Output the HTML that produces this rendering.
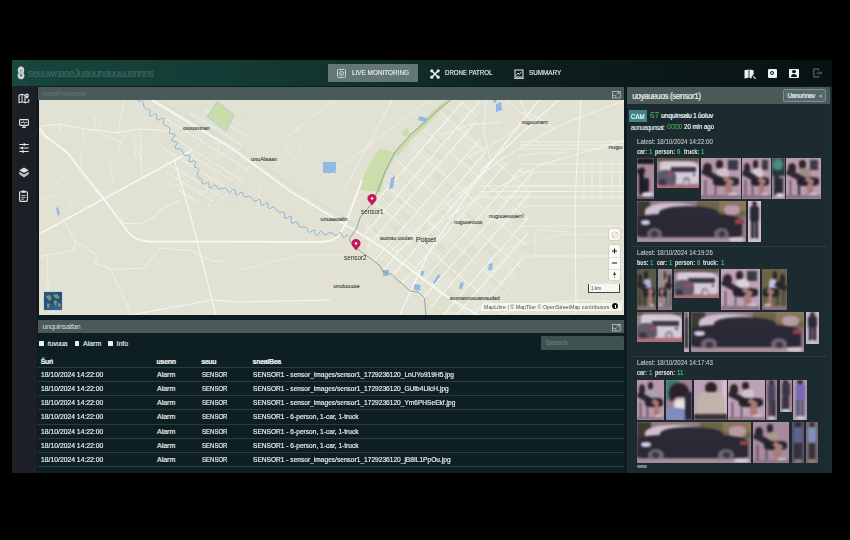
<!DOCTYPE html>
<html><head><meta charset="utf-8">
<style>
*{margin:0;padding:0;box-sizing:border-box}
html,body{width:850px;height:540px;overflow:hidden;background:#000;font-family:"Liberation Sans",sans-serif;color:#e6e9e8}
.a{position:absolute}
#hdr{left:12px;top:60px;width:820px;height:26px;background:linear-gradient(90deg,#17453d 0%,#153c36 25%,#112f2b 45%,#0c1b1b 70%,#091212 100%)}
#side{left:12px;top:86px;width:25px;height:387px;background:#1c1f26}
#main{left:37px;top:86px;width:795px;height:387px;background:#0c1b1e}
#mapbar{left:38px;top:87px;width:586px;height:13px;background:#4a5a59}
#map{left:39px;top:100px;width:585px;height:214.5px;background:#e2e2d4;overflow:hidden}
#tblbar{left:38px;top:320px;width:586px;height:13px;background:#4a5a59}
#tbl{left:38px;top:333px;width:586px;height:140px;background:#0d1f23}
#rp{left:627px;top:87px;width:205px;height:386px;background:linear-gradient(90deg,#1c2b30 0,#1c2b30 203px,#1a2f34 203px)}
#rphdr{left:627px;top:87px;width:203px;height:17px;background:#4a5a59}
.nav{font-size:7px;color:#e8eceb;white-space:nowrap;transform-origin:0 0;-webkit-text-stroke:.15px currentColor}
.t7{font-size:7px;white-space:nowrap;-webkit-text-stroke:.18px currentColor}
</style></head>
<body>
<div id="hdr" class="a"></div>

<!-- header content -->
<div class="a" style="left:12px;top:60px;width:16px;height:26px;background:#1a4a43;opacity:.55"></div>
<svg class="a" style="left:17px;top:65.5px" width="8" height="14" viewBox="0 0 8 14">
 <ellipse cx="4" cy="4.3" rx="3.2" ry="3.9" fill="#d3ddd9"/>
 <ellipse cx="4" cy="9.6" rx="3.4" ry="3.6" fill="#c9d5d1"/>
 <ellipse cx="4" cy="4.6" rx="1.6" ry="1.6" fill="#9fb3ad"/>
 <circle cx="4" cy="9.3" r="1.1" fill="#3d5a54"/>
 <path d="M1 7 H7" stroke="#8fa6a0" stroke-width=".6"/>
</svg>
<div class="a" style="left:28px;top:68px;font-size:10px;color:#3b6a61;white-space:nowrap;letter-spacing:-0.5px;-webkit-text-stroke:.2px currentColor">seuuwnaseJuauunauuuusnnns</div>
<div class="a" style="left:328px;top:64px;width:90px;height:18px;background:#637775;border-radius:1px"></div>
<svg class="a" style="left:337px;top:69px" width="9" height="9" viewBox="0 0 9 9">
 <rect x=".5" y=".5" width="8" height="8" fill="none" stroke="#c8d2d0" stroke-width="1" rx="1"/>
 <circle cx="4.5" cy="4.5" r="2.2" fill="none" stroke="#c8d2d0" stroke-width=".9"/>
 <circle cx="4.5" cy="4.5" r=".9" fill="#c8d2d0"/>
</svg>
<div class="a nav" style="left:352px;top:69.4px;transform:scaleX(.912)">LIVE MONITORING</div>
<svg class="a" style="left:430px;top:68.5px" width="10" height="10" viewBox="0 0 10 10">
 <path d="M2 2 L8 8 M8 2 L2 8" stroke="#e8eceb" stroke-width="1.6"/>
 <circle cx="1.8" cy="1.8" r="1.6" fill="#e8eceb"/><circle cx="8.2" cy="1.8" r="1.6" fill="#e8eceb"/>
 <circle cx="1.8" cy="8.2" r="1.6" fill="#e8eceb"/><circle cx="8.2" cy="8.2" r="1.6" fill="#e8eceb"/>
</svg>
<div class="a nav" style="left:445.4px;top:69.4px;transform:scaleX(.875)">DRONE PATROL</div>
<svg class="a" style="left:513.5px;top:68.5px" width="10" height="10" viewBox="0 0 10 10">
 <rect x="1" y="1" width="8" height="7" fill="none" stroke="#e8eceb" stroke-width="1"/>
 <path d="M2.5 6.5 L4 4 L5.5 5.5 L7.5 2.8" fill="none" stroke="#e8eceb" stroke-width=".9"/>
 <path d="M0 9.3 H10" stroke="#e8eceb" stroke-width="1"/>
</svg>
<div class="a nav" style="left:528.6px;top:69.4px;transform:scaleX(.9)">SUMMARY</div>
<!-- right icons -->
<svg class="a" style="left:744px;top:68.5px" width="13" height="10" viewBox="0 0 13 10">
 <path d="M0.5 1.2 L4.6 0.4 L4.6 8.8 L0.5 9.5Z M5.4 0.4 L9.6 1.2 L9.6 5.6 L7.6 7.6 L7.6 9.4 L5.4 8.8Z" fill="#eef1f0"/>
 <path d="M9.2 7.4 L11.8 9.8" stroke="#eef1f0" stroke-width="1.1"/>
</svg>
<div class="a" style="left:767.5px;top:69px;width:9px;height:8.6px;background:#eef1f0;border-radius:1.2px"></div>
<div class="a" style="left:770px;top:71.3px;width:4px;height:4px;border:1.2px solid #1a1f1f;border-radius:50%"></div>
<div class="a" style="left:789px;top:68.5px;width:10px;height:9.3px;background:#eef1f0;border-radius:1px"></div>
<div class="a" style="left:792.3px;top:69.8px;width:3.4px;height:3.4px;background:#121818;border-radius:50%"></div>
<div class="a" style="left:790.8px;top:74px;width:6.4px;height:2.5px;background:#121818;border-radius:3px 3px 0 0"></div>
<svg class="a" style="left:812.5px;top:68.3px" width="9" height="10" viewBox="0 0 9 10">
 <path d="M5.5 2.5 V1 H0.8 V9 H5.5 V7.5" fill="none" stroke="#6e7676" stroke-width="1"/>
 <path d="M3.5 5 H8.5 M7 3.5 L8.5 5 L7 6.5" fill="none" stroke="#6e7676" stroke-width=".9"/>
</svg>
<div id="side" class="a"></div>
<div id="main" class="a"></div>
<svg class="a" style="left:17.5px;top:93px" width="12" height="11" viewBox="0 0 12 11">
 <path d="M1 2.2 L4 1.2 L7 2.2 V9.8 L4 8.8 L1 9.8Z" fill="none" stroke="#e4e7e8" stroke-width="1.1" stroke-linejoin="round"/>
 <path d="M4 1.5 V8.5" stroke="#e4e7e8" stroke-width="1"/>
 <path d="M7 9.8 L10.8 8.8 V6" fill="none" stroke="#e4e7e8" stroke-width="1.1"/>
 <path d="M9 0.6 a1.9 1.9 0 0 1 1.9 1.9 c0 1.3 -1.9 3.3 -1.9 3.3 c0 0 -1.9 -2 -1.9 -3.3 a1.9 1.9 0 0 1 1.9 -1.9Z" fill="#e4e7e8"/>
 <circle cx="9" cy="2.5" r=".7" fill="#1c1f26"/>
</svg>
<svg class="a" style="left:18.5px;top:118.5px" width="10" height="9" viewBox="0 0 10 9">
 <rect x="0.6" y="0.6" width="8.8" height="5.8" rx=".8" fill="none" stroke="#e4e7e8" stroke-width="1.1"/>
 <path d="M1.8 3.5 H3.8 L4.5 2.3 L5.5 4.5 L6.2 3.5 H8.2" fill="none" stroke="#e4e7e8" stroke-width=".8"/>
 <path d="M3 8.3 H7" stroke="#e4e7e8" stroke-width="1.2"/><path d="M5 6.5 V8" stroke="#e4e7e8" stroke-width="1"/>
</svg>
<svg class="a" style="left:18.5px;top:142.5px" width="10" height="10" viewBox="0 0 10 10">
 <path d="M0.3 1.5 H9.7 M0.3 5 H9.7 M0.3 8.5 H9.7" stroke="#e4e7e8" stroke-width="1"/>
 <rect x="4.5" y="0.3" width="1.6" height="2.4" fill="#e4e7e8"/>
 <rect x="2.3" y="3.8" width="1.6" height="2.4" fill="#e4e7e8"/>
 <rect x="3.3" y="7.3" width="1.6" height="2.4" fill="#e4e7e8"/>
</svg>
<svg class="a" style="left:18.5px;top:166.5px" width="10" height="11" viewBox="0 0 10 11">
 <path d="M5 0.5 L9.7 3.3 L5 6.1 L0.3 3.3Z" fill="#dde1e0"/>
 <path d="M0.3 4.6 L5 7.4 L9.7 4.6 V7.2 L5 10.4 L0.3 7.2Z" fill="#c4c9c8"/>
</svg>
<svg class="a" style="left:18.8px;top:189.8px" width="9" height="12" viewBox="0 0 9 12">
 <rect x="0.6" y="1.8" width="7.8" height="9.6" rx=".9" fill="none" stroke="#e4e7e8" stroke-width="1.1"/>
 <rect x="2.6" y="0.6" width="3.8" height="2.2" rx=".5" fill="#e4e7e8"/>
 <path d="M2.3 5.4 H6.7 M2.3 7.3 H6.7 M2.3 9.2 H5" stroke="#e4e7e8" stroke-width=".8"/>
</svg>

<div id="mapbar" class="a"></div>
<div id="map" class="a"></div>
<!--MAP-->
<svg class="a" style="left:39px;top:100px" width="585" height="215" viewBox="39 100 585 215"><path d="M165.0 110.0 L200.0 100.0 L245.0 118.0 L250.0 150.0 L235.0 200.0 L200.0 205.0 L170.0 175.0 L160.0 140.0Z" fill="#dedfd1" opacity="0.5" stroke="none" stroke-width="0"/><path d="M363.0 229.0 L380.0 195.0 L398.0 160.0 L425.0 128.0 L445.0 110.0 L468.0 100.0 L480.0 100.0 L474.0 130.0 L488.0 158.0 L515.0 165.0 L532.0 172.0 L530.0 200.0 L526.0 250.0 L512.0 290.0 L485.0 316.0 L440.0 316.0 L400.0 282.0 L370.0 258.0Z" fill="#d9d9ca" opacity="0.3" stroke="none" stroke-width="0"/><clipPath id="cp1"><path d="M363 229 L380 195 L398 160 L425 128 L445 110 L468 100 L480 100 L474 130 L488 158 L515 165 L532 172 L530 200 L526 250 L512 290 L485 316 L440 316 L400 282 L370 258Z"/></clipPath><g clip-path="url(#cp1)"><path d="M167.3 229.2 L176.7 237.4 M169.1 227.1 L178.5 235.3 M170.9 225.0 L180.4 233.2 M172.8 222.9 L182.2 231.1 M174.6 220.8 L184.0 229.0 M176.4 218.6 L185.9 226.8 M178.3 216.5 L187.7 224.7 M180.1 214.4 L189.5 222.6 M181.9 212.3 L191.4 220.5 M183.8 210.2 L193.2 218.4 M187.7 205.7 L197.1 213.9 M189.3 203.9 L198.7 212.1 M190.9 202.1 L200.3 210.3 M192.4 200.3 L201.9 208.5 M194.0 198.4 L203.4 206.6 M195.6 196.6 L205.0 204.8 M197.2 194.8 L206.6 203.0 M198.7 193.0 L208.2 201.2 M200.3 191.2 L209.7 199.4 M201.9 189.4 L211.3 197.6 M203.4 187.6 L212.9 195.8 M205.0 185.8 L214.5 194.0 M222.4 165.8 L231.8 174.0 M224.2 163.7 L233.6 171.9 M226.0 161.6 L235.5 169.8 M227.9 159.5 L237.3 167.7 M229.7 157.4 L239.1 165.6 M231.5 155.2 L241.0 163.5 M233.4 153.1 L242.8 161.3 M235.2 151.0 L244.7 159.2 M237.1 148.9 L246.5 157.1 M238.9 146.8 L248.3 155.0 M240.7 144.7 L250.2 152.9 M242.6 142.6 L252.0 150.8 M244.4 140.5 L253.8 148.7 M250.1 133.9 L259.5 142.1 M251.9 131.8 L261.4 140.0 M253.8 129.7 L263.2 137.9 M255.6 127.6 L265.0 135.8 M257.4 125.5 L266.9 133.7 M259.3 123.4 L268.7 131.6 M261.1 121.2 L270.5 129.4 M264.1 117.8 L273.5 126.0 M265.4 116.3 L274.8 124.5 M266.7 114.8 L276.1 123.0 M268.0 113.3 L277.4 121.5 M269.3 111.8 L278.7 120.0 M270.6 110.3 L280.1 118.5 M275.2 105.0 L284.7 113.2 M276.5 103.5 L286.0 111.7 M277.8 102.0 L287.3 110.2 M279.2 100.5 L288.6 108.7 M280.5 99.0 L289.9 107.2 M281.8 97.5 L291.2 105.7 M283.1 96.0 L292.5 104.2 M284.4 94.4 L293.8 102.7 M285.7 92.9 L295.1 101.1 M287.0 91.4 L296.5 99.6 M288.3 89.9 L297.8 98.1 M289.7 88.4 L299.1 96.6 M291.0 86.9 L300.4 95.1 M292.3 85.4 L301.7 93.6 M298.0 78.8 L307.4 87.0 M299.5 77.0 L309.0 85.2 M301.1 75.2 L310.5 83.4 M302.7 73.4 L312.1 81.6 M304.3 71.6 L313.7 79.8 M305.8 69.8 L315.3 78.0 M307.4 68.0 L316.8 76.2 M309.0 66.2 L318.4 74.4 M314.0 60.5 L323.4 68.7 M315.8 58.3 L325.2 66.5 M317.6 56.2 L327.1 64.4 M319.5 54.1 L328.9 62.3 M321.3 52.0 L330.7 60.2 M323.1 49.9 L332.6 58.1 M325.0 47.8 L334.4 56.0 M326.8 45.7 L336.2 53.9 M328.6 43.6 L338.1 51.8 M330.5 41.4 L339.9 49.6 M332.3 39.3 L341.8 47.5 M334.2 37.2 L343.6 45.4 M336.0 35.1 L345.4 43.3 M337.8 33.0 L347.3 41.2 M368.4 -2.1 L377.8 6.1 M370.2 -4.3 L379.6 3.9 M372.0 -6.4 L381.5 1.8 M373.9 -8.5 L383.3 -0.3 M375.7 -10.6 L385.2 -2.4 M377.6 -12.7 L387.0 -4.5 M380.6 -16.3 L390.1 -8.1 M382.5 -18.4 L391.9 -10.2 M384.3 -20.5 L393.7 -12.3 M386.2 -22.6 L395.6 -14.4 M388.0 -24.7 L397.4 -16.5 M389.8 -26.8 L399.3 -18.6 M391.7 -28.9 L401.1 -20.7 M393.5 -31.1 L402.9 -22.9 M395.3 -33.2 L404.8 -25.0 M397.2 -35.3 L406.6 -27.1 M399.0 -37.4 L408.4 -29.2 M404.1 -43.3 L413.6 -35.1 M405.7 -45.1 L415.1 -36.9 M407.3 -46.9 L416.7 -38.7 M408.9 -48.7 L418.3 -40.5 M410.4 -50.5 L419.9 -42.3 M412.0 -52.3 L421.4 -44.1 M413.6 -54.1 L423.0 -45.9 M415.1 -56.0 L424.6 -47.8 M416.7 -57.8 L426.2 -49.6 M418.3 -59.6 L427.7 -51.4 M419.9 -61.4 L429.3 -53.2 M421.4 -63.2 L430.9 -55.0 M425.6 -68.0 L435.0 -59.8 M426.9 -69.5 L436.3 -61.3 M428.2 -71.0 L437.7 -62.8 M429.5 -72.5 L439.0 -64.3 M430.8 -74.0 L440.3 -65.8 M432.2 -75.5 L441.6 -67.3 M433.5 -77.0 L442.9 -68.8 M434.8 -78.5 L444.2 -70.3 M436.1 -80.1 L445.5 -71.9 M437.4 -81.6 L446.8 -73.4 M438.7 -83.1 L448.2 -74.9 M440.0 -84.6 L449.5 -76.4 M441.3 -86.1 L450.8 -77.9 M442.7 -87.6 L452.1 -79.4 M444.0 -89.1 L453.4 -80.9 M445.3 -90.6 L454.7 -82.4 M446.6 -92.1 L456.0 -83.9 M447.9 -93.6 L457.3 -85.4 M449.2 -95.1 L458.6 -86.9 M178.4 238.9 L187.8 247.1 M180.0 237.1 L189.4 245.3 M181.5 235.3 L191.0 243.5 M183.1 233.5 L192.5 241.7 M184.7 231.7 L194.1 239.9 M186.3 229.8 L195.7 238.0 M187.8 228.0 L197.3 236.2 M189.4 226.2 L198.8 234.4 M191.0 224.4 L200.4 232.6 M192.6 222.6 L202.0 230.8 M194.1 220.8 L203.6 229.0 M195.7 219.0 L205.1 227.2 M197.3 217.2 L206.7 225.4 M203.3 210.3 L212.7 218.5 M205.1 208.2 L214.5 216.4 M206.9 206.0 L216.4 214.2 M208.8 203.9 L218.2 212.1 M210.6 201.8 L220.1 210.0 M212.5 199.7 L221.9 207.9 M214.3 197.6 L223.7 205.8 M216.1 195.5 L225.6 203.7 M218.0 193.4 L227.4 201.6 M219.8 191.3 L229.2 199.5 M221.6 189.1 L231.1 197.3 M223.5 187.0 L232.9 195.2 M225.3 184.9 L234.8 193.1 M227.2 182.8 L236.6 191.0 M252.9 153.2 L262.3 161.4 M254.8 151.1 L264.2 159.3 M256.6 148.9 L266.0 157.1 M258.4 146.8 L267.9 155.0 M260.3 144.7 L269.7 152.9 M267.1 136.8 L276.6 145.0 M268.7 135.0 L278.1 143.2 M270.3 133.2 L279.7 141.4 M271.9 131.4 L281.3 139.6 M273.4 129.6 L282.9 137.8 M275.0 127.8 L284.4 136.0 M280.3 121.7 L289.7 129.9 M281.9 119.9 L291.3 128.1 M283.4 118.1 L292.9 126.3 M285.0 116.3 L294.4 124.5 M286.6 114.4 L296.0 122.6 M292.0 108.2 L301.4 116.4 M293.3 106.7 L302.7 114.9 M294.6 105.2 L304.0 113.4 M295.9 103.7 L305.4 111.9 M297.2 102.2 L306.7 110.4 M298.5 100.7 L308.0 108.9 M302.2 96.5 L311.6 104.7 M303.8 94.6 L313.2 102.8 M305.4 92.8 L314.8 101.0 M306.9 91.0 L316.4 99.2 M308.5 89.2 L317.9 97.4 M310.1 87.4 L319.5 95.6 M311.7 85.6 L321.1 93.8 M313.2 83.8 L322.7 92.0 M314.8 82.0 L324.2 90.2 M316.4 80.2 L325.8 88.4 M318.0 78.3 L327.4 86.5 M319.5 76.5 L329.0 84.7 M323.6 71.8 L333.0 80.0 M324.9 70.3 L334.4 78.5 M326.2 68.8 L335.7 77.0 M327.6 67.3 L337.0 75.5 M328.9 65.8 L338.3 74.0 M330.2 64.3 L339.6 72.5 M331.5 62.8 L340.9 71.0 M332.8 61.3 L342.2 69.5 M334.1 59.8 L343.5 68.0 M335.4 58.3 L344.9 66.5 M336.7 56.7 L346.2 64.9 M338.0 55.2 L347.5 63.4 M339.4 53.7 L348.8 61.9 M340.7 52.2 L350.1 60.4 M342.0 50.7 L351.4 58.9 M343.3 49.2 L352.7 57.4 M344.6 47.7 L354.0 55.9 M345.9 46.2 L355.4 54.4 M347.2 44.7 L356.7 52.9 M348.5 43.2 L358.0 51.4 M373.8 14.1 L383.2 22.3 M375.6 12.0 L385.1 20.2 M377.5 9.9 L386.9 18.1 M379.3 7.8 L388.7 16.0 M381.2 5.6 L390.6 13.8 M383.0 3.5 L392.4 11.7 M384.8 1.4 L394.3 9.6 M387.6 -1.8 L397.0 6.5 M388.9 -3.3 L398.3 4.9 M390.2 -4.8 L399.6 3.4 M391.5 -6.3 L401.0 1.9 M392.8 -7.8 L402.3 0.4 M394.1 -9.3 L403.6 -1.1 M395.5 -10.8 L404.9 -2.6 M396.8 -12.3 L406.2 -4.1 M398.1 -13.8 L407.5 -5.6 M399.4 -15.3 L408.8 -7.1 M400.7 -16.8 L410.1 -8.6 M402.0 -18.4 L411.5 -10.2 M403.3 -19.9 L412.8 -11.7 M404.6 -21.4 L414.1 -13.2 M406.0 -22.9 L415.4 -14.7 M407.3 -24.4 L416.7 -16.2 M408.6 -25.9 L418.0 -17.7 M409.9 -27.4 L419.3 -19.2 M411.2 -28.9 L420.6 -20.7 M416.1 -34.5 L425.5 -26.3 M417.9 -36.6 L427.3 -28.4 M419.7 -38.7 L429.2 -30.5 M421.6 -40.9 L431.0 -32.7 M423.4 -43.0 L432.8 -34.8 M425.3 -45.1 L434.7 -36.9 M427.1 -47.2 L436.5 -39.0 M428.9 -49.3 L438.4 -41.1 M432.9 -53.9 L442.3 -45.7 M434.2 -55.4 L443.6 -47.2 M435.5 -56.9 L445.0 -48.7 M436.8 -58.4 L446.3 -50.2 M438.1 -59.9 L447.6 -51.7 M439.5 -61.4 L448.9 -53.2 M440.8 -62.9 L450.2 -54.7 M442.1 -64.4 L451.5 -56.2 M443.4 -65.9 L452.8 -57.7 M444.7 -67.5 L454.1 -59.3 M446.0 -69.0 L455.4 -60.8 M447.3 -70.5 L456.8 -62.3 M448.6 -72.0 L458.1 -63.8 M450.0 -73.5 L459.4 -65.3 M451.3 -75.0 L460.7 -66.8 M452.6 -76.5 L462.0 -68.3 M453.9 -78.0 L463.3 -69.8 M455.2 -79.5 L464.6 -71.3 M456.5 -81.0 L465.9 -72.8 M187.7 247.0 L197.1 255.2 M189.5 244.9 L199.0 253.1 M191.4 242.8 L200.8 251.0 M193.2 240.7 L202.7 248.9 M195.1 238.5 L204.5 246.7 M196.9 236.4 L206.3 244.6 M198.7 234.3 L208.2 242.5 M200.6 232.2 L210.0 240.4 M202.4 230.1 L211.8 238.3 M204.2 228.0 L213.7 236.2 M208.4 223.2 L217.8 231.4 M210.0 221.4 L219.4 229.6 M211.5 219.6 L221.0 227.8 M213.1 217.8 L222.5 226.0 M214.7 216.0 L224.1 224.2 M216.3 214.2 L225.7 222.4 M217.8 212.4 L227.3 220.6 M219.4 210.5 L228.8 218.7 M221.0 208.7 L230.4 216.9 M222.6 206.9 L232.0 215.1 M224.1 205.1 L233.6 213.3 M225.7 203.3 L235.1 211.5 M227.3 201.5 L236.7 209.7 M228.8 199.7 L238.3 207.9 M230.4 197.9 L239.9 206.1 M232.0 196.1 L241.4 204.3 M236.7 190.6 L246.2 198.8 M238.3 188.8 L247.7 197.0 M239.9 187.0 L249.3 195.2 M241.5 185.2 L250.9 193.4 M243.0 183.4 L252.5 191.6 M244.6 181.5 L254.0 189.7 M246.2 179.7 L255.6 187.9 M247.8 177.9 L257.2 186.1 M249.3 176.1 L258.8 184.3 M250.9 174.3 L260.3 182.5 M252.5 172.5 L261.9 180.7 M254.1 170.7 L263.5 178.9 M259.3 164.7 L268.7 172.9 M261.1 162.5 L270.6 170.7 M263.0 160.4 L272.4 168.6 M264.8 158.3 L274.2 166.5 M266.6 156.2 L276.1 164.4 M268.5 154.1 L277.9 162.3 M270.3 152.0 L279.7 160.2 M275.8 145.6 L285.3 153.8 M277.4 143.8 L286.9 152.0 M279.0 142.0 L288.4 150.2 M280.6 140.2 L290.0 148.4 M282.1 138.4 L291.6 146.6 M286.3 133.6 L295.7 141.8 M287.9 131.8 L297.3 140.0 M289.4 130.0 L298.9 138.2 M291.0 128.2 L300.4 136.4 M292.6 126.3 L302.0 134.6 M294.2 124.5 L303.6 132.7 M295.7 122.7 L305.2 130.9 M297.3 120.9 L306.7 129.1 M298.9 119.1 L308.3 127.3 M300.5 117.3 L309.9 125.5 M302.0 115.5 L311.5 123.7 M303.6 113.7 L313.0 121.9 M305.2 111.9 L314.6 120.1 M306.8 110.0 L316.2 118.2 M308.3 108.2 L317.8 116.4 M309.9 106.4 L319.3 114.6 M315.1 100.4 L324.6 108.6 M317.0 98.3 L326.4 106.5 M318.8 96.2 L328.2 104.4 M320.6 94.1 L330.1 102.3 M323.5 90.8 L333.0 99.0 M325.1 89.0 L334.5 97.2 M326.7 87.1 L336.1 95.4 M328.2 85.3 L337.7 93.5 M329.8 83.5 L339.2 91.7 M331.4 81.7 L340.8 89.9 M333.0 79.9 L342.4 88.1 M334.5 78.1 L344.0 86.3 M336.1 76.3 L345.5 84.5 M341.0 70.7 L350.4 78.9 M342.6 68.9 L352.0 77.1 M344.1 67.1 L353.6 75.3 M345.7 65.2 L355.1 73.4 M347.3 63.4 L356.7 71.6 M348.9 61.6 L358.3 69.8 M350.4 59.8 L359.9 68.0 M352.0 58.0 L361.4 66.2 M353.6 56.2 L363.0 64.4 M358.1 50.9 L367.6 59.1 M359.7 49.1 L369.2 57.3 M361.3 47.3 L370.7 55.5 M362.9 45.5 L372.3 53.7 M364.4 43.7 L373.9 51.9 M366.0 41.9 L375.5 50.1 M367.6 40.1 L377.0 48.3 M369.2 38.3 L378.6 46.5 M370.7 36.4 L380.2 44.6 M372.3 34.6 L381.7 42.8 M373.9 32.8 L383.3 41.0 M375.5 31.0 L384.9 39.2 M377.0 29.2 L386.5 37.4 M378.6 27.4 L388.0 35.6 M380.2 25.6 L389.6 33.8 M409.6 -8.3 L419.0 -0.1 M411.4 -10.4 L420.9 -2.2 M413.3 -12.5 L422.7 -4.3 M415.1 -14.6 L424.5 -6.4 M417.0 -16.7 L426.4 -8.5 M423.2 -23.9 L432.7 -15.7 M424.8 -25.7 L434.2 -17.5 M426.4 -27.6 L435.8 -19.4 M428.0 -29.4 L437.4 -21.2 M429.5 -31.2 L439.0 -23.0 M431.1 -33.0 L440.5 -24.8 M432.7 -34.8 L442.1 -26.6 M434.3 -36.6 L443.7 -28.4 M438.4 -41.3 L447.8 -33.1 M439.9 -43.1 L449.4 -34.9 M441.5 -45.0 L450.9 -36.8 M443.1 -46.8 L452.5 -38.6 M444.7 -48.6 L454.1 -40.4 M446.2 -50.4 L455.7 -42.2 M219.6 226.0 L229.1 234.2 M221.5 223.9 L230.9 232.1 M223.3 221.8 L232.8 230.0 M225.2 219.7 L234.6 227.9 M227.0 217.6 L236.4 225.8 M228.8 215.5 L238.3 223.7 M230.7 213.4 L240.1 221.6 M232.5 211.2 L241.9 219.4 M234.3 209.1 L243.8 217.3 M236.2 207.0 L245.6 215.2 M238.0 204.9 L247.5 213.1 M239.9 202.8 L249.3 211.0 M243.9 198.1 L253.3 206.3 M245.7 196.0 L255.2 204.2 M247.6 193.9 L257.0 202.1 M249.4 191.8 L258.8 200.0 M251.3 189.7 L260.7 197.9 M253.1 187.6 L262.5 195.8 M260.0 179.6 L269.4 187.8 M261.8 177.5 L271.2 185.7 M263.6 175.4 L273.1 183.6 M265.5 173.3 L274.9 181.5 M267.3 171.2 L276.8 179.4 M269.2 169.1 L278.6 177.3 M271.0 167.0 L280.4 175.2 M274.8 162.6 L284.2 170.8 M276.6 160.5 L286.0 168.7 M278.4 158.4 L287.9 166.6 M280.3 156.3 L289.7 164.5 M282.1 154.2 L291.6 162.4 M284.0 152.1 L293.4 160.3 M285.8 149.9 L295.2 158.1 M288.5 146.9 L297.9 155.1 M290.0 145.1 L299.5 153.3 M291.6 143.3 L301.0 151.5 M293.2 141.4 L302.6 149.6 M294.8 139.6 L304.2 147.8 M296.3 137.8 L305.8 146.0 M297.9 136.0 L307.3 144.2 M299.5 134.2 L308.9 142.4 M301.1 132.4 L310.5 140.6 M302.6 130.6 L312.1 138.8 M304.2 128.8 L313.6 137.0 M305.8 127.0 L315.2 135.2 M309.7 122.5 L319.1 130.7 M311.3 120.7 L320.7 128.9 M312.8 118.9 L322.3 127.1 M314.4 117.0 L323.8 125.2 M316.0 115.2 L325.4 123.4 M317.5 113.4 L327.0 121.6 M319.1 111.6 L328.6 119.8 M320.7 109.8 L330.1 118.0 M322.3 108.0 L331.7 116.2 M323.8 106.2 L333.3 114.4 M325.4 104.4 L334.9 112.6 M327.0 102.5 L336.4 110.7 M328.6 100.7 L338.0 108.9 M330.1 98.9 L339.6 107.1 M331.7 97.1 L341.2 105.3 M335.7 92.6 L345.1 100.8 M337.0 91.1 L346.4 99.3 M338.3 89.6 L347.7 97.8 M339.6 88.0 L349.0 96.2 M340.9 86.5 L350.4 94.7 M342.2 85.0 L351.7 93.2 M343.5 83.5 L353.0 91.7 M344.9 82.0 L354.3 90.2 M346.2 80.5 L355.6 88.7 M347.5 79.0 L356.9 87.2 M352.9 72.8 L362.3 81.0 M354.7 70.7 L364.2 78.9 M356.6 68.5 L366.0 76.7 M358.4 66.4 L367.8 74.6 M360.2 64.3 L369.7 72.5 M362.1 62.2 L371.5 70.4 M387.8 32.6 L397.2 40.8 M389.6 30.5 L399.1 38.7 M391.5 28.4 L400.9 36.6 M393.3 26.3 L402.7 34.5 M395.1 24.2 L404.6 32.4 M397.0 22.1 L406.4 30.3 M403.0 15.2 L412.4 23.4 M404.3 13.6 L413.7 21.8 M405.6 12.1 L415.0 20.3 M406.9 10.6 L416.3 18.8 M408.2 9.1 L417.7 17.3 M409.5 7.6 L419.0 15.8 M410.8 6.1 L420.3 14.3 M412.2 4.6 L421.6 12.8 M413.5 3.1 L422.9 11.3 M414.8 1.6 L424.2 9.8 M416.1 0.1 L425.5 8.3 M417.4 -1.5 L426.8 6.7 M418.7 -3.0 L428.1 5.2 M420.0 -4.5 L429.5 3.7 M421.3 -6.0 L430.8 2.2 M422.7 -7.5 L432.1 0.7 M424.0 -9.0 L433.4 -0.8 M425.3 -10.5 L434.7 -2.3 M426.6 -12.0 L436.0 -3.8 M427.9 -13.5 L437.3 -5.3 M205.0 262.0 L214.4 270.2 M206.8 259.9 L216.3 268.1 M208.7 257.8 L218.1 266.0 M210.5 255.7 L219.9 263.9 M245.0 216.0 L254.4 224.2 M246.3 214.5 L255.7 222.7 M247.6 213.0 L257.1 221.2 M248.9 211.5 L258.4 219.7 M250.2 210.0 L259.7 218.2 M251.6 208.5 L261.0 216.7 M255.1 204.4 L264.5 212.6 M256.9 202.3 L266.4 210.5 M258.8 200.2 L268.2 208.4 M260.6 198.1 L270.1 206.3 M262.5 195.9 L271.9 204.1 M264.3 193.8 L273.7 202.0 M266.1 191.7 L275.6 199.9 M269.3 188.1 L278.7 196.3 M270.9 186.2 L280.3 194.4 M272.5 184.4 L281.9 192.6 M274.0 182.6 L283.5 190.8 M275.6 180.8 L285.0 189.0 M277.2 179.0 L286.6 187.2 M278.8 177.2 L288.2 185.4 M280.3 175.4 L289.8 183.6 M281.9 173.6 L291.3 181.8 M283.5 171.7 L292.9 179.9 M285.1 169.9 L294.5 178.1 M286.6 168.1 L296.1 176.3 M288.2 166.3 L297.6 174.5 M289.8 164.5 L299.2 172.7 M291.4 162.7 L300.8 170.9 M292.9 160.9 L302.4 169.1 M296.2 157.2 L305.6 165.4 M297.5 155.7 L306.9 163.9 M298.8 154.1 L308.2 162.3 M300.1 152.6 L309.5 160.8 M301.4 151.1 L310.8 159.3 M302.7 149.6 L312.2 157.8 M304.0 148.1 L313.5 156.3 M305.3 146.6 L314.8 154.8 M306.7 145.1 L316.1 153.3 M308.0 143.6 L317.4 151.8 M309.3 142.1 L318.7 150.3 M310.6 140.6 L320.0 148.8 M311.9 139.1 L321.3 147.3 M313.2 137.5 L322.7 145.7 M314.5 136.0 L324.0 144.2 M315.8 134.5 L325.3 142.7 M317.2 133.0 L326.6 141.2 M318.5 131.5 L327.9 139.7 M319.8 130.0 L329.2 138.2 M321.1 128.5 L330.5 136.7 M324.5 124.5 L334.0 132.7 M325.9 123.0 L335.3 131.2 M327.2 121.5 L336.6 129.7 M328.5 120.0 L337.9 128.2 M329.8 118.5 L339.2 126.7 M331.1 117.0 L340.5 125.2 M332.4 115.5 L341.9 123.7 M333.7 113.9 L343.2 122.1 M363.6 79.6 L373.0 87.8 M365.4 77.5 L374.9 85.7 M367.3 75.4 L376.7 83.6 M369.1 73.2 L378.6 81.4 M371.0 71.1 L380.4 79.3 M372.8 69.0 L382.2 77.2 M374.6 66.9 L384.1 75.1 M376.5 64.8 L385.9 73.0 M378.3 62.7 L387.7 70.9 M380.1 60.6 L389.6 68.8 M382.0 58.4 L391.4 66.6 M383.8 56.3 L393.2 64.5 M385.7 54.2 L395.1 62.4 M389.9 49.3 L399.4 57.5 M391.2 47.8 L400.7 56.0 M392.6 46.3 L402.0 54.5 M393.9 44.8 L403.3 53.0 M395.2 43.3 L404.6 51.5 M396.5 41.7 L405.9 49.9 M397.8 40.2 L407.2 48.4 M399.1 38.7 L408.6 46.9 M400.4 37.2 L409.9 45.4 M401.7 35.7 L411.2 43.9 M403.1 34.2 L412.5 42.4 M404.4 32.7 L413.8 40.9 M406.7 30.0 L416.2 38.2 M408.3 28.1 L417.8 36.3 M409.9 26.3 L419.3 34.5 M411.5 24.5 L420.9 32.7 M413.0 22.7 L422.5 30.9 M414.6 20.9 L424.0 29.1 M416.2 19.1 L425.6 27.3 M417.8 17.3 L427.2 25.5 M419.3 15.5 L428.8 23.7 M420.9 13.7 L430.3 21.9 M422.5 11.8 L431.9 20.0 M453.3 -23.6 L462.8 -15.4 M454.9 -25.4 L464.3 -17.2 M456.5 -27.2 L465.9 -19.0 M458.0 -29.1 L467.5 -20.9 M459.6 -30.9 L469.1 -22.7 M465.9 -38.1 L475.4 -29.9 M467.8 -40.3 L477.2 -32.1 M469.6 -42.4 L479.0 -34.2 M471.4 -44.5 L480.9 -36.3 M473.3 -46.6 L482.7 -38.4 M475.1 -48.7 L484.6 -40.5 M477.0 -50.8 L486.4 -42.6 M478.8 -52.9 L488.2 -44.7 M480.6 -55.0 L490.1 -46.8 M482.5 -57.2 L491.9 -49.0 M484.3 -59.3 L493.7 -51.1 M486.1 -61.4 L495.6 -53.2 M488.0 -63.5 L497.4 -55.3 M214.2 270.1 L223.7 278.3 M215.8 268.2 L225.2 276.4 M217.4 266.4 L226.8 274.6 M219.0 264.6 L228.4 272.8 M220.5 262.8 L230.0 271.0 M222.1 261.0 L231.5 269.2 M225.8 256.7 L235.3 264.9 M227.4 254.9 L236.8 263.1 M229.0 253.1 L238.4 261.3 M230.6 251.3 L240.0 259.5 M232.1 249.5 L241.6 257.7 M233.7 247.7 L243.1 255.9 M235.3 245.9 L244.7 254.1 M236.9 244.0 L246.3 252.2 M238.4 242.2 L247.9 250.4 M242.5 237.6 L251.9 245.8 M244.3 235.4 L253.8 243.6 M246.2 233.3 L255.6 241.5 M248.0 231.2 L257.4 239.4 M249.8 229.1 L259.3 237.3 M254.4 223.9 L263.8 232.1 M256.0 222.1 L265.4 230.3 M257.5 220.3 L267.0 228.5 M259.1 218.5 L268.5 226.7 M260.7 216.6 L270.1 224.8 M262.2 214.8 L271.7 223.0 M265.6 210.9 L275.1 219.1 M267.5 208.8 L276.9 217.0 M269.3 206.7 L278.7 214.9 M271.1 204.6 L280.6 212.8 M273.0 202.5 L282.4 210.7 M274.8 200.4 L284.3 208.6 M276.7 198.3 L286.1 206.5 M278.5 196.1 L287.9 204.3 M280.3 194.0 L289.8 202.2 M282.2 191.9 L291.6 200.1 M284.0 189.8 L293.4 198.0 M289.5 183.5 L298.9 191.7 M291.0 181.7 L300.5 189.9 M292.6 179.9 L302.0 188.1 M294.2 178.1 L303.6 186.3 M295.8 176.3 L305.2 184.5 M297.3 174.5 L306.8 182.7 M298.9 172.7 L308.3 180.9 M300.5 170.8 L309.9 179.0 M302.1 169.0 L311.5 177.2 M303.6 167.2 L313.1 175.4 M305.2 165.4 L314.6 173.6 M306.8 163.6 L316.2 171.8 M312.1 157.5 L321.5 165.7 M313.9 155.4 L323.3 163.6 M315.7 153.3 L325.2 161.5 M317.6 151.2 L327.0 159.4 M319.4 149.1 L328.8 157.3 M321.2 147.0 L330.7 155.2 M323.1 144.8 L332.5 153.0 M324.9 142.7 L334.4 150.9 M326.8 140.6 L336.2 148.8 M328.6 138.5 L338.0 146.7 M330.4 136.4 L339.9 144.6 M332.3 134.3 L341.7 142.5 M336.5 129.4 L346.0 137.6 M338.1 127.6 L347.6 135.8 M339.7 125.7 L349.1 133.9 M341.3 123.9 L350.7 132.1 M342.8 122.1 L352.3 130.3 M347.5 116.8 L356.9 125.0 M349.1 114.9 L358.5 123.1 M350.7 113.1 L360.1 121.3 M352.2 111.3 L361.7 119.5 M353.8 109.5 L363.2 117.7 M355.4 107.7 L364.8 115.9 M357.3 105.5 L366.7 113.7 M359.1 103.4 L368.6 111.6 M361.0 101.3 L370.4 109.5 M362.8 99.1 L372.2 107.3 M368.8 92.2 L378.3 100.4 M370.1 90.7 L379.6 98.9 M371.5 89.2 L380.9 97.4 M372.8 87.7 L382.2 95.9 M374.1 86.2 L383.5 94.4 M375.4 84.7 L384.8 92.9 M376.7 83.2 L386.1 91.4 M378.0 81.6 L387.5 89.8 M379.3 80.1 L388.8 88.3 M385.6 73.0 L395.0 81.2 M387.4 70.9 L396.8 79.1 M389.2 68.7 L398.7 76.9 M391.1 66.6 L400.5 74.8 M392.9 64.5 L402.3 72.7 M394.8 62.4 L404.2 70.6 M396.6 60.3 L406.0 68.5 M398.4 58.2 L407.9 66.4 M400.3 56.1 L409.7 64.3 M402.1 53.9 L411.5 62.2 M403.9 51.8 L413.4 60.0 M405.8 49.7 L415.2 57.9 M411.0 43.8 L420.4 52.0 M412.8 41.6 L422.2 49.8 M414.6 39.5 L424.1 47.7 M416.5 37.4 L425.9 45.6 M418.3 35.3 L427.7 43.5 M420.1 33.2 L429.6 41.4 M422.0 31.1 L431.4 39.3 M423.8 29.0 L433.2 37.2 M425.7 26.9 L435.1 35.1 M427.5 24.7 L436.9 32.9 M429.3 22.6 L438.8 30.8 M434.1 17.2 L443.5 25.4 M435.6 15.4 L445.1 23.6 M437.2 13.6 L446.6 21.8 M438.8 11.7 L448.2 19.9 M440.4 9.9 L449.8 18.1 M441.9 8.1 L451.4 16.3 M443.5 6.3 L452.9 14.5 M445.1 4.5 L454.5 12.7 M446.7 2.7 L456.1 10.9 M448.2 0.9 L457.7 9.1 M449.8 -0.9 L459.2 7.3 M451.4 -2.7 L460.8 5.5 M453.0 -4.6 L462.4 3.6 M454.5 -6.4 L464.0 1.8 M456.1 -8.2 L465.5 0.0 M458.5 -10.9 L467.9 -2.7 M459.8 -12.4 L469.2 -4.2 M461.1 -13.9 L470.5 -5.7 M462.4 -15.4 L471.8 -7.2 M463.7 -16.9 L473.2 -8.7 M465.0 -18.4 L474.5 -10.2 M466.3 -20.0 L475.8 -11.8 M467.7 -21.5 L477.1 -13.3 M469.0 -23.0 L478.4 -14.8 M470.3 -24.5 L479.7 -16.3 M471.6 -26.0 L481.0 -17.8 M472.9 -27.5 L482.3 -19.3 M474.2 -29.0 L483.7 -20.8 M475.5 -30.5 L485.0 -22.3 M476.8 -32.0 L486.3 -23.8 M478.2 -33.5 L487.6 -25.3 M479.5 -35.1 L488.9 -26.9 M224.8 279.2 L234.2 287.4 M226.4 277.4 L235.8 285.6 M228.0 275.6 L237.4 283.8 M229.5 273.8 L239.0 282.0 M231.1 272.0 L240.5 280.2 M232.7 270.2 L242.1 278.4 M234.3 268.4 L243.7 276.6 M235.8 266.6 L245.3 274.8 M237.4 264.8 L246.8 273.0 M243.4 257.9 L252.8 266.1 M245.2 255.8 L254.7 264.0 M247.1 253.6 L256.5 261.8 M248.9 251.5 L258.3 259.7 M250.7 249.4 L260.2 257.6 M255.5 243.9 L265.0 252.1 M257.1 242.1 L266.6 250.3 M258.7 240.3 L268.1 248.5 M260.3 238.5 L269.7 246.7 M261.8 236.6 L271.3 244.8 M263.4 234.8 L272.9 243.0 M265.0 233.0 L274.4 241.2 M266.6 231.2 L276.0 239.4 M268.1 229.4 L277.6 237.6 M269.7 227.6 L279.2 235.8 M271.3 225.8 L280.7 234.0 M272.9 224.0 L282.3 232.2 M274.4 222.2 L283.9 230.4 M280.3 215.4 L289.7 223.6 M282.1 213.3 L291.5 221.5 M283.9 211.2 L293.4 219.4 M285.8 209.1 L295.2 217.3 M290.9 203.2 L300.4 211.4 M292.3 201.7 L301.7 209.9 M293.6 200.2 L303.0 208.4 M294.9 198.6 L304.3 206.8 M296.2 197.1 L305.6 205.3 M297.5 195.6 L306.9 203.8 M298.8 194.1 L308.2 202.3 M300.1 192.6 L309.6 200.8 M301.4 191.1 L310.9 199.3 M307.2 184.5 L316.6 192.7 M309.0 182.4 L318.5 190.6 M310.9 180.3 L320.3 188.5 M312.7 178.2 L322.1 186.4 M314.5 176.0 L324.0 184.2 M328.9 159.5 L338.3 167.7 M330.5 157.7 L339.9 165.9 M332.1 155.9 L341.5 164.1 M333.6 154.1 L343.1 162.3 M335.2 152.3 L344.6 160.5 M336.8 150.4 L346.2 158.6 M338.4 148.6 L347.8 156.8 M339.9 146.8 L349.4 155.0 M341.5 145.0 L350.9 153.2 M343.1 143.2 L352.5 151.4 M368.6 113.9 L378.0 122.1 M369.9 112.4 L379.3 120.6 M371.2 110.8 L380.6 119.0 M372.5 109.3 L381.9 117.5 M373.8 107.8 L383.3 116.0 M375.1 106.3 L384.6 114.5 M376.4 104.8 L385.9 113.0 M377.8 103.3 L387.2 111.5 M379.1 101.8 L388.5 110.0 M380.4 100.3 L389.8 108.5 M381.7 98.8 L391.1 107.0 M383.0 97.3 L392.4 105.5 M384.3 95.8 L393.8 104.0 M385.6 94.2 L395.1 102.4 M386.9 92.7 L396.4 100.9 M388.3 91.2 L397.7 99.4 M389.6 89.7 L399.0 97.9 M390.9 88.2 L400.3 96.4 M392.2 86.7 L401.6 94.9 M393.5 85.2 L402.9 93.4 M399.3 78.5 L408.7 86.7 M400.6 77.0 L410.0 85.2 M401.9 75.5 L411.4 83.7 M403.2 74.0 L412.7 82.2 M404.5 72.5 L414.0 80.7 M405.9 71.0 L415.3 79.2 M407.2 69.5 L416.6 77.7 M408.5 68.0 L417.9 76.2 M409.8 66.5 L419.2 74.7 M411.1 64.9 L420.5 73.1 M412.4 63.4 L421.8 71.6 M413.7 61.9 L423.2 70.1 M416.9 58.2 L426.4 66.4 M418.8 56.1 L428.2 64.3 M420.6 54.0 L430.0 62.2 M422.4 51.9 L431.9 60.1 M424.3 49.8 L433.7 58.0 M426.1 47.7 L435.5 55.9 M427.9 45.6 L437.4 53.8 M429.8 43.4 L439.2 51.7 M431.6 41.3 L441.1 49.5 M433.5 39.2 L442.9 47.4 M438.7 33.2 L448.1 41.4 M440.0 31.7 L449.4 39.9 M441.3 30.2 L450.7 38.4 M442.6 28.7 L452.1 36.9 M443.9 27.2 L453.4 35.4 M445.2 25.7 L454.7 33.9 M446.6 24.2 L456.0 32.4 M447.9 22.6 L457.3 30.8 M450.3 19.9 L459.7 28.1 M452.1 17.8 L461.5 26.0 M453.9 15.7 L463.4 23.9 M455.8 13.5 L465.2 21.7 M457.6 11.4 L467.1 19.6 M459.5 9.3 L468.9 17.5 M461.3 7.2 L470.7 15.4 M463.1 5.1 L472.6 13.3 M465.0 3.0 L474.4 11.2 M470.0 -2.8 L479.4 5.4 M471.3 -4.3 L480.7 3.9 M472.6 -5.8 L482.0 2.4 M473.9 -7.3 L483.4 0.9 M475.2 -8.8 L484.7 -0.6 M476.5 -10.3 L486.0 -2.1 M477.9 -11.8 L487.3 -3.6 M479.2 -13.4 L488.6 -5.2 M480.5 -14.9 L489.9 -6.7 M481.8 -16.4 L491.2 -8.2 M483.1 -17.9 L492.5 -9.7 M484.4 -19.4 L493.8 -11.2 M487.1 -22.5 L496.5 -14.3 M488.9 -24.6 L498.4 -16.4 M490.8 -26.7 L500.2 -18.5 M492.6 -28.8 L502.1 -20.6 M494.5 -30.9 L503.9 -22.7 M496.3 -33.1 L505.7 -24.9 M498.1 -35.2 L507.6 -27.0 M500.0 -37.3 L509.4 -29.1 M501.8 -39.4 L511.2 -31.2 M503.6 -41.5 L513.1 -33.3 M505.5 -43.6 L514.9 -35.4 M507.3 -45.7 L516.8 -37.5 M255.9 260.6 L265.4 268.8 M257.8 258.5 L267.2 266.7 M259.6 256.3 L269.0 264.5 M261.4 254.2 L270.9 262.4 M263.3 252.1 L272.7 260.3 M265.1 250.0 L274.5 258.2 M266.9 247.9 L276.4 256.1 M268.8 245.8 L278.2 254.0 M270.6 243.7 L280.0 251.9 M272.5 241.5 L281.9 249.7 M274.3 239.4 L283.7 247.6 M276.1 237.3 L285.6 245.5 M280.0 232.9 L289.4 241.1 M281.3 231.4 L290.7 239.6 M282.6 229.9 L292.0 238.1 M283.9 228.4 L293.3 236.6 M285.2 226.9 L294.7 235.1 M286.5 225.3 L296.0 233.5 M287.8 223.8 L297.3 232.0 M289.2 222.3 L298.6 230.5 M290.5 220.8 L299.9 229.0 M291.8 219.3 L301.2 227.5 M294.2 216.6 L303.6 224.8 M296.0 214.5 L305.4 222.7 M297.8 212.3 L307.3 220.5 M299.7 210.2 L309.1 218.4 M301.5 208.1 L310.9 216.3 M303.3 206.0 L312.8 214.2 M305.2 203.9 L314.6 212.1 M307.0 201.8 L316.5 210.0 M308.9 199.7 L318.3 207.9 M310.7 197.6 L320.1 205.8 M312.5 195.4 L322.0 203.6 M314.4 193.3 L323.8 201.5 M316.2 191.2 L325.6 199.4 M319.3 187.7 L328.7 195.9 M320.6 186.2 L330.0 194.4 M321.9 184.7 L331.3 192.9 M323.2 183.1 L332.6 191.3 M324.5 181.6 L334.0 189.8 M325.8 180.1 L335.3 188.3 M327.2 178.6 L336.6 186.8 M328.5 177.1 L337.9 185.3 M329.8 175.6 L339.2 183.8 M331.1 174.1 L340.5 182.3 M335.1 169.4 L344.6 177.6 M336.4 167.9 L345.9 176.1 M337.8 166.4 L347.2 174.6 M339.1 164.9 L348.5 173.1 M340.4 163.4 L349.8 171.6 M341.7 161.9 L351.1 170.1 M343.0 160.4 L352.4 168.6 M344.3 158.9 L353.8 167.1 M345.6 157.4 L355.1 165.6 M346.9 155.8 L356.4 164.0 M348.3 154.3 L357.7 162.5 M349.6 152.8 L359.0 161.0 M350.9 151.3 L360.3 159.5 M352.2 149.8 L361.6 158.0 M353.5 148.3 L362.9 156.5 M354.8 146.8 L364.3 155.0 M358.6 142.5 L368.0 150.7 M360.4 140.4 L369.9 148.6 M362.3 138.2 L371.7 146.4 M364.1 136.1 L373.5 144.3 M365.9 134.0 L375.4 142.2 M367.8 131.9 L377.2 140.1 M369.6 129.8 L379.0 138.0 M371.4 127.7 L380.9 135.9 M373.3 125.6 L382.7 133.8 M375.1 123.4 L384.5 131.6 M376.9 121.3 L386.4 129.5 M378.8 119.2 L388.2 127.4 M380.6 117.1 L390.1 125.3 M383.0 114.4 L392.4 122.6 M384.6 112.6 L394.0 120.8 M386.1 110.8 L395.6 119.0 M387.7 109.0 L397.1 117.2 M389.3 107.1 L398.7 115.3 M390.9 105.3 L400.3 113.5 M392.4 103.5 L401.9 111.7 M394.0 101.7 L403.4 109.9 M395.6 99.9 L405.0 108.1 M397.2 98.1 L406.6 106.3 M398.7 96.3 L408.2 104.5 M400.3 94.5 L409.7 102.7 M401.9 92.6 L411.3 100.9 M403.5 90.8 L412.9 99.0 M405.0 89.0 L414.5 97.2 M406.6 87.2 L416.0 95.4 M408.2 85.4 L417.6 93.6 M413.5 79.3 L422.9 87.5 M414.8 77.8 L424.2 86.0 M416.1 76.3 L425.5 84.5 M417.4 74.8 L426.9 83.0 M418.7 73.3 L428.2 81.5 M420.0 71.8 L429.5 80.0 M421.4 70.2 L430.8 78.4 M422.7 68.7 L432.1 76.9 M424.0 67.2 L433.4 75.4 M425.3 65.7 L434.7 73.9 M426.6 64.2 L436.0 72.4 M427.9 62.7 L437.4 70.9 M429.2 61.2 L438.7 69.4 M430.5 59.7 L440.0 67.9 M431.9 58.2 L441.3 66.4 M433.2 56.7 L442.6 64.9 M434.5 55.2 L443.9 63.4 M435.8 53.6 L445.2 61.8 M437.1 52.1 L446.5 60.3 M442.2 46.2 L451.7 54.4 M443.5 44.7 L453.0 52.9 M444.8 43.2 L454.3 51.4 M446.2 41.7 L455.6 49.9 M447.5 40.2 L456.9 48.4 M448.8 38.7 L458.2 46.9 M450.1 37.2 L459.5 45.4 M451.4 35.7 L460.8 43.9 M452.7 34.2 L462.2 42.4 M454.0 32.7 L463.5 40.9 M455.3 31.2 L464.8 39.4 M456.7 29.6 L466.1 37.8 M458.0 28.1 L467.4 36.3 M459.3 26.6 L468.7 34.8 M460.6 25.1 L470.0 33.3 M466.6 18.2 L476.1 26.4 M467.9 16.7 L477.4 24.9 M469.2 15.2 L478.7 23.4 M470.6 13.6 L480.0 21.8 M471.9 12.1 L481.3 20.3 M473.2 10.6 L482.6 18.8 M474.5 9.1 L483.9 17.3 M475.8 7.6 L485.2 15.8 M477.1 6.1 L486.6 14.3 M478.4 4.6 L487.9 12.8 M479.7 3.1 L489.2 11.3 M481.1 1.6 L490.5 9.8 M482.4 0.1 L491.8 8.3 M483.7 -1.5 L493.1 6.8 M485.0 -3.0 L494.4 5.2 M486.3 -4.5 L495.7 3.7 M487.6 -6.0 L497.1 2.2 M488.9 -7.5 L498.4 0.7 M494.4 -13.7 L503.8 -5.5 M496.2 -15.8 L505.6 -7.6 M498.0 -18.0 L507.5 -9.8 M499.9 -20.1 L509.3 -11.9 M501.7 -22.2 L511.1 -14.0 M503.5 -24.3 L513.0 -16.1 M258.3 279.9 L267.8 288.1 M259.7 278.4 L269.1 286.6 M261.0 276.9 L270.4 285.1 M262.3 275.3 L271.7 283.5 M263.6 273.8 L273.0 282.0 M264.9 272.3 L274.3 280.5 M266.2 270.8 L275.7 279.0 M267.5 269.3 L277.0 277.5 M268.8 267.8 L278.3 276.0 M270.2 266.3 L279.6 274.5 M271.5 264.8 L280.9 273.0 M272.8 263.3 L282.2 271.5 M288.2 245.5 L297.7 253.7 M289.8 243.7 L299.2 251.9 M291.4 241.9 L300.8 250.1 M293.0 240.1 L302.4 248.3 M294.5 238.3 L304.0 246.5 M296.1 236.4 L305.5 244.6 M297.7 234.6 L307.1 242.8 M299.3 232.8 L308.7 241.0 M300.8 231.0 L310.3 239.2 M302.4 229.2 L311.8 237.4 M305.0 226.2 L314.5 234.4 M306.6 224.4 L316.0 232.6 M308.2 222.5 L317.6 230.7 M309.8 220.7 L319.2 228.9 M311.3 218.9 L320.8 227.1 M312.9 217.1 L322.3 225.3 M314.5 215.3 L323.9 223.5 M316.1 213.5 L325.5 221.7 M317.6 211.7 L327.1 219.9 M319.8 209.2 L329.2 217.4 M321.4 207.4 L330.8 215.6 M323.0 205.6 L332.4 213.8 M324.5 203.7 L334.0 211.9 M326.1 201.9 L335.5 210.1 M327.7 200.1 L337.1 208.3 M329.2 198.3 L338.7 206.5 M330.8 196.5 L340.3 204.7 M332.4 194.7 L341.8 202.9 M334.0 192.9 L343.4 201.1 M335.5 191.1 L345.0 199.3 M337.1 189.3 L346.6 197.5 M338.7 187.4 L348.1 195.6 M341.9 183.8 L351.3 192.0 M343.5 182.0 L352.9 190.2 M345.0 180.1 L354.5 188.3 M346.6 178.3 L356.1 186.5 M348.2 176.5 L357.6 184.7 M349.8 174.7 L359.2 182.9 M351.3 172.9 L360.8 181.1 M352.9 171.1 L362.4 179.3 M354.5 169.3 L363.9 177.5 M356.1 167.5 L365.5 175.7 M357.6 165.7 L367.1 173.9 M360.8 162.0 L370.2 170.2 M362.6 159.9 L372.1 168.1 M364.5 157.8 L373.9 166.0 M366.3 155.7 L375.7 163.9 M368.1 153.6 L377.6 161.8 M370.0 151.5 L379.4 159.7 M371.8 149.4 L381.2 157.6 M373.6 147.2 L383.1 155.4 M375.5 145.1 L384.9 153.3 M392.0 126.1 L401.4 134.3 M393.6 124.3 L403.0 132.5 M395.1 122.5 L404.6 130.7 M396.7 120.7 L406.2 128.9 M398.3 118.9 L407.7 127.1 M399.9 117.1 L409.3 125.3 M401.4 115.3 L410.9 123.5 M403.0 113.4 L412.5 121.6 M404.6 111.6 L414.0 119.8 M406.2 109.8 L415.6 118.0 M407.7 108.0 L417.2 116.2 M409.3 106.2 L418.8 114.4 M410.9 104.4 L420.3 112.6 M412.5 102.6 L421.9 110.8 M453.3 55.6 L462.7 63.8 M455.1 53.5 L464.5 61.7 M456.9 51.4 L466.4 59.6 M458.8 49.3 L468.2 57.5 M460.6 47.2 L470.1 55.4 M462.5 45.1 L471.9 53.3 M464.3 43.0 L473.7 51.2 M466.1 40.8 L475.6 49.0 M468.0 38.7 L477.4 46.9 M469.8 36.6 L479.2 44.8 M474.2 31.5 L483.7 39.7 M476.1 29.4 L485.5 37.6 M477.9 27.3 L487.3 35.5 M479.7 25.2 L489.2 33.4 M481.6 23.1 L491.0 31.3 M483.4 21.0 L492.9 29.2 M485.3 18.8 L494.7 27.0 M487.1 16.7 L496.5 24.9 M491.9 11.2 L501.3 19.4 M493.7 9.1 L503.2 17.3 M495.6 7.0 L505.0 15.2 M497.4 4.9 L506.8 13.1 M499.2 2.7 L508.7 10.9 M501.1 0.6 L510.5 8.8 M502.9 -1.5 L512.4 6.7 M504.8 -3.6 L514.2 4.6 M506.6 -5.7 L516.0 2.5 M508.4 -7.8 L517.9 0.4 M510.3 -9.9 L519.7 -1.7 M512.1 -12.0 L521.5 -3.8 M252.0 302.9 L261.5 311.1 M253.3 301.4 L262.8 309.6 M254.6 299.9 L264.1 308.1 M256.0 298.4 L265.4 306.6 M257.3 296.9 L266.7 305.1 M258.6 295.4 L268.0 303.6 M259.9 293.8 L269.3 302.0 M261.2 292.3 L270.6 300.5 M262.5 290.8 L272.0 299.0 M263.8 289.3 L273.3 297.5 M265.1 287.8 L274.6 296.0 M266.5 286.3 L275.9 294.5 M267.8 284.8 L277.2 293.0 M269.1 283.3 L278.5 291.5 M270.4 281.8 L279.8 290.0 M271.7 280.3 L281.1 288.5 M273.0 278.8 L282.5 287.0 M274.3 277.2 L283.8 285.4 M275.6 275.7 L285.1 283.9 M299.3 248.6 L308.7 256.8 M300.8 246.7 L310.3 254.9 M302.4 244.9 L311.9 253.1 M304.0 243.1 L313.4 251.3 M305.6 241.3 L315.0 249.5 M307.1 239.5 L316.6 247.7 M308.7 237.7 L318.1 245.9 M310.3 235.9 L319.7 244.1 M311.9 234.1 L321.3 242.3 M313.4 232.3 L322.9 240.5 M315.0 230.4 L324.4 238.6 M316.6 228.6 L326.0 236.8 M318.2 226.8 L327.6 235.0 M322.5 221.9 L331.9 230.1 M323.8 220.4 L333.2 228.6 M325.1 218.8 L334.5 227.0 M326.4 217.3 L335.8 225.5 M327.7 215.8 L337.2 224.0 M329.0 214.3 L338.5 222.5 M330.3 212.8 L339.8 221.0 M331.7 211.3 L341.1 219.5 M333.0 209.8 L342.4 218.0 M334.3 208.3 L343.7 216.5 M335.6 206.8 L345.0 215.0 M336.9 205.3 L346.3 213.5 M342.1 199.2 L351.6 207.4 M344.0 197.1 L353.4 205.3 M345.8 195.0 L355.2 203.2 M347.6 192.9 L357.1 201.1 M349.5 190.8 L358.9 199.0 M354.3 185.3 L363.7 193.5 M355.8 183.5 L365.3 191.7 M357.4 181.7 L366.8 189.9 M359.0 179.9 L368.4 188.1 M360.6 178.1 L370.0 186.3 M362.1 176.2 L371.6 184.4 M363.7 174.4 L373.1 182.6 M365.3 172.6 L374.7 180.8 M366.9 170.8 L376.3 179.0 M368.4 169.0 L377.9 177.2 M370.0 167.2 L379.4 175.4 M371.6 165.4 L381.0 173.6 M373.2 163.6 L382.6 171.8 M374.7 161.8 L384.2 170.0 M377.8 158.3 L387.2 166.5 M379.3 156.5 L388.8 164.7 M380.9 154.6 L390.3 162.8 M382.5 152.8 L391.9 161.0 M384.1 151.0 L393.5 159.2 M388.7 145.7 L398.1 153.9 M390.2 143.9 L399.7 152.1 M391.8 142.1 L401.2 150.3 M393.4 140.3 L402.8 148.5 M395.0 138.5 L404.4 146.7 M396.5 136.7 L406.0 144.9 M398.1 134.9 L407.5 143.1 M399.7 133.0 L409.1 141.2 M404.8 127.1 L414.3 135.3 M406.2 125.6 L415.6 133.8 M407.5 124.1 L416.9 132.3 M408.8 122.6 L418.2 130.8 M410.1 121.1 L419.5 129.3 M411.4 119.6 L420.8 127.8 M412.7 118.0 L422.2 126.2 M414.0 116.5 L423.5 124.7 M415.3 115.0 L424.8 123.2 M416.7 113.5 L426.1 121.7 M418.0 112.0 L427.4 120.2 M419.3 110.5 L428.7 118.7 M420.6 109.0 L430.0 117.2 M421.9 107.5 L431.3 115.7 M423.2 106.0 L432.7 114.2 M424.5 104.5 L434.0 112.7 M425.8 103.0 L435.3 111.2 M427.2 101.4 L436.6 109.6 M428.5 99.9 L437.9 108.1 M429.8 98.4 L439.2 106.6 M432.7 95.1 L442.1 103.3 M434.3 93.2 L443.7 101.4 M435.9 91.4 L445.3 99.6 M437.4 89.6 L446.9 97.8 M439.0 87.8 L448.4 96.0 M440.6 86.0 L450.0 94.2 M442.2 84.2 L451.6 92.4 M443.7 82.4 L453.2 90.6 M445.3 80.6 L454.7 88.8 M446.9 78.7 L456.3 86.9 M448.5 76.9 L457.9 85.1 M450.0 75.1 L459.5 83.3 M451.6 73.3 L461.0 81.5 M453.2 71.5 L462.6 79.7 M454.8 69.7 L464.2 77.9 M459.6 64.1 L469.0 72.3 M461.4 62.0 L470.8 70.2 M463.2 59.9 L472.7 68.1 M465.1 57.8 L474.5 66.0 M466.9 55.7 L476.4 63.9 M468.8 53.6 L478.2 61.8 M470.6 51.5 L480.0 59.7 M472.4 49.4 L481.9 57.6 M474.3 47.2 L483.7 55.4 M476.1 45.1 L485.5 53.3 M477.9 43.0 L487.4 51.2 M481.3 39.2 L490.7 47.4 M483.1 37.0 L492.6 45.2 M485.0 34.9 L494.4 43.1 M486.8 32.8 L496.2 41.0 M488.6 30.7 L498.1 38.9 M490.5 28.6 L499.9 36.8 M492.3 26.5 L501.8 34.7 M494.2 24.4 L503.6 32.6 M496.0 22.2 L505.4 30.4 M497.8 20.1 L507.3 28.3 M499.7 18.0 L509.1 26.2 M501.5 15.9 L510.9 24.1 M505.8 10.9 L515.3 19.1 M507.7 8.8 L517.1 17.0 M509.5 6.7 L518.9 14.9 M511.4 4.6 L520.8 12.8 M513.2 2.5 L522.6 10.7 M515.0 0.4 L524.5 8.6 M516.9 -1.8 L526.3 6.4 M518.7 -3.9 L528.1 4.3 M520.5 -6.0 L530.0 2.2 M522.4 -8.1 L531.8 0.1 M524.2 -10.2 L533.6 -2.0 M526.0 -12.3 L535.5 -4.1 M527.9 -14.4 L537.3 -6.2 M263.0 312.4 L272.4 320.6 M264.3 310.9 L273.7 319.1 M265.6 309.4 L275.1 317.6 M266.9 307.9 L276.4 316.1 M268.2 306.4 L277.7 314.6 M269.6 304.9 L279.0 313.1 M270.9 303.4 L280.3 311.6 M272.2 301.9 L281.6 310.1 M273.5 300.4 L282.9 308.6 M274.8 298.9 L284.2 307.1 M276.1 297.4 L285.6 305.6 M277.4 295.8 L286.9 304.0 M278.7 294.3 L288.2 302.5 M280.1 292.8 L289.5 301.0 M281.4 291.3 L290.8 299.5 M282.7 289.8 L292.1 298.0 M284.0 288.3 L293.4 296.5 M288.8 282.7 L298.3 290.9 M290.4 280.9 L299.8 289.1 M292.0 279.1 L301.4 287.3 M293.5 277.3 L303.0 285.5 M295.1 275.5 L304.6 283.7 M296.7 273.7 L306.1 281.9 M298.3 271.9 L307.7 280.1 M328.2 237.4 L337.6 245.6 M330.0 235.3 L339.5 243.5 M331.9 233.2 L341.3 241.4 M333.7 231.1 L343.1 239.3 M335.6 229.0 L345.0 237.2 M337.4 226.9 L346.8 235.1 M339.2 224.8 L348.7 233.0 M341.1 222.6 L350.5 230.8 M344.8 218.3 L354.3 226.5 M346.7 216.2 L356.1 224.4 M348.5 214.1 L357.9 222.3 M350.3 212.0 L359.8 220.2 M352.2 209.8 L361.6 218.0 M354.0 207.7 L363.5 215.9 M355.9 205.6 L365.3 213.8 M357.7 203.5 L367.1 211.7 M359.5 201.4 L369.0 209.6 M363.7 196.6 L373.1 204.8 M365.5 194.5 L375.0 202.7 M367.4 192.4 L376.8 200.6 M369.2 190.3 L378.6 198.5 M371.0 188.2 L380.5 196.4 M372.9 186.1 L382.3 194.3 M374.7 183.9 L384.1 192.1 M376.5 181.8 L386.0 190.0 M378.4 179.7 L387.8 187.9 M380.2 177.6 L389.7 185.8 M382.1 175.5 L391.5 183.7 M383.9 173.4 L393.3 181.6 M385.7 171.3 L395.2 179.5 M389.2 167.2 L398.7 175.4 M391.1 165.1 L400.5 173.3 M392.9 163.0 L402.3 171.2 M394.7 160.9 L404.2 169.1 M396.6 158.8 L406.0 167.0 M398.4 156.7 L407.9 164.9 M400.3 154.5 L409.7 162.7 M402.1 152.4 L411.5 160.6 M403.9 150.3 L413.4 158.5 M405.8 148.2 L415.2 156.4 M407.6 146.1 L417.0 154.3 M410.5 142.8 L419.9 151.0 M411.8 141.2 L421.3 149.4 M413.1 139.7 L422.6 147.9 M414.4 138.2 L423.9 146.4 M415.8 136.7 L425.2 144.9 M417.1 135.2 L426.5 143.4 M418.4 133.7 L427.8 141.9 M419.7 132.2 L429.1 140.4 M422.5 128.9 L432.0 137.1 M424.4 126.8 L433.8 135.0 M426.2 124.7 L435.7 132.9 M428.1 122.6 L437.5 130.8 M429.9 120.5 L439.3 128.7 M431.7 118.3 L441.2 126.5 M433.6 116.2 L443.0 124.4 M435.4 114.1 L444.8 122.3 M437.2 112.0 L446.7 120.2 M439.1 109.9 L448.5 118.1 M444.5 103.7 L453.9 111.9 M446.1 101.9 L455.5 110.1 M447.6 100.0 L457.1 108.2 M449.2 98.2 L458.6 106.4 M450.8 96.4 L460.2 104.6 M452.4 94.6 L461.8 102.8 M453.9 92.8 L463.4 101.0 M455.5 91.0 L464.9 99.2 M457.1 89.2 L466.5 97.4 M458.7 87.4 L468.1 95.6 M460.2 85.6 L469.7 93.8 M461.8 83.7 L471.2 91.9 M463.4 81.9 L472.8 90.1 M465.0 80.1 L474.4 88.3 M466.5 78.3 L476.0 86.5 M468.1 76.5 L477.5 84.7 M469.7 74.7 L479.1 82.9 M474.8 68.8 L484.2 77.0 M476.1 67.3 L485.5 75.5 M477.4 65.8 L486.8 74.0 M478.7 64.3 L488.1 72.5 M480.0 62.8 L489.5 71.0 M481.3 61.3 L490.8 69.5 M482.6 59.8 L492.1 68.0 M484.0 58.3 L493.4 66.5 M485.3 56.8 L494.7 65.0 M486.6 55.2 L496.0 63.4 M487.9 53.7 L497.3 61.9 M489.2 52.2 L498.6 60.4 M490.5 50.7 L499.9 58.9 M491.8 49.2 L501.3 57.4 M493.1 47.7 L502.6 55.9 M494.5 46.2 L503.9 54.4 M495.8 44.7 L505.2 52.9 M497.1 43.2 L506.5 51.4 M498.4 41.7 L507.8 49.9 M502.7 36.8 L512.1 45.0 M504.0 35.2 L513.4 43.4 M505.3 33.7 L514.7 41.9 M506.6 32.2 L516.0 40.4 M507.9 30.7 L517.3 38.9 M509.2 29.2 L518.6 37.4 M513.5 24.3 L522.9 32.5 M515.1 22.4 L524.5 30.7 M516.7 20.6 L526.1 28.8 M518.2 18.8 L527.7 27.0 M519.8 17.0 L529.2 25.2 M521.4 15.2 L530.8 23.4 M523.0 13.4 L532.4 21.6 M524.5 11.6 L534.0 19.8 M526.1 9.8 L535.5 18.0 M527.7 8.0 L537.1 16.2 M529.3 6.1 L538.7 14.3 M272.5 320.7 L281.9 328.9 M274.3 318.6 L283.7 326.8 M276.1 316.4 L285.6 324.6 M278.0 314.3 L287.4 322.5 M279.8 312.2 L289.2 320.4 M281.6 310.1 L291.1 318.3 M283.5 308.0 L292.9 316.2 M285.3 305.9 L294.8 314.1 M287.2 303.8 L296.6 312.0 M289.0 301.6 L298.4 309.8 M290.8 299.5 L300.3 307.7 M292.7 297.4 L302.1 305.6 M297.1 292.4 L306.5 300.6 M298.6 290.6 L308.1 298.8 M300.2 288.7 L309.6 297.0 M301.8 286.9 L311.2 295.1 M303.4 285.1 L312.8 293.3 M309.5 278.0 L319.0 286.2 M310.8 276.5 L320.3 284.7 M312.1 275.0 L321.6 283.2 M313.5 273.5 L322.9 281.7 M314.8 272.0 L324.2 280.2 M316.1 270.5 L325.5 278.7 M317.4 269.0 L326.8 277.2 M318.7 267.5 L328.1 275.7 M320.0 266.0 L329.5 274.2 M323.2 262.3 L332.6 270.5 M324.5 260.8 L333.9 269.0 M325.8 259.3 L335.2 267.5 M327.1 257.8 L336.5 266.0 M328.4 256.3 L337.8 264.5 M329.7 254.8 L339.1 263.0 M331.0 253.3 L340.5 261.5 M332.3 251.8 L341.8 260.0 M333.7 250.3 L343.1 258.5 M335.0 248.8 L344.4 257.0 M336.3 247.3 L345.7 255.5 M337.6 245.7 L347.0 253.9 M338.9 244.2 L348.3 252.4 M340.2 242.7 L349.6 250.9 M341.5 241.2 L351.0 249.4 M342.8 239.7 L352.3 247.9 M344.1 238.2 L353.6 246.4 M349.0 232.6 L358.5 240.8 M350.9 230.5 L360.3 238.7 M352.7 228.4 L362.1 236.6 M354.5 226.3 L364.0 234.5 M356.4 224.1 L365.8 232.3 M358.2 222.0 L367.6 230.2 M360.0 219.9 L369.5 228.1 M361.9 217.8 L371.3 226.0 M365.6 213.6 L375.0 221.8 M367.4 211.4 L376.8 219.6 M369.2 209.3 L378.7 217.5 M371.1 207.2 L380.5 215.4 M372.9 205.1 L382.3 213.3 M374.7 203.0 L384.2 211.2 M376.6 200.9 L386.0 209.1 M378.4 198.8 L387.9 207.0 M380.3 196.7 L389.7 204.9 M386.6 189.4 L396.0 197.6 M387.9 187.9 L397.3 196.1 M389.2 186.4 L398.6 194.6 M390.5 184.9 L399.9 193.1 M391.8 183.4 L401.3 191.6 M393.1 181.8 L402.6 190.0 M394.4 180.3 L403.9 188.5 M395.8 178.8 L405.2 187.0 M397.1 177.3 L406.5 185.5 M400.4 173.5 L409.8 181.7 M401.7 172.0 L411.1 180.2 M403.0 170.5 L412.4 178.7 M404.3 169.0 L413.7 177.2 M405.6 167.5 L415.1 175.7 M406.9 166.0 L416.4 174.2 M408.2 164.5 L417.7 172.7 M409.6 162.9 L419.0 171.1 M410.9 161.4 L420.3 169.6 M412.2 159.9 L421.6 168.1 M413.5 158.4 L422.9 166.6 M414.8 156.9 L424.2 165.1 M416.1 155.4 L425.6 163.6 M417.4 153.9 L426.9 162.1 M418.7 152.4 L428.2 160.6 M420.1 150.9 L429.5 159.1 M421.4 149.4 L430.8 157.6 M424.9 145.3 L434.4 153.5 M426.5 143.4 L436.0 151.6 M428.1 141.6 L437.5 149.8 M429.7 139.8 L439.1 148.0 M431.2 138.0 L440.7 146.2 M435.3 133.3 L444.7 141.5 M436.6 131.8 L446.1 140.0 M437.9 130.3 L447.4 138.5 M439.2 128.8 L448.7 137.0 M440.6 127.3 L450.0 135.5 M441.9 125.8 L451.3 134.0 M443.2 124.3 L452.6 132.5 M444.5 122.8 L453.9 131.0 M445.8 121.3 L455.2 129.5 M447.1 119.7 L456.6 127.9 M448.4 118.2 L457.9 126.4 M453.5 112.4 L462.9 120.6 M455.0 110.6 L464.5 118.8 M456.6 108.8 L466.0 117.0 M458.2 107.0 L467.6 115.2 M459.8 105.2 L469.2 113.4 M461.3 103.4 L470.8 111.6 M462.9 101.6 L472.3 109.8 M464.5 99.8 L473.9 108.0 M468.5 95.1 L478.0 103.3 M470.4 93.0 L479.8 101.2 M472.2 90.9 L481.6 99.1 M474.0 88.8 L483.5 97.0 M475.9 86.7 L485.3 94.9 M477.7 84.5 L487.1 92.7 M481.1 80.6 L490.6 88.8 M482.4 79.1 L491.9 87.3 M483.7 77.6 L493.2 85.8 M485.1 76.1 L494.5 84.3 M486.4 74.6 L495.8 82.8 M487.7 73.1 L497.1 81.3 M489.0 71.6 L498.4 79.8 M490.3 70.1 L499.7 78.3 M494.7 65.0 L504.1 73.2 M496.0 63.5 L505.5 71.7 M497.3 62.0 L506.8 70.2 M498.6 60.5 L508.1 68.7 M500.0 59.0 L509.4 67.2 M501.3 57.5 L510.7 65.7 M502.6 55.9 L512.0 64.1 M503.9 54.4 L513.3 62.6 M505.2 52.9 L514.6 61.1 M506.5 51.4 L515.9 59.6 M507.8 49.9 L517.3 58.1 M509.1 48.4 L518.6 56.6 M512.9 44.1 L522.3 52.3 M514.7 42.0 L524.1 50.2 M516.6 39.9 L526.0 48.1 M518.4 37.8 L527.8 46.0 M520.2 35.6 L529.7 43.8 M522.1 33.5 L531.5 41.7 M523.9 31.4 L533.3 39.6 M527.2 27.6 L536.6 35.8 M528.5 26.1 L538.0 34.3 M529.8 24.6 L539.3 32.8 M531.1 23.1 L540.6 31.3 M532.5 21.6 L541.9 29.8 M533.8 20.1 L543.2 28.3 M535.1 18.6 L544.5 26.8 M536.4 17.0 L545.8 25.2 M537.7 15.5 L547.1 23.7 M539.0 14.0 L548.5 22.2 M540.3 12.5 L549.8 20.7 M541.6 11.0 L551.1 19.2 M281.9 328.9 L291.4 337.1 M283.2 327.4 L292.7 335.6 M284.5 325.9 L294.0 334.1 M285.9 324.4 L295.3 332.6 M287.2 322.9 L296.6 331.1 M288.5 321.3 L297.9 329.5 M289.8 319.8 L299.2 328.0 M291.1 318.3 L300.5 326.5 M292.4 316.8 L301.9 325.0 M295.2 313.6 L304.6 321.8 M296.5 312.1 L305.9 320.3 M297.8 310.6 L307.3 318.8 M299.1 309.1 L308.6 317.3 M300.4 307.6 L309.9 315.8 M301.8 306.1 L311.2 314.3 M303.1 304.6 L312.5 312.8 M304.4 303.1 L313.8 311.3 M305.7 301.5 L315.1 309.7 M307.0 300.0 L316.4 308.2 M308.3 298.5 L317.8 306.7 M309.6 297.0 L319.1 305.2 M310.9 295.5 L320.4 303.7 M312.3 294.0 L321.7 302.2 M313.6 292.5 L323.0 300.7 M317.7 287.8 L327.1 296.0 M319.2 286.0 L328.7 294.2 M320.8 284.2 L330.2 292.4 M322.4 282.3 L331.8 290.5 M324.0 280.5 L333.4 288.7 M325.5 278.7 L335.0 286.9 M327.1 276.9 L336.5 285.1 M328.7 275.1 L338.1 283.3 M330.3 273.3 L339.7 281.5 M331.8 271.5 L341.3 279.7 M333.4 269.7 L342.8 277.9 M335.0 267.9 L344.4 276.1 M336.6 266.0 L346.0 274.2 M338.1 264.2 L347.6 272.4 M339.7 262.4 L349.1 270.6 M344.5 256.9 L354.0 265.1 M346.4 254.8 L355.8 263.0 M348.2 252.6 L357.6 260.8 M350.0 250.5 L359.5 258.7 M351.9 248.4 L361.3 256.6 M353.7 246.3 L363.1 254.5 M355.6 244.2 L365.0 252.4 M357.4 242.1 L366.8 250.3 M359.2 240.0 L368.7 248.2 M361.1 237.8 L370.5 246.0 M362.9 235.7 L372.3 243.9 M364.7 233.6 L374.2 241.8 M366.6 231.5 L376.0 239.7 M368.4 229.4 L377.8 237.6 M372.4 224.8 L381.8 233.0 M374.0 223.0 L383.4 231.2 M375.5 221.2 L385.0 229.4 M377.1 219.4 L386.5 227.6 M378.7 217.6 L388.1 225.8 M380.3 215.8 L389.7 224.0 M381.8 214.0 L391.3 222.2 M383.4 212.2 L392.8 220.4 M385.0 210.3 L394.4 218.5 M386.5 208.5 L396.0 216.7 M388.1 206.7 L397.6 214.9 M389.7 204.9 L399.1 213.1 M391.3 203.1 L400.7 211.3 M392.8 201.3 L402.3 209.5 M394.4 199.5 L403.9 207.7 M397.5 195.9 L407.0 204.1 M398.8 194.4 L408.3 202.6 M400.2 192.9 L409.6 201.1 M401.5 191.4 L410.9 199.6 M402.8 189.9 L412.2 198.1 M404.1 188.3 L413.5 196.6 M408.9 182.9 L418.3 191.1 M410.2 181.4 L419.6 189.6 M411.5 179.9 L420.9 188.1 M412.8 178.3 L422.2 186.5 M414.1 176.8 L423.5 185.0 M415.4 175.3 L424.8 183.5 M416.9 173.6 L426.3 181.8 M418.2 172.1 L427.6 180.3 M419.5 170.6 L428.9 178.8 M420.8 169.1 L430.2 177.3 M422.1 167.6 L431.6 175.8 M423.4 166.1 L432.9 174.3 M424.7 164.6 L434.2 172.8 M426.1 163.1 L435.5 171.3 M427.4 161.6 L436.8 169.8 M428.7 160.1 L438.1 168.3 M430.0 158.6 L439.4 166.8 M431.3 157.0 L440.7 165.2 M432.6 155.5 L442.1 163.7 M437.2 150.2 L446.7 158.4 M438.8 148.4 L448.2 156.6 M440.4 146.6 L449.8 154.8 M441.9 144.8 L451.4 153.0 M443.5 143.0 L453.0 151.2 M445.1 141.2 L454.5 149.4 M446.7 139.4 L456.1 147.6 M448.2 137.6 L457.7 145.8 M449.8 135.7 L459.3 143.9 M451.4 133.9 L460.8 142.1 M453.0 132.1 L462.4 140.3 M454.5 130.3 L464.0 138.5 M456.1 128.5 L465.5 136.7 M457.7 126.7 L467.1 134.9 M459.3 124.9 L468.7 133.1 M460.8 123.1 L470.3 131.3 M464.2 119.3 L473.6 127.5 M466.0 117.1 L475.4 125.3 M467.8 115.0 L477.3 123.2 M469.7 112.9 L479.1 121.1 M471.5 110.8 L480.9 119.0 M473.3 108.7 L482.8 116.9 M475.2 106.6 L484.6 114.8 M477.0 104.5 L486.4 112.7 M478.8 102.4 L488.3 110.6 M481.6 99.2 L491.0 107.4 M483.2 97.4 L492.6 105.6 M484.7 95.6 L494.2 103.8 M486.3 93.8 L495.7 102.0 M487.9 92.0 L497.3 100.2 M489.5 90.2 L498.9 98.4 M491.0 88.3 L500.5 96.5 M492.6 86.5 L502.0 94.7 M495.8 82.9 L505.2 91.1 M497.1 81.3 L506.5 89.5 M498.4 79.8 L507.9 88.0 M499.7 78.3 L509.2 86.5 M501.0 76.8 L510.5 85.0 M502.4 75.3 L511.8 83.5 M503.7 73.8 L513.1 82.0 M505.0 72.3 L514.4 80.5 M506.3 70.8 L515.7 79.0 M507.6 69.3 L517.0 77.5 M511.4 64.9 L520.9 73.1 M513.0 63.0 L522.4 71.2 M514.6 61.2 L524.0 69.4 M516.2 59.4 L525.6 67.6 M517.7 57.6 L527.2 65.8 M519.3 55.8 L528.7 64.0 M520.9 54.0 L530.3 62.2 M522.5 52.2 L531.9 60.4 M524.0 50.4 L533.5 58.6 M525.6 48.6 L535.0 56.8 M527.2 46.7 L536.6 54.9 M528.8 44.9 L538.2 53.1 M530.8 42.6 L540.2 50.8 M532.6 40.5 L542.0 48.7 M534.4 38.4 L543.9 46.6 M536.3 36.3 L545.7 44.5 M538.1 34.2 L547.6 42.4 M540.0 32.1 L549.4 40.3 M541.8 29.9 L551.2 38.1 M543.6 27.8 L553.1 36.0 M545.5 25.7 L554.9 33.9 M547.3 23.6 L556.7 31.8 M549.1 21.5 L558.6 29.7 M551.0 19.4 L560.4 27.6 M289.8 335.7 L299.2 343.9 M291.3 333.9 L300.8 342.1 M292.9 332.1 L302.4 340.3 M294.5 330.3 L303.9 338.5 M296.1 328.5 L305.5 336.7 M297.6 326.7 L307.1 334.9 M299.2 324.8 L308.7 333.1 M300.8 323.0 L310.2 331.2 M302.4 321.2 L311.8 329.4 M303.9 319.4 L313.4 327.6 M305.5 317.6 L315.0 325.8 M307.1 315.8 L316.5 324.0 M308.7 314.0 L318.1 322.2 M310.2 312.2 L319.7 320.4 M311.8 310.4 L321.2 318.6 M316.5 305.0 L325.9 313.2 M317.8 303.5 L327.2 311.7 M319.1 302.0 L328.5 310.2 M320.4 300.5 L329.9 308.7 M321.7 298.9 L331.2 307.1 M323.1 297.4 L332.5 305.6 M324.4 295.9 L333.8 304.1 M325.7 294.4 L335.1 302.6 M327.0 292.9 L336.4 301.1 M328.3 291.4 L337.7 299.6 M329.6 289.9 L339.0 298.1 M330.9 288.4 L340.4 296.6 M332.2 286.9 L341.7 295.1 M361.2 253.5 L370.7 261.7 M362.6 252.0 L372.0 260.2 M363.9 250.5 L373.3 258.7 M365.2 249.0 L374.6 257.2 M366.5 247.5 L375.9 255.7 M367.8 245.9 L377.2 254.1 M369.1 244.4 L378.6 252.6 M370.4 242.9 L379.9 251.1 M371.7 241.4 L381.2 249.6 M373.1 239.9 L382.5 248.1 M374.4 238.4 L383.8 246.6 M375.7 236.9 L385.1 245.1 M377.0 235.4 L386.4 243.6 M378.3 233.9 L387.7 242.1 M379.6 232.4 L389.1 240.6 M380.9 230.8 L390.4 239.0 M382.2 229.3 L391.7 237.5 M383.6 227.8 L393.0 236.0 M384.9 226.3 L394.3 234.5 M386.2 224.8 L395.6 233.0 M390.6 219.7 L400.0 227.9 M392.4 217.6 L401.9 225.8 M394.3 215.5 L403.7 223.7 M396.1 213.4 L405.6 221.6 M401.6 207.1 L411.0 215.3 M403.4 205.0 L412.9 213.2 M405.3 202.8 L414.7 211.0 M407.1 200.7 L416.5 208.9 M408.9 198.6 L418.4 206.8 M411.6 195.6 L421.0 203.8 M413.2 193.8 L422.6 202.0 M414.8 191.9 L424.2 200.1 M416.3 190.1 L425.8 198.3 M417.9 188.3 L427.3 196.5 M419.5 186.5 L428.9 194.7 M421.1 184.7 L430.5 192.9 M422.6 182.9 L432.1 191.1 M424.2 181.1 L433.6 189.3 M425.8 179.3 L435.2 187.5 M427.3 177.5 L436.8 185.7 M428.9 175.6 L438.4 183.8 M435.1 168.6 L444.5 176.8 M436.6 166.8 L446.1 175.0 M438.2 165.0 L447.6 173.2 M439.8 163.2 L449.2 171.4 M441.4 161.3 L450.8 169.5 M442.9 159.5 L452.4 167.7 M444.5 157.7 L453.9 165.9 M446.1 155.9 L455.5 164.1 M447.7 154.1 L457.1 162.3 M449.2 152.3 L458.7 160.5 M450.8 150.5 L460.2 158.7 M452.4 148.7 L461.8 156.9 M454.0 146.9 L463.4 155.1 M455.5 145.0 L465.0 153.2 M457.4 142.9 L466.8 151.1 M458.7 141.4 L468.1 149.6 M460.0 139.9 L469.4 148.1 M461.3 138.4 L470.7 146.6 M462.6 136.9 L472.0 145.1 M463.9 135.4 L473.4 143.6 M465.2 133.9 L474.7 142.1 M466.5 132.4 L476.0 140.6 M470.4 127.9 L479.8 136.1 M472.2 125.8 L481.7 134.0 M474.1 123.7 L483.5 131.9 M475.9 121.6 L485.3 129.8 M477.7 119.5 L487.2 127.7 M479.6 117.4 L489.0 125.6 M481.4 115.2 L490.9 123.5 M521.5 69.2 L530.9 77.4 M523.3 67.1 L532.7 75.3 M525.1 65.0 L534.6 73.2 M527.0 62.9 L536.4 71.1 M528.8 60.7 L538.2 68.9 M530.6 58.6 L540.1 66.8 M532.5 56.5 L541.9 64.7 M300.8 345.3 L310.2 353.5 M302.6 343.2 L312.1 351.4 M304.5 341.1 L313.9 349.3 M306.3 339.0 L315.7 347.2 M308.1 336.8 L317.6 345.0 M310.0 334.7 L319.4 342.9 M311.8 332.6 L321.2 340.8 M313.6 330.5 L323.1 338.7 M315.5 328.4 L324.9 336.6 M317.3 326.3 L326.8 334.5 M319.2 324.2 L328.6 332.4 M321.0 322.0 L330.4 330.2 M324.4 318.2 L333.8 326.4 M325.7 316.7 L335.1 324.9 M327.0 315.2 L336.4 323.4 M328.3 313.6 L337.7 321.8 M329.6 312.1 L339.0 320.3 M330.9 310.6 L340.4 318.8 M332.2 309.1 L341.7 317.3 M333.6 307.6 L343.0 315.8 M334.9 306.1 L344.3 314.3 M336.2 304.6 L345.6 312.8 M337.5 303.1 L346.9 311.3 M338.8 301.6 L348.2 309.8 M340.1 300.1 L349.5 308.3 M341.4 298.5 L350.9 306.7 M342.7 297.0 L352.2 305.2 M344.0 295.5 L353.5 303.7 M345.4 294.0 L354.8 302.2 M346.7 292.5 L356.1 300.7 M362.7 274.0 L372.2 282.2 M364.6 271.9 L374.0 280.1 M366.4 269.8 L375.8 278.0 M368.3 267.7 L377.7 275.9 M370.1 265.6 L379.5 273.8 M375.2 259.7 L384.6 267.9 M377.0 257.6 L386.5 265.8 M378.9 255.5 L388.3 263.7 M380.7 253.4 L390.1 261.6 M382.5 251.3 L392.0 259.5 M384.4 249.1 L393.8 257.3 M386.2 247.0 L395.6 255.2 M388.0 244.9 L397.5 253.1 M389.9 242.8 L399.3 251.0 M391.7 240.7 L401.1 248.9 M393.6 238.6 L403.0 246.8 M397.0 234.6 L406.5 242.8 M398.4 233.0 L407.8 241.3 M399.7 231.5 L409.1 239.7 M401.0 230.0 L410.4 238.2 M402.3 228.5 L411.7 236.7 M403.6 227.0 L413.0 235.2 M404.9 225.5 L414.4 233.7 M406.2 224.0 L415.7 232.2 M407.5 222.5 L417.0 230.7 M408.9 221.0 L418.3 229.2 M410.2 219.5 L419.6 227.7 M411.5 218.0 L420.9 226.2 M412.8 216.4 L422.2 224.6 M414.1 214.9 L423.5 223.1 M415.4 213.4 L424.9 221.6 M417.9 210.5 L427.4 218.7 M419.5 208.7 L428.9 216.9 M421.1 206.9 L430.5 215.1 M422.7 205.1 L432.1 213.3 M424.2 203.3 L433.7 211.5 M425.8 201.5 L435.2 209.7 M427.4 199.7 L436.8 207.9 M429.0 197.8 L438.4 206.0 M430.5 196.0 L440.0 204.2 M432.1 194.2 L441.5 202.4 M433.7 192.4 L443.1 200.6 M435.3 190.6 L444.7 198.8 M436.8 188.8 L446.3 197.0 M438.4 187.0 L447.8 195.2 M440.0 185.2 L449.4 193.4 M441.6 183.4 L451.0 191.6 M445.2 179.1 L454.7 187.3 M447.1 177.0 L456.5 185.2 M448.9 174.9 L458.3 183.1 M450.7 172.8 L460.2 181.0 M452.6 170.7 L462.0 178.9 M454.4 168.6 L463.8 176.8 M456.2 166.5 L465.7 174.7 M458.1 164.3 L467.5 172.5 M459.9 162.2 L469.4 170.4 M461.8 160.1 L471.2 168.3 M466.2 155.0 L475.7 163.2 M467.6 153.5 L477.0 161.7 M468.9 151.9 L478.3 160.1 M470.2 150.4 L479.6 158.6 M471.5 148.9 L480.9 157.1 M472.8 147.4 L482.2 155.6 M474.1 145.9 L483.5 154.1 M475.4 144.4 L484.9 152.6 M476.7 142.9 L486.2 151.1 M478.0 141.4 L487.5 149.6 M479.4 139.9 L488.8 148.1 M484.5 134.0 L493.9 142.2 M486.3 131.9 L495.7 140.1 M488.1 129.8 L497.6 138.0 M490.0 127.7 L499.4 135.9 M491.8 125.5 L501.3 133.7 M493.7 123.4 L503.1 131.6 M495.5 121.3 L504.9 129.5 M497.3 119.2 L506.8 127.4 M499.2 117.1 L508.6 125.3 M501.0 115.0 L510.4 123.2 M502.8 112.9 L512.3 121.1 M506.1 109.1 L515.5 117.3 M507.4 107.6 L516.9 115.8 M508.7 106.1 L518.2 114.3 M510.1 104.6 L519.5 112.8 M511.4 103.1 L520.8 111.3 M512.7 101.5 L522.1 109.7 M514.0 100.0 L523.4 108.2 M515.3 98.5 L524.7 106.7 M516.6 97.0 L526.0 105.2 M517.9 95.5 L527.4 103.7 M519.2 94.0 L528.7 102.2 M520.5 92.5 L530.0 100.7 M521.9 91.0 L531.3 99.2 M525.5 86.8 L535.0 95.0 M526.8 85.3 L536.3 93.5 M528.1 83.8 L537.6 92.0 M529.5 82.2 L538.9 90.4 M530.8 80.7 L540.2 88.9 M532.1 79.2 L541.5 87.4 M533.4 77.7 L542.8 85.9 M534.7 76.2 L544.1 84.4 M536.0 74.7 L545.4 82.9 M537.3 73.2 L546.8 81.4 M538.6 71.7 L548.1 79.9 M540.0 70.2 L549.4 78.4 M543.1 66.5 L552.6 74.7 M544.5 65.0 L553.9 73.2 M545.8 63.5 L555.2 71.7 M547.1 62.0 L556.5 70.2 M548.4 60.5 L557.8 68.7 M549.7 59.0 L559.1 67.2 M551.0 57.4 L560.4 65.6 M552.3 55.9 L561.8 64.1 M553.6 54.4 L563.1 62.6 M555.0 52.9 L564.4 61.1 M556.3 51.4 L565.7 59.6 M557.6 49.9 L567.0 58.1 M558.9 48.4 L568.3 56.6 M560.2 46.9 L569.6 55.1 M561.5 45.4 L570.9 53.6 M562.8 43.9 L572.3 52.1 M564.1 42.3 L573.6 50.5 M352.2 305.7 L361.6 313.9 M353.7 303.9 L363.2 312.1 M355.3 302.1 L364.7 310.3 M356.9 300.3 L366.3 308.5 M358.5 298.5 L367.9 306.7 M360.0 296.7 L369.5 304.9 M361.6 294.9 L371.0 303.1 M363.2 293.1 L372.6 301.3 M364.8 291.2 L374.2 299.4 M366.3 289.4 L375.8 297.6 M367.9 287.6 L377.3 295.8 M369.5 285.8 L378.9 294.0 M371.0 284.0 L380.5 292.2 M372.6 282.2 L382.1 290.4 M374.2 280.4 L383.6 288.6 M375.8 278.6 L385.2 286.8 M377.3 276.7 L386.8 284.9 M380.6 273.0 L390.0 281.2 M381.9 271.5 L391.3 279.7 M383.2 270.0 L392.6 278.2 M384.5 268.5 L393.9 276.7 M385.8 267.0 L395.2 275.2 M387.1 265.5 L396.6 273.7 M388.4 264.0 L397.9 272.2 M389.7 262.5 L399.2 270.7 M391.1 261.0 L400.5 269.2 M392.4 259.5 L401.8 267.7 M393.7 258.0 L403.1 266.2 M395.0 256.4 L404.4 264.6 M396.3 254.9 L405.7 263.1 M397.6 253.4 L407.1 261.6 M400.7 249.9 L410.2 258.1 M402.3 248.0 L411.7 256.2 M403.9 246.2 L413.3 254.4 M405.5 244.4 L414.9 252.6 M407.0 242.6 L416.5 250.8 M408.6 240.8 L418.0 249.0 M412.5 236.3 L421.9 244.5 M413.8 234.8 L423.2 243.0 M415.1 233.3 L424.5 241.5 M416.4 231.8 L425.8 240.0 M417.7 230.3 L427.2 238.5 M419.0 228.8 L428.5 237.0 M424.5 222.5 L433.9 230.7 M426.1 220.7 L435.5 228.9 M427.6 218.9 L437.1 227.1 M429.2 217.1 L438.6 225.3 M430.8 215.3 L440.2 223.5 M432.4 213.5 L441.8 221.7 M433.9 211.7 L443.4 219.9 M435.5 209.8 L444.9 218.0 M439.6 205.1 L449.1 213.3 M440.9 203.6 L450.4 211.8 M442.3 202.1 L451.7 210.3 M443.6 200.6 L453.0 208.8 M444.9 199.1 L454.3 207.3 M446.2 197.6 L455.6 205.8 M447.5 196.0 L456.9 204.2 M448.8 194.5 L458.3 202.7 M451.8 191.1 L461.2 199.3 M453.1 189.6 L462.5 197.8 M454.4 188.1 L463.8 196.3 M455.7 186.6 L465.2 194.8 M457.0 185.1 L466.5 193.3 M458.3 183.6 L467.8 191.8 M459.7 182.1 L469.1 190.3 M461.0 180.6 L470.4 188.8 M462.3 179.0 L471.7 187.2 M463.6 177.5 L473.0 185.7 M466.4 174.4 L475.8 182.6 M467.9 172.5 L477.4 180.7 M469.5 170.7 L478.9 178.9 M471.1 168.9 L480.5 177.1 M472.7 167.1 L482.1 175.3 M474.2 165.3 L483.7 173.5 M475.8 163.5 L485.2 171.7 M477.4 161.7 L486.8 169.9 M479.0 159.9 L488.4 168.1 M480.5 158.1 L490.0 166.3 M482.1 156.2 L491.5 164.4 M516.3 116.9 L525.7 125.1 M517.9 115.1 L527.3 123.3 M519.4 113.3 L528.9 121.5 M521.0 111.5 L530.4 119.7 M522.6 109.7 L532.0 117.9 M524.2 107.9 L533.6 116.1 M525.7 106.1 L535.2 114.3 M529.2 102.1 L538.6 110.3 M530.8 100.3 L540.2 108.5 M532.3 98.4 L541.8 106.6 M533.9 96.6 L543.4 104.8 M535.5 94.8 L544.9 103.0 M537.1 93.0 L546.5 101.2 M538.6 91.2 L548.1 99.4 M540.2 89.4 L549.7 97.6 M541.8 87.6 L551.2 95.8 M543.4 85.8 L552.8 94.0 M544.9 84.0 L554.4 92.2 M546.5 82.1 L556.0 90.3 M548.1 80.3 L557.5 88.5 M549.7 78.5 L559.1 86.7 M551.2 76.7 L560.7 84.9 M552.8 74.9 L562.3 83.1 M554.4 73.1 L563.8 81.3 M318.3 360.5 L327.8 368.7 M319.6 359.0 L329.1 367.2 M321.0 357.5 L330.4 365.7 M322.3 356.0 L331.7 364.2 M323.6 354.5 L333.0 362.7 M324.9 353.0 L334.3 361.2 M326.2 351.5 L335.6 359.7 M327.5 350.0 L336.9 358.2 M328.8 348.5 L338.3 356.7 M331.0 345.9 L340.5 354.1 M332.3 344.4 L341.8 352.6 M333.7 342.9 L343.1 351.1 M335.0 341.4 L344.4 349.6 M336.3 339.9 L345.7 348.1 M337.6 338.4 L347.0 346.6 M338.9 336.9 L348.3 345.1 M340.2 335.4 L349.7 343.6 M341.5 333.9 L351.0 342.1 M342.8 332.3 L352.3 340.5 M344.2 330.8 L353.6 339.0 M345.5 329.3 L354.9 337.5 M346.8 327.8 L356.2 336.0 M348.1 326.3 L357.5 334.5 M349.4 324.8 L358.8 333.0 M351.9 321.9 L361.4 330.1 M353.5 320.1 L362.9 328.3 M355.1 318.3 L364.5 326.5 M356.7 316.4 L366.1 324.6 M358.2 314.6 L367.7 322.8 M362.2 310.1 L371.6 318.3 M364.0 308.0 L373.5 316.2 M365.9 305.9 L375.3 314.1 M367.7 303.7 L377.1 311.9 M369.5 301.6 L379.0 309.8 M371.4 299.5 L380.8 307.7 M373.2 297.4 L382.7 305.6 M375.1 295.3 L384.5 303.5 M376.9 293.2 L386.3 301.4 M378.7 291.1 L388.2 299.3 M380.6 288.9 L390.0 297.1 M382.4 286.8 L391.8 295.0 M384.2 284.7 L393.7 292.9 M386.1 282.6 L395.5 290.8 M389.2 279.0 L398.6 287.2 M390.8 277.2 L400.2 285.4 M392.4 275.4 L401.8 283.6 M393.9 273.6 L403.4 281.8 M395.5 271.8 L404.9 280.0 M397.1 269.9 L406.5 278.1 M398.7 268.1 L408.1 276.3 M404.3 261.7 L413.7 269.9 M405.6 260.1 L415.0 268.3 M406.9 258.6 L416.3 266.8 M408.2 257.1 L417.7 265.3 M409.5 255.6 L419.0 263.8 M410.9 254.1 L420.3 262.3 M412.2 252.6 L421.6 260.8 M413.5 251.1 L422.9 259.3 M414.8 249.6 L424.2 257.8 M416.1 248.1 L425.5 256.3 M417.4 246.6 L426.8 254.8 M418.7 245.1 L428.2 253.3 M420.0 243.5 L429.5 251.7 M421.3 242.0 L430.8 250.2 M422.7 240.5 L432.1 248.7 M424.0 239.0 L433.4 247.2 M425.3 237.5 L434.7 245.7 M426.6 236.0 L436.0 244.2 M430.4 231.6 L439.8 239.8 M432.0 229.8 L441.4 238.0 M433.5 228.0 L443.0 236.2 M435.1 226.2 L444.5 234.4 M436.7 224.4 L446.1 232.6 M438.3 222.6 L447.7 230.8 M439.8 220.8 L449.3 229.0 M441.4 219.0 L450.8 227.2 M445.0 214.8 L454.5 223.0 M446.6 213.0 L456.1 221.2 M448.2 211.1 L457.6 219.3 M449.8 209.3 L459.2 217.5 M451.3 207.5 L460.8 215.7 M452.9 205.7 L462.4 213.9 M454.5 203.9 L463.9 212.1 M456.1 202.1 L465.5 210.3 M458.2 199.6 L467.6 207.8 M460.0 197.5 L469.5 205.7 M461.9 195.4 L471.3 203.6 M463.7 193.3 L473.1 201.5 M465.5 191.2 L475.0 199.4 M467.4 189.1 L476.8 197.3 M469.2 187.0 L478.6 195.2 M471.1 184.9 L480.5 193.1 M472.9 182.7 L482.3 190.9 M474.7 180.6 L484.2 188.8 M476.6 178.5 L486.0 186.7 M478.4 176.4 L487.8 184.6 M480.2 174.3 L489.7 182.5 M482.1 172.2 L491.5 180.4 M483.9 170.1 L493.3 178.3 M486.6 166.9 L496.1 175.1 M488.2 165.1 L497.6 173.3 M489.8 163.3 L499.2 171.5 M491.4 161.5 L500.8 169.7 M492.9 159.7 L502.4 167.9 M494.5 157.9 L503.9 166.1 M499.2 152.5 L508.6 160.7 M500.8 150.7 L510.2 158.9 M502.3 148.9 L511.8 157.1 M503.9 147.1 L513.3 155.3 M505.5 145.2 L514.9 153.4 M507.1 143.4 L516.5 151.6 M508.6 141.6 L518.1 149.8 M510.2 139.8 L519.6 148.0 M511.8 138.0 L521.2 146.2 M513.4 136.2 L522.8 144.4 M514.9 134.4 L524.4 142.6 M516.5 132.6 L525.9 140.8 M518.1 130.8 L527.5 139.0 M519.7 128.9 L529.1 137.1 M521.2 127.1 L530.7 135.3 M523.5 124.5 L532.9 132.7 M524.8 123.0 L534.2 131.2 M526.1 121.5 L535.5 129.7 M527.4 120.0 L536.9 128.2 M528.7 118.5 L538.2 126.7 M530.0 117.0 L539.5 125.2 M535.8 110.4 L545.2 118.6 M537.6 108.3 L547.0 116.5 M539.5 106.2 L548.9 114.4 M541.3 104.1 L550.7 112.3 M543.1 101.9 L552.6 110.1 M545.0 99.8 L554.4 108.0 M546.8 97.7 L556.2 105.9 M548.6 95.6 L558.1 103.8 M550.5 93.5 L559.9 101.7 M552.3 91.4 L561.7 99.6 M554.1 89.3 L563.6 97.5 M556.0 87.2 L565.4 95.4 M557.8 85.0 L567.3 93.2 M559.7 82.9 L569.1 91.1 M327.9 368.9 L337.4 377.1 M329.2 367.4 L338.7 375.6 M330.6 365.9 L340.0 374.1 M331.9 364.4 L341.3 372.6 M333.2 362.9 L342.6 371.1 M334.5 361.3 L343.9 369.5 M335.8 359.8 L345.2 368.0 M337.1 358.3 L346.5 366.5 M338.4 356.8 L347.9 365.0 M339.7 355.3 L349.2 363.5 M341.1 353.8 L350.5 362.0 M342.4 352.3 L351.8 360.5 M343.7 350.8 L353.1 359.0 M345.0 349.3 L354.4 357.5 M346.3 347.8 L355.7 356.0 M350.9 342.4 L360.4 350.6 M352.5 340.6 L361.9 348.8 M354.1 338.8 L363.5 347.0 M355.7 337.0 L365.1 345.2 M357.2 335.2 L366.7 343.4 M358.8 333.4 L368.2 341.6 M360.4 331.6 L369.8 339.8 M362.0 329.7 L371.4 337.9 M363.5 327.9 L373.0 336.1 M365.1 326.1 L374.5 334.3 M366.7 324.3 L376.1 332.5 M368.3 322.5 L377.7 330.7 M369.8 320.7 L379.3 328.9 M371.4 318.9 L380.8 327.1 M373.0 317.1 L382.4 325.3 M374.6 315.3 L384.0 323.5 M376.1 313.4 L385.6 321.6 M381.4 307.4 L390.8 315.6 M383.0 305.6 L392.4 313.8 M384.5 303.8 L394.0 312.0 M386.1 302.0 L395.5 310.2 M387.7 300.2 L397.1 308.4 M389.3 298.3 L398.7 306.5 M390.8 296.5 L400.3 304.7 M392.4 294.7 L401.8 302.9 M394.0 292.9 L403.4 301.1 M395.6 291.1 L405.0 299.3 M399.8 286.2 L409.2 294.4 M401.4 284.4 L410.8 292.6 M402.9 282.6 L412.4 290.8 M404.5 280.8 L413.9 289.0 M406.1 279.0 L415.5 287.2 M407.7 277.2 L417.1 285.4 M409.2 275.4 L418.7 283.6 M410.8 273.6 L420.2 281.8 M412.4 271.7 L421.8 279.9 M413.9 269.9 L423.4 278.1 M415.5 268.1 L425.0 276.3 M417.1 266.3 L426.5 274.5 M418.7 264.5 L428.1 272.7 M420.2 262.7 L429.7 270.9 M421.8 260.9 L431.3 269.1 M423.4 259.1 L432.8 267.3 M425.0 257.3 L434.4 265.5 M427.1 254.8 L436.5 263.0 M428.4 253.3 L437.8 261.5 M429.7 251.8 L439.1 260.0 M431.0 250.3 L440.5 258.5 M432.3 248.8 L441.8 257.0 M433.6 247.3 L443.1 255.5 M439.0 241.2 L448.4 249.4 M440.3 239.7 L449.7 247.9 M441.6 238.2 L451.0 246.4 M442.9 236.6 L452.3 244.8 M444.2 235.1 L453.6 243.3 M445.5 233.6 L454.9 241.8 M446.8 232.1 L456.3 240.3 M448.1 230.6 L457.6 238.8 M449.5 229.1 L458.9 237.3 M450.8 227.6 L460.2 235.8 M452.1 226.1 L461.5 234.3 M453.4 224.6 L462.8 232.8 M454.7 223.1 L464.1 231.3 M456.0 221.5 L465.4 229.7 M457.3 220.0 L466.8 228.2 M458.6 218.5 L468.1 226.7 M459.9 217.0 L469.4 225.2 M461.3 215.5 L470.7 223.7 M462.6 214.0 L472.0 222.2 M466.4 209.6 L475.8 217.8 M467.7 208.1 L477.1 216.3 M469.0 206.6 L478.5 214.8 M470.3 205.1 L479.8 213.3 M471.7 203.6 L481.1 211.8 M473.0 202.0 L482.4 210.2 M474.3 200.5 L483.7 208.7 M475.6 199.0 L485.0 207.2 M476.9 197.5 L486.3 205.7 M478.2 196.0 L487.6 204.2 M479.5 194.5 L489.0 202.7 M480.8 193.0 L490.3 201.2 M482.1 191.5 L491.6 199.7 M483.5 190.0 L492.9 198.2 M509.4 160.2 L518.8 168.4 M511.2 158.0 L520.7 166.2 M513.1 155.9 L522.5 164.1 M514.9 153.8 L524.3 162.0 M516.7 151.7 L526.2 159.9 M518.6 149.6 L528.0 157.8 M520.4 147.5 L529.8 155.7 M522.2 145.4 L531.7 153.6 M524.1 143.2 L533.5 151.5 M525.9 141.1 L535.3 149.3 M527.7 139.0 L537.2 147.2 M532.3 133.8 L541.8 142.0 M533.9 131.9 L543.3 140.1 M535.5 130.1 L544.9 138.3 M537.1 128.3 L546.5 136.5 M538.6 126.5 L548.1 134.7 M540.2 124.7 L549.6 132.9 M541.8 122.9 L551.2 131.1 M543.4 121.1 L552.8 129.3 M544.9 119.3 L554.4 127.5 M546.5 117.5 L555.9 125.7 M548.1 115.6 L557.5 123.8 M549.7 113.8 L559.1 122.0 M551.2 112.0 L560.7 120.2 M552.8 110.2 L562.2 118.4 M555.8 106.8 L565.2 115.0 M557.4 105.0 L566.8 113.2 M558.9 103.2 L568.4 111.4 M560.5 101.3 L569.9 109.5 M562.1 99.5 L571.5 107.7 M563.7 97.7 L573.1 105.9 M565.2 95.9 L574.7 104.1 M566.8 94.1 L576.2 102.3 M568.4 92.3 L577.8 100.5 M570.0 90.5 L579.4 98.7 M571.5 88.7 L581.0 96.9 M573.1 86.9 L582.5 95.1 M574.7 85.0 L584.1 93.2 M576.3 83.2 L585.7 91.4 M577.8 81.4 L587.3 89.6 M579.4 79.6 L588.8 87.8 M585.5 72.6 L594.9 80.8 M586.8 71.1 L596.2 79.3 M588.1 69.6 L597.5 77.8 M589.4 68.1 L598.9 76.3 M590.7 66.6 L600.2 74.8 M592.0 65.1 L601.5 73.3 M593.4 63.6 L602.8 71.8 M594.7 62.0 L604.1 70.2 M596.0 60.5 L605.4 68.7 M597.3 59.0 L606.7 67.2 M598.6 57.5 L608.0 65.7 M338.7 378.2 L348.1 386.4 M340.2 376.4 L349.7 384.6 M341.8 374.6 L351.2 382.8 M343.4 372.8 L352.8 381.0 M345.0 371.0 L354.4 379.2 M346.5 369.2 L356.0 377.4 M348.1 367.3 L357.5 375.5 M349.7 365.5 L359.1 373.7 M351.3 363.7 L360.7 371.9 M352.9 361.8 L362.4 370.0 M354.2 360.3 L363.7 368.5 M355.5 358.8 L365.0 367.0 M356.9 357.3 L366.3 365.5 M358.2 355.8 L367.6 364.0 M359.5 354.3 L368.9 362.5 M360.8 352.8 L370.2 361.0 M362.1 351.2 L371.5 359.4 M363.4 349.7 L372.9 357.9 M364.7 348.2 L374.2 356.4 M366.0 346.7 L375.5 354.9 M367.4 345.2 L376.8 353.4 M371.0 341.1 L380.4 349.3 M372.8 339.0 L382.2 347.2 M374.6 336.8 L384.1 345.0 M376.5 334.7 L385.9 342.9 M378.3 332.6 L387.7 340.8 M380.1 330.5 L389.6 338.7 M382.0 328.4 L391.4 336.6 M383.8 326.3 L393.2 334.5 M385.7 324.2 L395.1 332.4 M387.5 322.0 L396.9 330.2 M389.3 319.9 L398.8 328.1 M391.2 317.8 L400.6 326.0 M393.0 315.7 L402.4 323.9 M394.8 313.6 L404.3 321.8 M399.7 308.0 L409.2 316.2 M401.6 305.8 L411.0 314.0 M403.4 303.7 L412.8 311.9 M405.2 301.6 L414.7 309.8 M407.1 299.5 L416.5 307.7 M408.9 297.4 L418.4 305.6 M410.8 295.3 L420.2 303.5 M412.6 293.2 L422.0 301.4 M414.4 291.1 L423.9 299.3 M416.3 288.9 L425.7 297.1 M418.1 286.8 L427.5 295.0 M419.9 284.7 L429.4 292.9 M454.6 244.9 L464.0 253.1 M456.1 243.1 L465.6 251.3 M457.7 241.3 L467.2 249.5 M459.3 239.4 L468.7 247.6 M460.9 237.6 L470.3 245.8 M462.4 235.8 L471.9 244.0 M464.0 234.0 L473.5 242.2 M465.6 232.2 L475.0 240.4 M467.2 230.4 L476.6 238.6 M468.7 228.6 L478.2 236.8 M470.3 226.8 L479.7 235.0 M471.9 225.0 L481.3 233.2 M473.5 223.1 L482.9 231.3 M477.9 218.1 L487.3 226.3 M479.2 216.6 L488.6 224.8 M480.5 215.0 L489.9 223.2 M481.8 213.5 L491.3 221.7 M483.1 212.0 L492.6 220.2 M484.4 210.5 L493.9 218.7 M485.8 209.0 L495.2 217.2 M487.1 207.5 L496.5 215.7 M488.4 206.0 L497.8 214.2 M489.7 204.5 L499.1 212.7 M492.4 201.4 L501.8 209.6 M494.2 199.3 L503.6 207.5 M496.1 197.2 L505.5 205.4 M497.9 195.0 L507.3 203.2 M499.7 192.9 L509.2 201.1 M501.6 190.8 L511.0 199.0 M503.4 188.7 L512.8 196.9 M505.2 186.6 L514.7 194.8 M507.1 184.5 L516.5 192.7 M508.9 182.4 L518.3 190.6 M510.7 180.3 L520.2 188.5 M512.6 178.1 L522.0 186.3 M514.4 176.0 L523.9 184.2 M516.3 173.9 L525.7 182.1 M519.8 169.8 L529.2 178.0 M521.6 167.7 L531.1 175.9 M523.5 165.6 L532.9 173.8 M525.3 163.5 L534.7 171.7 M527.1 161.4 L536.6 169.6 M529.0 159.3 L538.4 167.5 M530.8 157.2 L540.3 165.4 M532.7 155.0 L542.1 163.3 M534.5 152.9 L543.9 161.1 M536.3 150.8 L545.8 159.0 M538.2 148.7 L547.6 156.9 M540.0 146.6 L549.4 154.8 M541.8 144.5 L551.3 152.7 M543.7 142.4 L553.1 150.6 M545.5 140.3 L554.9 148.5 M547.2 138.3 L556.7 146.5 M549.1 136.2 L558.5 144.4 M550.9 134.0 L560.4 142.2 M552.8 131.9 L562.2 140.1 M554.6 129.8 L564.0 138.0 M556.4 127.7 L565.9 135.9 M558.3 125.6 L567.7 133.8 M560.1 123.5 L569.5 131.7 M563.5 119.5 L573.0 127.7 M564.8 118.0 L574.3 126.2 M566.1 116.5 L575.6 124.7 M567.5 115.0 L576.9 123.2 M568.8 113.5 L578.2 121.7 M570.1 112.0 L579.5 120.2 M571.4 110.5 L580.8 118.7 M572.7 109.0 L582.1 117.2 M575.3 106.0 L584.8 114.2 M576.9 104.2 L586.3 112.4 M578.5 102.4 L587.9 110.6 M580.0 100.5 L589.5 108.7 M581.6 98.7 L591.1 106.9 M583.2 96.9 L592.6 105.1 M584.8 95.1 L594.2 103.3 M586.3 93.3 L595.8 101.5 M587.9 91.5 L597.3 99.7 M589.5 89.7 L598.9 97.9 M591.1 87.9 L600.5 96.1 M592.6 86.0 L602.1 94.2 M594.2 84.2 L603.6 92.4 M595.8 82.4 L605.2 90.6 M597.4 80.6 L606.8 88.8 M598.9 78.8 L608.4 87.0 M600.5 77.0 L609.9 85.2 M346.9 385.4 L356.4 393.6 M348.3 383.9 L357.7 392.1 M349.6 382.4 L359.0 390.6 M350.9 380.9 L360.3 389.1 M352.2 379.4 L361.6 387.6 M353.5 377.9 L362.9 386.1 M354.8 376.4 L364.2 384.6 M356.1 374.8 L365.6 383.0 M358.9 371.6 L368.3 379.8 M360.5 369.8 L369.9 378.0 M362.1 368.0 L371.5 376.2 M363.6 366.2 L373.1 374.4 M365.2 364.4 L374.6 372.6 M366.8 362.6 L376.2 370.8 M393.1 332.3 L402.5 340.5 M394.7 330.5 L404.1 338.7 M396.3 328.7 L405.7 336.9 M397.8 326.9 L407.3 335.1 M399.4 325.1 L408.8 333.3 M401.0 323.2 L410.4 331.4 M402.6 321.4 L412.0 329.6 M404.1 319.6 L413.6 327.8 M405.7 317.8 L415.1 326.0 M426.0 294.5 L435.4 302.7 M427.3 292.9 L436.8 301.1 M428.6 291.4 L438.1 299.6 M429.9 289.9 L439.4 298.1 M431.3 288.4 L440.7 296.6 M432.6 286.9 L442.0 295.1 M433.9 285.4 L443.3 293.6 M435.2 283.9 L444.6 292.1 M436.5 282.4 L445.9 290.6 M437.8 280.9 L447.3 289.1 M439.1 279.4 L448.6 287.6 M440.4 277.8 L449.9 286.0 M441.8 276.3 L451.2 284.5 M443.1 274.8 L452.5 283.0 M444.4 273.3 L453.8 281.5 M445.7 271.8 L455.1 280.0 M470.7 243.0 L480.1 251.2 M472.3 241.2 L481.7 249.4 M473.9 239.4 L483.3 247.6 M475.4 237.6 L484.9 245.8 M477.0 235.8 L486.4 244.0 M478.6 234.0 L488.0 242.2 M480.1 232.2 L489.6 240.4 M481.7 230.4 L491.2 238.6 M483.3 228.6 L492.7 236.8 M484.9 226.7 L494.3 234.9 M488.3 222.8 L497.8 231.0 M489.6 221.2 L499.1 229.4 M491.0 219.7 L500.4 227.9 M492.3 218.2 L501.7 226.4 M493.6 216.7 L503.0 224.9 M494.9 215.2 L504.3 223.4 M496.2 213.7 L505.6 221.9 M497.5 212.2 L507.0 220.4 M498.8 210.7 L508.3 218.9 M500.1 209.2 L509.6 217.4 M501.5 207.7 L510.9 215.9 M502.8 206.2 L512.2 214.4 M504.1 204.6 L513.5 212.8 M505.4 203.1 L514.8 211.3 M509.7 198.2 L519.1 206.4 M511.5 196.1 L521.0 204.3 M513.4 193.9 L522.8 202.1 M515.2 191.8 L524.6 200.0 M517.1 189.7 L526.5 197.9 M518.9 187.6 L528.3 195.8 M520.7 185.5 L530.2 193.7 M524.1 181.6 L533.5 189.8 M525.4 180.1 L534.8 188.3 M526.7 178.6 L536.2 186.8 M528.0 177.1 L537.5 185.3 M529.3 175.6 L538.8 183.8 M530.7 174.1 L540.1 182.3 M532.0 172.6 L541.4 180.8 M533.3 171.0 L542.7 179.2 M534.6 169.5 L544.0 177.7 M535.9 168.0 L545.3 176.2 M537.2 166.5 L546.7 174.7 M538.5 165.0 L548.0 173.2 M539.8 163.5 L549.3 171.7 M541.2 162.0 L550.6 170.2 M542.5 160.5 L551.9 168.7 M543.8 159.0 L553.2 167.2 M545.1 157.5 L554.5 165.7 M546.4 156.0 L555.8 164.2 M547.7 154.4 L557.2 162.6 M549.0 152.9 L558.5 161.1 M552.2 149.3 L561.6 157.5 M554.0 147.2 L563.5 155.4 M555.9 145.1 L565.3 153.3 M557.7 143.0 L567.1 151.2 M559.5 140.9 L569.0 149.1 M561.4 138.7 L570.8 146.9 M563.2 136.6 L572.6 144.8 M565.0 134.5 L574.5 142.7 M566.9 132.4 L576.3 140.6 M568.7 130.3 L578.1 138.5 M570.6 128.2 L580.0 136.4 M572.4 126.1 L581.8 134.3 M574.2 123.9 L583.7 132.2 M608.1 85.0 L617.5 93.2 M609.9 82.9 L619.4 91.1 M611.8 80.8 L621.2 89.0 M613.6 78.7 L623.0 86.9 M615.4 76.5 L624.9 84.7 M617.3 74.4 L626.7 82.6 M619.1 72.3 L628.5 80.5 M620.9 70.2 L630.4 78.4 M622.8 68.1 L632.2 76.3 M624.6 66.0 L634.1 74.2 M626.5 63.9 L635.9 72.1 M628.3 61.7 L637.7 69.9 M630.1 59.6 L639.6 67.8 M632.0 57.5 L641.4 65.7 M633.8 55.4 L643.2 63.6 M356.0 393.3 L365.4 401.5 M357.6 391.5 L367.0 399.7 M359.2 389.7 L368.6 397.9 M360.7 387.9 L370.2 396.1 M362.3 386.1 L371.7 394.3 M363.9 384.2 L373.3 392.4 M365.5 382.4 L374.9 390.6 M367.0 380.6 L376.5 388.8 M368.6 378.8 L378.0 387.0 M370.2 377.0 L379.6 385.2 M373.6 373.1 L383.0 381.3 M375.4 371.0 L384.9 379.2 M377.3 368.9 L386.7 377.1 M379.1 366.8 L388.5 375.0 M380.9 364.6 L390.4 372.8 M382.8 362.5 L392.2 370.7 M384.6 360.4 L394.0 368.6 M386.4 358.3 L395.9 366.5 M388.3 356.2 L397.7 364.4 M390.1 354.1 L399.6 362.3 M392.0 352.0 L401.4 360.2 M395.5 347.9 L404.9 356.1 M397.3 345.8 L406.8 354.0 M399.2 343.7 L408.6 351.9 M401.0 341.5 L410.4 349.7 M402.8 339.4 L412.3 347.6 M404.7 337.3 L414.1 345.5 M406.5 335.2 L415.9 343.4 M408.4 333.1 L417.8 341.3 M410.2 331.0 L419.6 339.2 M412.0 328.9 L421.5 337.1 M413.9 326.8 L423.3 335.0 M448.8 286.5 L458.3 294.7 M450.4 284.7 L459.8 292.9 M452.0 282.9 L461.4 291.1 M453.6 281.1 L463.0 289.3 M455.1 279.3 L464.6 287.5 M456.7 277.5 L466.1 285.7 M458.3 275.7 L467.7 283.9 M459.8 273.9 L469.3 282.1 M461.4 272.0 L470.9 280.2 M463.0 270.2 L472.4 278.4 M464.6 268.4 L474.0 276.6 M466.1 266.6 L475.6 274.8 M467.7 264.8 L477.2 273.0 M469.3 263.0 L478.7 271.2 M470.9 261.2 L480.3 269.4 M474.2 257.3 L483.6 265.5 M476.0 255.2 L485.5 263.4 M477.9 253.1 L487.3 261.3 M479.7 251.0 L489.1 259.2 M481.5 248.9 L491.0 257.1 M488.4 241.0 L497.8 249.2 M490.0 239.2 L499.4 247.4 M491.6 237.4 L501.0 245.6 M493.1 235.6 L502.6 243.8 M494.7 233.7 L504.1 241.9 M496.3 231.9 L505.7 240.1 M497.9 230.1 L507.3 238.3 M499.4 228.3 L508.9 236.5 M501.0 226.5 L510.4 234.7 M502.6 224.7 L512.0 232.9 M504.2 222.9 L513.6 231.1 M505.7 221.1 L515.2 229.3 M507.3 219.3 L516.7 227.5 M508.9 217.4 L518.3 225.6 M514.4 211.1 L523.9 219.3 M516.3 208.9 L525.7 217.1 M518.1 206.8 L527.5 215.0 M520.0 204.7 L529.4 212.9 M521.8 202.6 L531.2 210.8 M523.6 200.5 L533.1 208.7 M525.5 198.4 L534.9 206.6 M527.3 196.3 L536.7 204.5 M529.1 194.1 L538.6 202.3 M534.3 188.2 L543.8 196.4 M536.2 186.1 L545.6 194.3 M538.0 183.9 L547.4 192.1 M539.8 181.8 L549.3 190.0 M541.7 179.7 L551.1 187.9 M543.5 177.6 L552.9 185.8 M547.4 173.1 L556.8 181.3 M549.0 171.3 L558.4 179.5 M550.6 169.5 L560.0 177.7 M552.1 167.7 L561.6 175.9 M553.7 165.9 L563.1 174.1 M555.3 164.1 L564.7 172.3 M556.9 162.3 L566.3 170.5 M558.4 160.5 L567.9 168.7 M560.0 158.6 L569.4 166.8 M561.6 156.8 L571.0 165.0 M563.1 155.0 L572.6 163.2 M564.7 153.2 L574.2 161.4 M569.6 147.6 L579.0 155.8 M570.9 146.1 L580.3 154.3 M572.2 144.6 L581.7 152.8 M573.5 143.1 L583.0 151.3 M574.8 141.6 L584.3 149.8 M576.2 140.1 L585.6 148.3 M577.5 138.5 L586.9 146.7 M578.8 137.0 L588.2 145.2 M580.1 135.5 L589.5 143.7 M581.4 134.0 L590.8 142.2 M582.7 132.5 L592.2 140.7 M584.0 131.0 L593.5 139.2 M585.3 129.5 L594.8 137.7 M586.7 128.0 L596.1 136.2 M588.0 126.5 L597.4 134.7 M609.7 101.4 L619.2 109.6 M611.0 99.9 L620.5 108.1 M612.4 98.4 L621.8 106.6 M613.7 96.9 L623.1 105.1 M615.0 95.4 L624.4 103.6 M616.3 93.9 L625.7 102.1 M617.6 92.4 L627.0 100.6 M618.9 90.9 L628.3 99.1 M620.2 89.4 L629.7 97.6 M366.8 402.7 L376.2 410.9 M368.4 400.9 L377.8 409.1 M369.9 399.0 L379.4 407.2 M371.5 397.2 L380.9 405.4 M373.1 395.4 L382.5 403.6 M374.7 393.6 L384.1 401.8 M376.2 391.8 L385.7 400.0 M377.8 390.0 L387.2 398.2 M379.4 388.2 L388.8 396.4 M381.0 386.4 L390.4 394.6 M382.5 384.6 L392.0 392.8 M384.1 382.7 L393.5 390.9 M385.7 380.9 L395.1 389.1 M387.3 379.1 L396.7 387.3 M390.1 375.8 L399.6 384.0 M392.0 373.7 L401.4 381.9 M393.8 371.6 L403.2 379.8 M395.6 369.5 L405.1 377.7 M397.5 367.4 L406.9 375.6 M399.3 365.3 L408.7 373.5 M401.1 363.1 L410.6 371.3 M403.0 361.0 L412.4 369.2 M408.0 355.3 L417.4 363.5 M409.6 353.4 L419.0 361.6 M411.2 351.6 L420.6 359.8 M412.7 349.8 L422.2 358.0 M414.3 348.0 L423.7 356.2 M415.9 346.2 L425.3 354.4 M418.8 342.8 L428.2 351.0 M420.1 341.3 L429.5 349.5 M421.4 339.8 L430.8 348.0 M422.7 338.3 L432.2 346.5 M424.0 336.8 L433.5 345.0 M425.4 335.3 L434.8 343.5 M426.7 333.8 L436.1 342.0 M428.0 332.3 L437.4 340.5 M429.3 330.8 L438.7 339.0 M430.6 329.3 L440.0 337.5 M431.9 327.8 L441.3 336.0 M437.4 321.4 L446.9 329.6 M438.8 319.9 L448.2 328.1 M440.1 318.4 L449.5 326.6 M441.4 316.9 L450.8 325.1 M442.7 315.3 L452.1 323.5 M444.0 313.8 L453.4 322.0 M445.3 312.3 L454.8 320.5 M446.6 310.8 L456.1 319.0 M447.9 309.3 L457.4 317.5 M470.1 283.8 L479.6 292.0 M471.4 282.3 L480.9 290.5 M472.8 280.8 L482.2 289.0 M474.1 279.3 L483.5 287.5 M475.4 277.7 L484.8 285.9 M476.7 276.2 L486.1 284.4 M478.0 274.7 L487.4 282.9 M479.3 273.2 L488.8 281.4 M480.6 271.7 L490.1 279.9 M481.9 270.2 L491.4 278.4 M483.3 268.7 L492.7 276.9 M484.6 267.2 L494.0 275.4 M485.9 265.7 L495.3 273.9 M487.2 264.2 L496.6 272.4 M488.5 262.7 L497.9 270.9 M489.8 261.1 L499.2 269.3 M491.1 259.6 L500.6 267.8 M494.3 256.0 L503.7 264.2 M495.8 254.2 L505.3 262.4 M497.4 252.4 L506.8 260.6 M499.0 250.6 L508.4 258.8 M500.6 248.8 L510.0 257.0 M502.1 247.0 L511.6 255.2 M503.7 245.2 L513.1 253.4 M505.3 243.4 L514.7 251.6 M506.9 241.5 L516.3 249.7 M508.4 239.7 L517.9 247.9 M510.0 237.9 L519.4 246.1 M511.6 236.1 L521.0 244.3 M513.2 234.3 L522.6 242.5 M516.4 230.5 L525.9 238.7 M518.3 228.4 L527.7 236.6 M520.1 226.3 L529.6 234.5 M522.0 224.2 L531.4 232.4 M523.8 222.1 L533.2 230.3 M525.6 219.9 L535.1 228.1 M527.8 217.4 L537.2 225.6 M529.1 215.9 L538.5 224.1 M530.4 214.4 L539.9 222.6 M531.7 212.9 L541.2 221.1 M533.0 211.4 L542.5 219.6 M534.4 209.9 L543.8 218.1 M535.7 208.4 L545.1 216.6 M537.0 206.9 L546.4 215.1 M538.3 205.4 L547.7 213.6 M539.6 203.9 L549.0 212.1 M540.9 202.4 L550.4 210.6 M542.2 200.8 L551.7 209.0 M543.5 199.3 L553.0 207.5 M544.9 197.8 L554.3 206.0 M546.2 196.3 L555.6 204.5 M547.5 194.8 L556.9 203.0 M548.8 193.3 L558.2 201.5 M550.1 191.8 L559.5 200.0 M553.6 187.8 L563.0 196.0 M555.2 186.0 L564.6 194.2 M556.7 184.2 L566.2 192.4 M558.3 182.4 L567.7 190.6 M559.9 180.5 L569.3 188.7 M561.5 178.7 L570.9 186.9 M563.0 176.9 L572.5 185.1 M564.6 175.1 L574.0 183.3 M566.2 173.3 L575.6 181.5 M567.8 171.5 L577.2 179.7 M569.3 169.7 L578.8 177.9 M570.9 167.9 L580.3 176.1 M572.5 166.1 L581.9 174.3 M574.0 164.2 L583.5 172.4 M575.6 162.4 L585.1 170.6 M580.4 156.9 L589.8 165.1 M582.0 155.1 L591.4 163.3 M583.5 153.3 L593.0 161.5 M585.1 151.5 L594.6 159.7 M586.7 149.7 L596.1 157.9 M588.3 147.9 L597.7 156.1 M589.8 146.1 L599.3 154.3 M592.7 142.8 L602.1 151.0 M594.5 140.7 L604.0 148.9 M596.4 138.6 L605.8 146.8 M598.2 136.5 L607.6 144.7 M600.0 134.4 L609.5 142.6 M601.9 132.2 L611.3 140.4 M603.7 130.1 L613.1 138.3 M605.5 128.0 L615.0 136.2 M607.4 125.9 L616.8 134.1 M609.2 123.8 L618.7 132.0 M611.1 121.7 L620.5 129.9 M614.2 118.0 L623.7 126.2 M616.1 115.9 L625.5 124.1 M617.9 113.8 L627.4 122.0 M619.8 111.7 L629.2 119.9 M621.6 109.6 L631.0 117.8 M623.4 107.4 L632.9 115.6 M625.3 105.3 L634.7 113.5 M374.4 409.3 L383.9 417.5 M376.0 407.5 L385.5 415.7 M377.6 405.7 L387.0 413.9 M379.2 403.9 L388.6 412.1 M380.7 402.1 L390.2 410.3 M382.3 400.3 L391.8 408.5 M383.9 398.5 L393.3 406.7 M385.5 396.6 L394.9 404.8 M387.0 394.8 L396.5 403.0 M388.6 393.0 L398.1 401.2 M391.3 390.0 L400.7 398.2 M392.8 388.2 L402.3 396.4 M394.4 386.3 L403.9 394.5 M396.0 384.5 L405.4 392.7 M397.6 382.7 L407.0 390.9 M401.8 377.8 L411.3 386.0 M403.7 375.7 L413.1 383.9 M405.5 373.6 L414.9 381.8 M407.3 371.5 L416.8 379.7 M409.2 369.4 L418.6 377.6 M433.3 341.6 L442.8 349.8 M435.2 339.5 L444.6 347.7 M437.0 337.4 L446.4 345.6 M438.8 335.2 L448.3 343.4 M440.7 333.1 L450.1 341.3 M442.5 331.0 L452.0 339.2 M444.4 328.9 L453.8 337.1 M446.2 326.8 L455.6 335.0 M451.0 321.3 L460.4 329.5 M452.3 319.8 L461.7 328.0 M453.6 318.3 L463.0 326.5 M454.9 316.8 L464.3 325.0 M456.2 315.3 L465.6 323.5 M457.5 313.8 L467.0 322.0 M458.8 312.3 L468.3 320.5 M460.1 310.7 L469.6 318.9 M461.5 309.2 L470.9 317.4 M462.8 307.7 L472.2 315.9 M464.1 306.2 L473.5 314.4 M465.4 304.7 L474.8 312.9 M466.7 303.2 L476.1 311.4 M468.0 301.7 L477.4 309.9 M469.3 300.2 L478.8 308.4 M470.6 298.7 L480.1 306.9 M472.0 297.2 L481.4 305.4 M473.3 295.7 L482.7 303.9 M474.6 294.1 L484.0 302.3 M478.9 289.2 L488.3 297.4 M480.4 287.4 L489.9 295.6 M482.0 285.6 L491.4 293.8 M483.6 283.8 L493.0 292.0 M485.2 282.0 L494.6 290.2 M486.7 280.2 L496.2 288.4 M491.7 274.5 L501.1 282.7 M493.2 272.7 L502.7 280.9 M494.8 270.9 L504.2 279.1 M496.4 269.1 L505.8 277.3 M498.0 267.3 L507.4 275.5 M499.5 265.4 L509.0 273.6 M501.1 263.6 L510.5 271.8 M502.7 261.8 L512.1 270.0 M504.3 260.0 L513.7 268.2 M505.8 258.2 L515.3 266.4 M507.4 256.4 L516.8 264.6 M509.0 254.6 L518.4 262.8 M510.6 252.8 L520.0 261.0 M512.1 250.9 L521.6 259.1 M513.7 249.1 L523.1 257.3 M515.3 247.3 L524.7 255.5 M521.5 240.2 L530.9 248.4 M522.8 238.7 L532.2 246.9 M524.1 237.2 L533.5 245.4 M525.4 235.7 L534.8 243.9 M526.7 234.2 L536.1 242.4 M528.0 232.7 L537.5 240.9 M529.3 231.1 L538.8 239.3 M530.7 229.6 L540.1 237.8 M532.0 228.1 L541.4 236.3 M533.3 226.6 L542.7 234.8 M534.6 225.1 L544.0 233.3 M535.9 223.6 L545.3 231.8 M537.2 222.1 L546.6 230.3 M538.5 220.6 L548.0 228.8 M539.8 219.1 L549.3 227.3 M544.6 213.6 L554.0 221.8 M546.5 211.5 L555.9 219.7 M548.3 209.3 L557.7 217.5 M550.1 207.2 L559.6 215.4 M552.0 205.1 L561.4 213.3 M553.8 203.0 L563.2 211.2 M555.6 200.9 L565.1 209.1 M557.5 198.8 L566.9 207.0 M561.3 194.4 L570.8 202.6 M563.2 192.2 L572.6 200.4 M565.0 190.1 L574.4 198.3 M566.8 188.0 L576.3 196.2 M568.7 185.9 L578.1 194.1 M570.5 183.8 L579.9 192.0 M572.3 181.7 L581.8 189.9 M574.2 179.6 L583.6 187.8 M576.0 177.4 L585.5 185.6 M577.9 175.3 L587.3 183.5 M579.7 173.2 L589.1 181.4 M584.8 167.4 L594.2 175.6 M586.1 165.9 L595.5 174.1 M587.4 164.4 L596.8 172.6 M588.7 162.8 L598.1 171.0 M590.0 161.3 L599.5 169.5 M591.3 159.8 L600.8 168.0 M592.6 158.3 L602.1 166.5 M594.0 156.8 L603.4 165.0 M595.3 155.3 L604.7 163.5 M596.6 153.8 L606.0 162.0 M597.9 152.3 L607.3 160.5 M599.2 150.8 L608.6 159.0 M600.5 149.3 L610.0 157.5 M601.8 147.8 L611.3 156.0 M603.1 146.2 L612.6 154.4 M604.5 144.7 L613.9 152.9 M605.8 143.2 L615.2 151.4 M610.0 138.3 L619.4 146.5 M611.6 136.5 L621.0 144.7 M613.2 134.7 L622.6 142.9 M614.7 132.9 L624.2 141.1 M616.3 131.1 L625.7 139.3 M617.9 129.3 L627.3 137.5 M619.5 127.5 L628.9 135.7 M621.0 125.7 L630.5 133.9 M622.6 123.9 L632.0 132.1 M624.2 122.0 L633.6 130.2 M625.8 120.2 L635.2 128.4 M627.3 118.4 L636.8 126.6 M628.9 116.6 L638.3 124.8 M630.5 114.8 L639.9 123.0 M632.1 113.0 L641.5 121.2 M408.7 389.6 L418.2 397.8 M410.0 388.1 L419.5 396.3 M411.3 386.5 L420.8 394.7 M412.7 385.0 L422.1 393.2 M414.0 383.5 L423.4 391.7 M415.3 382.0 L424.7 390.2 M416.6 380.5 L426.0 388.7 M417.9 379.0 L427.3 387.2 M419.2 377.5 L428.7 385.7 M420.5 376.0 L430.0 384.2 M421.8 374.5 L431.3 382.7 M423.2 373.0 L432.6 381.2 M424.5 371.4 L433.9 379.6 M425.8 369.9 L435.2 378.1 M427.1 368.4 L436.5 376.6 M428.4 366.9 L437.8 375.1 M429.7 365.4 L439.1 373.6 M431.0 363.9 L440.5 372.1 M432.3 362.4 L441.8 370.6 M435.8 358.4 L445.2 366.6 M437.1 356.9 L446.6 365.1 M438.4 355.4 L447.9 363.6 M439.8 353.9 L449.2 362.1 M441.1 352.4 L450.5 360.6 M442.4 350.8 L451.8 359.0 M443.7 349.3 L453.1 357.5 M445.0 347.8 L454.4 356.0 M446.3 346.3 L455.7 354.5 M447.6 344.8 L457.1 353.0 M448.9 343.3 L458.4 351.5 M450.2 341.8 L459.7 350.0 M451.6 340.3 L461.0 348.5 M452.9 338.8 L462.3 347.0 M454.2 337.3 L463.6 345.5 M455.5 335.8 L464.9 344.0 M456.8 334.2 L466.2 342.4 M460.1 330.5 L469.5 338.7 M461.4 329.0 L470.8 337.2 M462.7 327.5 L472.1 335.7 M464.0 326.0 L473.4 334.2 M465.3 324.5 L474.7 332.7 M466.6 323.0 L476.1 331.2 M467.9 321.4 L477.4 329.7 M469.2 319.9 L478.7 328.1 M470.6 318.4 L480.0 326.6 M471.9 316.9 L481.3 325.1 M473.2 315.4 L482.6 323.6 M474.5 313.9 L483.9 322.1 M475.8 312.4 L485.2 320.6 M477.1 310.9 L486.5 319.1 M478.4 309.4 L487.9 317.6 M479.7 307.9 L489.2 316.1 M481.0 306.4 L490.5 314.6 M482.4 304.8 L491.8 313.0 M485.6 301.1 L495.1 309.3 M487.2 299.3 L496.6 307.5 M488.8 297.5 L498.2 305.7 M490.3 295.7 L499.8 303.9 M491.9 293.9 L501.4 302.1 M493.5 292.0 L502.9 300.2 M495.1 290.2 L504.5 298.4 M496.6 288.4 L506.1 296.6 M498.2 286.6 L507.6 294.8 M501.7 282.6 L511.1 290.8 M503.3 280.8 L512.7 289.0 M504.8 279.0 L514.3 287.2 M506.4 277.2 L515.9 285.4 M508.0 275.4 L517.4 283.6 M509.6 273.5 L519.0 281.7 M511.1 271.7 L520.6 279.9 M512.7 269.9 L522.2 278.1 M517.6 264.3 L527.1 272.5 M519.0 262.8 L528.4 271.0 M520.3 261.2 L529.7 269.4 M521.6 259.7 L531.0 267.9 M522.9 258.2 L532.3 266.4 M524.2 256.7 L533.6 264.9 M525.5 255.2 L534.9 263.4 M526.8 253.7 L536.3 261.9 M528.1 252.2 L537.6 260.4 M531.8 247.9 L541.3 256.2 M533.1 246.4 L542.6 254.6 M534.4 244.9 L543.9 253.1 M535.8 243.4 L545.2 251.6 M537.1 241.9 L546.5 250.1 M538.4 240.4 L547.8 248.6 M539.7 238.9 L549.1 247.1 M541.0 237.4 L550.4 245.6 M542.3 235.9 L551.8 244.1 M547.7 229.7 L557.2 237.9 M549.6 227.6 L559.0 235.8 M551.4 225.4 L560.8 233.6 M553.2 223.3 L562.7 231.5 M555.1 221.2 L564.5 229.4 M556.9 219.1 L566.3 227.3 M558.7 217.0 L568.2 225.2 M560.6 214.9 L570.0 223.1 M565.7 208.9 L575.2 217.1 M567.6 206.8 L577.0 215.0 M569.4 204.7 L578.8 212.9 M571.2 202.6 L580.7 210.8 M573.1 200.5 L582.5 208.7 M574.9 198.4 L584.3 206.6 M576.7 196.3 L586.2 204.5 M578.6 194.2 L588.0 202.4 M582.1 190.2 L591.5 198.4 M583.4 188.7 L592.8 196.9 M584.7 187.1 L594.1 195.3 M586.0 185.6 L595.4 193.8 M587.3 184.1 L596.7 192.3 M588.6 182.6 L598.0 190.8 M589.9 181.1 L599.4 189.3 M591.2 179.6 L600.7 187.8 M592.6 178.1 L602.0 186.3 M593.9 176.6 L603.3 184.8 M599.0 170.7 L608.4 178.9 M600.8 168.6 L610.2 176.8 M602.6 166.5 L612.1 174.7 M604.5 164.4 L613.9 172.6 M606.3 162.3 L615.7 170.5 M608.1 160.1 L617.6 168.3 M610.0 158.0 L619.4 166.2 M611.8 155.9 L621.3 164.1 M613.7 153.8 L623.1 162.0 M615.5 151.7 L624.9 159.9 M617.3 149.6 L626.8 157.8 M619.2 147.5 L628.6 155.7 M621.0 145.4 L630.4 153.6 M624.5 141.4 L633.9 149.6 M626.0 139.6 L635.5 147.8 M627.6 137.8 L637.0 146.0 M629.2 136.0 L638.6 144.2 M630.7 134.1 L640.2 142.3 M632.3 132.3 L641.8 140.5 M633.9 130.5 L643.3 138.7 M635.5 128.7 L644.9 136.9 M637.0 126.9 L646.5 135.1 M638.6 125.1 L648.1 133.3 M640.2 123.3 L649.6 131.5 M395.4 427.5 L404.8 435.7 M397.2 425.4 L406.7 433.6 M399.1 423.3 L408.5 431.5 M400.9 421.2 L410.3 429.4 M402.7 419.1 L412.2 427.3 M404.6 417.0 L414.0 425.2 M406.4 414.8 L415.8 423.0 M408.2 412.7 L417.7 420.9 M410.1 410.6 L419.5 418.8 M414.4 405.6 L423.8 413.8 M416.0 403.8 L425.4 412.0 M417.6 402.0 L427.0 410.2 M419.1 400.2 L428.6 408.4 M420.7 398.4 L430.1 406.6 M422.3 396.6 L431.7 404.8 M423.9 394.8 L433.3 403.0 M425.4 393.0 L434.9 401.2 M427.0 391.1 L436.4 399.3 M428.6 389.3 L438.0 397.5 M430.2 387.5 L439.6 395.7 M431.7 385.7 L441.2 393.9 M433.3 383.9 L442.7 392.1 M434.9 382.1 L444.3 390.3 M436.5 380.3 L445.9 388.5 M480.1 330.0 L489.5 338.3 M482.0 327.9 L491.4 336.1 M483.8 325.8 L493.2 334.0 M485.6 323.7 L495.1 331.9 M487.5 321.6 L496.9 329.8 M489.3 319.5 L498.7 327.7 M491.1 317.4 L500.6 325.6 M493.0 315.3 L502.4 323.5 M494.8 313.1 L504.2 321.3 M498.5 308.9 L507.9 317.1 M500.3 306.8 L509.8 315.0 M502.2 304.7 L511.6 312.9 M504.0 302.6 L513.4 310.8 M505.8 300.5 L515.3 308.7 M510.5 295.1 L520.0 303.3 M512.1 293.2 L521.5 301.4 M513.7 291.4 L523.1 299.6 M515.3 289.6 L524.7 297.8 M516.8 287.8 L526.3 296.0 M518.4 286.0 L527.8 294.2 M520.0 284.2 L529.4 292.4 M521.6 282.4 L531.0 290.6 M523.1 280.6 L532.6 288.8 M524.7 278.8 L534.1 287.0 M526.3 276.9 L535.7 285.1 M527.9 275.1 L537.3 283.3 M532.0 270.3 L541.5 278.5 M533.9 268.2 L543.3 276.4 M535.7 266.1 L545.1 274.3 M537.5 264.0 L547.0 272.2 M539.4 261.9 L548.8 270.1 M541.2 259.8 L550.7 268.0 M543.1 257.6 L552.5 265.8 M544.9 255.5 L554.3 263.7 M546.7 253.4 L556.2 261.6 M548.6 251.3 L558.0 259.5 M550.4 249.2 L559.8 257.4 M552.2 247.1 L561.7 255.3 M554.1 245.0 L563.5 253.2 M555.9 242.9 L565.3 251.1 M557.7 240.7 L567.2 248.9 M561.9 235.9 L571.4 244.1 M563.8 233.8 L573.2 242.0 M565.6 231.7 L575.0 239.9 M567.4 229.6 L576.9 237.8 M569.3 227.5 L578.7 235.7 M571.1 225.4 L580.5 233.6 M572.9 223.3 L582.4 231.5 M574.8 221.1 L584.2 229.3 M576.6 219.0 L586.1 227.2 M578.5 216.9 L587.9 225.1 M580.3 214.8 L589.7 223.0 M582.1 212.7 L591.6 220.9 M584.0 210.6 L593.4 218.8 M585.8 208.5 L595.2 216.7 M590.9 202.6 L600.3 210.8 M592.7 200.5 L602.1 208.7 M594.5 198.4 L604.0 206.6 M596.4 196.3 L605.8 204.5 M598.2 194.2 L607.7 202.4 M600.1 192.1 L609.5 200.3 M601.9 190.0 L611.3 198.2 M603.7 187.8 L613.2 196.0 M606.4 184.8 L615.8 193.0 M607.9 183.0 L617.4 191.2 M609.5 181.2 L618.9 189.4 M611.1 179.4 L620.5 187.6 M612.7 177.6 L622.1 185.8 M614.2 175.8 L623.7 184.0 M615.8 174.0 L625.2 182.2 M617.4 172.1 L626.8 180.3 M622.9 165.8 L632.3 174.1 M624.7 163.7 L634.1 171.9 M626.5 161.6 L636.0 169.8 M628.4 159.5 L637.8 167.7 M630.2 157.4 L639.6 165.6 M632.0 155.3 L641.5 163.5 M633.9 153.2 L643.3 161.4 M635.7 151.1 L645.1 159.3 M639.0 147.3 L648.4 155.5 M640.6 145.4 L650.0 153.6 M642.2 143.6 L651.6 151.8 M643.7 141.8 L653.2 150.0 M645.3 140.0 L654.7 148.2 M646.9 138.2 L656.3 146.4 M648.5 136.4 L657.9 144.6 M650.0 134.6 L659.5 142.8 M651.6 132.8 L661.0 141.0 M653.2 131.0 L662.6 139.2 M654.8 129.1 L664.2 137.3 M403.4 434.5 L412.8 442.7 M405.2 432.4 L414.7 440.6 M407.1 430.3 L416.5 438.5 M408.9 428.1 L418.3 436.3 M410.7 426.0 L420.2 434.2 M412.6 423.9 L422.0 432.1 M414.4 421.8 L423.8 430.0 M416.2 419.7 L425.7 427.9 M418.1 417.6 L427.5 425.8 M419.9 415.5 L429.4 423.7 M421.8 413.4 L431.2 421.6 M423.6 411.2 L433.0 419.4 M426.3 408.1 L435.7 416.3 M427.6 406.6 L437.0 414.8 M428.9 405.1 L438.4 413.3 M430.2 403.6 L439.7 411.8 M431.6 402.1 L441.0 410.3 M432.9 400.6 L442.3 408.8 M434.2 399.1 L443.6 407.3 M435.5 397.6 L444.9 405.8 M436.8 396.1 L446.2 404.3 M438.1 394.5 L447.5 402.7 M439.4 393.0 L448.9 401.2 M440.7 391.5 L450.2 399.7 M442.0 390.0 L451.5 398.2 M446.3 385.1 L455.7 393.3 M448.1 383.0 L457.6 391.2 M450.0 380.9 L459.4 389.1 M451.8 378.8 L461.2 387.0 M453.6 376.7 L463.1 384.9 M458.5 371.1 L467.9 379.3 M460.1 369.3 L469.5 377.5 M461.6 367.5 L471.1 375.7 M463.2 365.7 L472.7 373.9 M464.8 363.8 L474.2 372.0 M466.4 362.0 L475.8 370.2 M467.9 360.2 L477.4 368.4 M469.5 358.4 L479.0 366.6 M471.1 356.6 L480.5 364.8 M472.7 354.8 L482.1 363.0 M476.9 349.9 L486.3 358.1 M478.2 348.4 L487.6 356.6 M479.5 346.9 L488.9 355.1 M480.8 345.4 L490.3 353.6 M482.1 343.9 L491.6 352.1 M483.4 342.4 L492.9 350.6 M484.8 340.9 L494.2 349.1 M486.1 339.4 L495.5 347.6 M487.4 337.9 L496.8 346.1 M493.0 331.4 L502.5 339.6 M494.6 329.6 L504.0 337.8 M496.2 327.7 L505.6 335.9 M497.7 325.9 L507.2 334.1 M499.3 324.1 L508.8 332.3 M500.9 322.3 L510.3 330.5 M502.5 320.5 L511.9 328.7 M504.0 318.7 L513.5 326.9 M505.6 316.9 L515.1 325.1 M507.2 315.1 L516.6 323.3 M508.8 313.3 L518.2 321.5 M511.7 309.8 L521.2 318.0 M513.6 307.7 L523.0 315.9 M515.4 305.6 L524.8 313.8 M517.2 303.5 L526.7 311.7 M519.1 301.4 L528.5 309.6 M520.9 299.3 L530.4 307.5 M522.8 297.2 L532.2 305.4 M524.6 295.1 L534.0 303.3 M526.4 292.9 L535.9 301.1 M528.3 290.8 L537.7 299.0 M530.1 288.7 L539.5 296.9 M536.8 281.1 L546.2 289.3 M538.3 279.3 L547.8 287.5 M539.9 277.4 L549.3 285.6 M541.5 275.6 L550.9 283.8 M543.0 273.8 L552.5 282.0 M544.6 272.0 L554.1 280.2 M546.2 270.2 L555.6 278.4 M547.8 268.4 L557.2 276.6 M549.3 266.6 L558.8 274.8 M550.9 264.8 L560.4 273.0 M552.5 263.0 L561.9 271.2 M554.1 261.1 L563.5 269.3 M555.6 259.3 L565.1 267.5 M583.6 227.2 L593.0 235.4 M584.9 225.7 L594.3 233.9 M586.2 224.2 L595.6 232.4 M587.5 222.7 L596.9 230.9 M588.8 221.2 L598.2 229.4 M590.1 219.7 L599.6 227.9 M591.4 218.2 L600.9 226.4 M592.7 216.7 L602.2 224.9 M594.1 215.1 L603.5 223.3 M595.4 213.6 L604.8 221.8 M596.7 212.1 L606.1 220.3 M598.0 210.6 L607.4 218.8 M599.3 209.1 L608.7 217.3 M600.6 207.6 L610.1 215.8 M601.9 206.1 L611.4 214.3 M603.2 204.6 L612.7 212.8 M609.2 197.8 L618.6 206.0 M610.5 196.3 L619.9 204.5 M611.8 194.8 L621.2 203.0 M613.1 193.3 L622.5 201.5 M614.4 191.7 L623.8 199.9 M615.7 190.2 L625.1 198.4 M617.0 188.7 L626.5 196.9 M618.3 187.2 L627.8 195.4 M619.7 185.7 L629.1 193.9 M621.0 184.2 L630.4 192.4 M622.3 182.7 L631.7 190.9 M624.3 180.4 L633.7 188.6 M626.1 178.3 L635.5 186.5 M627.9 176.2 L637.4 184.4 M629.8 174.1 L639.2 182.3 M631.6 172.0 L641.0 180.2 M633.4 169.8 L642.9 178.0 M635.3 167.7 L644.7 175.9 M637.1 165.6 L646.5 173.8 M638.9 163.5 L648.4 171.7 M640.8 161.4 L650.2 169.6 M642.6 159.3 L652.1 167.5 M645.8 155.6 L655.2 163.8 M647.4 153.8 L656.8 162.0 M648.9 152.0 L658.4 160.2 M650.5 150.2 L659.9 158.4 M652.1 148.4 L661.5 156.6 M653.7 146.6 L663.1 154.8 M655.2 144.8 L664.7 153.0 M656.8 143.0 L666.2 151.2 M658.4 141.2 L667.8 149.4 M659.9 139.3 L669.4 147.5 M661.5 137.5 L671.0 145.7 M663.1 135.7 L672.5 143.9 M664.7 133.9 L674.1 142.1 M666.2 132.1 L675.7 140.3 M667.8 130.3 L677.3 138.5 M669.4 128.5 L678.8 136.7 M413.6 443.3 L423.0 451.5 M415.1 441.5 L424.6 449.7 M416.7 439.7 L426.1 447.9 M418.3 437.9 L427.7 446.1 M419.8 436.1 L429.3 444.3 M421.4 434.3 L430.9 442.5 M423.0 432.4 L432.4 440.7 M424.6 430.6 L434.0 438.8 M426.1 428.8 L435.6 437.0 M427.7 427.0 L437.2 435.2 M444.8 407.3 L454.3 415.5 M446.2 405.8 L455.6 414.0 M447.5 404.3 L456.9 412.5 M448.8 402.8 L458.2 411.0 M450.1 401.3 L459.5 409.5 M451.4 399.8 L460.8 408.0 M454.2 396.6 L463.6 404.8 M455.5 395.1 L464.9 403.3 M456.8 393.6 L466.2 401.8 M458.1 392.1 L467.5 400.3 M459.4 390.6 L468.8 398.8 M460.7 389.0 L470.2 397.3 M462.0 387.5 L471.5 395.7 M463.3 386.0 L472.8 394.2 M464.7 384.5 L474.1 392.7 M466.0 383.0 L475.4 391.2 M467.3 381.5 L476.7 389.7 M468.6 380.0 L478.0 388.2 M469.9 378.5 L479.3 386.7 M471.2 377.0 L480.7 385.2 M472.5 375.5 L482.0 383.7 M473.8 374.0 L483.3 382.2 M475.2 372.4 L484.6 380.6 M480.3 366.5 L489.7 374.7 M481.6 365.0 L491.0 373.2 M482.9 363.5 L492.4 371.7 M484.2 362.0 L493.7 370.2 M485.5 360.5 L495.0 368.7 M486.9 359.0 L496.3 367.2 M488.2 357.5 L497.6 365.7 M489.5 356.0 L498.9 364.2 M490.8 354.5 L500.2 362.7 M492.1 353.0 L501.5 361.2 M493.4 351.4 L502.9 359.6 M494.7 349.9 L504.2 358.1 M496.0 348.4 L505.5 356.6 M497.4 346.9 L506.8 355.1 M498.7 345.4 L508.1 353.6 M500.0 343.9 L509.4 352.1 M525.3 314.7 L534.8 322.9 M527.2 312.6 L536.6 320.8 M529.0 310.5 L538.4 318.7 M530.8 308.4 L540.3 316.6 M532.7 306.3 L542.1 314.5 M535.8 302.7 L545.3 310.9 M537.1 301.2 L546.6 309.4 M538.4 299.6 L547.9 307.8 M539.8 298.1 L549.2 306.3 M541.1 296.6 L550.5 304.8 M542.4 295.1 L551.8 303.3 M543.7 293.6 L553.1 301.8 M545.0 292.1 L554.4 300.3 M546.3 290.6 L555.8 298.8 M547.6 289.1 L557.1 297.3 M548.9 287.6 L558.4 295.8 M550.3 286.1 L559.7 294.3 M554.3 281.5 L563.7 289.7 M555.6 279.9 L565.0 288.1 M556.9 278.4 L566.3 286.6 M558.2 276.9 L567.6 285.1 M559.5 275.4 L568.9 283.6 M560.8 273.9 L570.2 282.1 M562.1 272.4 L571.6 280.6 M563.4 270.9 L572.9 279.1 M564.8 269.4 L574.2 277.6 M566.1 267.9 L575.5 276.1 M567.4 266.4 L576.8 274.6 M568.7 264.9 L578.1 273.1 M570.0 263.3 L579.4 271.5 M571.3 261.8 L580.7 270.0 M572.6 260.3 L582.1 268.5 M573.9 258.8 L583.4 267.0 M576.3 256.1 L585.7 264.3 M578.1 254.0 L587.6 262.2 M580.0 251.9 L589.4 260.1 M581.8 249.8 L591.3 258.0 M583.7 247.6 L593.1 255.8 M586.4 244.4 L595.9 252.6 M588.3 242.3 L597.7 250.5 M590.1 240.2 L599.5 248.4 M591.9 238.1 L601.4 246.3 M615.2 211.3 L624.7 219.5 M616.5 209.8 L626.0 218.0 M617.9 208.3 L627.3 216.5 M619.2 206.8 L628.6 215.0 M620.5 205.3 L629.9 213.5 M621.8 203.8 L631.2 212.0 M623.1 202.3 L632.5 210.5 M624.4 200.7 L633.8 208.9 M625.7 199.2 L635.2 207.4 M628.6 196.0 L638.0 204.2 M629.9 194.5 L639.3 202.7 M631.2 193.0 L640.6 201.2 M632.5 191.4 L641.9 199.7 M633.8 189.9 L643.2 198.1 M635.1 188.4 L644.6 196.6 M636.4 186.9 L645.9 195.1 M637.7 185.4 L647.2 193.6 M639.1 183.9 L648.5 192.1 M640.4 182.4 L649.8 190.6 M641.7 180.9 L651.1 189.1 M643.0 179.4 L652.4 187.6 M644.3 177.9 L653.7 186.1 M645.6 176.4 L655.1 184.6 M646.9 174.8 L656.4 183.0 M648.2 173.3 L657.7 181.5 M650.0 171.3 L659.4 179.5 M651.6 169.5 L661.0 177.7 M653.1 167.7 L662.6 175.9 M654.7 165.9 L664.2 174.1 M656.3 164.1 L665.7 172.3 M657.9 162.3 L667.3 170.5 M659.4 160.5 L668.9 168.7 M661.0 158.6 L670.4 166.8 M662.6 156.8 L672.0 165.0 M664.2 155.0 L673.6 163.2 M665.7 153.2 L675.2 161.4 M668.5 150.1 L677.9 158.3 M670.3 148.0 L679.7 156.2 M672.1 145.8 L681.6 154.0 M674.0 143.7 L683.4 151.9 M675.8 141.6 L685.2 149.8 M677.7 139.5 L687.1 147.7 M679.5 137.4 L688.9 145.6 M681.3 135.3 L690.8 143.5 M683.2 133.2 L692.6 141.4 M685.0 131.1 L694.4 139.3 M686.8 128.9 L696.3 137.1 M688.7 126.8 L698.1 135.0 M690.5 124.7 L699.9 132.9 M422.9 451.5 L432.4 459.7 M424.5 449.7 L433.9 457.9 M426.1 447.9 L435.5 456.1 M427.7 446.0 L437.1 454.2 M429.2 444.2 L438.7 452.4 M430.8 442.4 L440.2 450.6 M432.4 440.6 L441.8 448.8 M434.0 438.8 L443.4 447.0 M435.5 437.0 L445.0 445.2 M438.2 434.0 L447.6 442.2 M439.5 432.4 L448.9 440.6 M440.8 430.9 L450.2 439.1 M442.1 429.4 L451.5 437.6 M443.4 427.9 L452.9 436.1 M444.7 426.4 L454.2 434.6 M447.8 422.9 L457.2 431.1 M449.6 420.8 L459.1 429.0 M451.5 418.7 L460.9 426.9 M453.3 416.5 L462.7 424.7 M455.1 414.4 L464.6 422.6 M458.0 411.1 L467.4 419.3 M459.3 409.6 L468.8 417.8 M460.6 408.1 L470.1 416.3 M461.9 406.6 L471.4 414.8 M463.3 405.1 L472.7 413.3 M464.6 403.6 L474.0 411.8 M465.9 402.1 L475.3 410.3 M467.2 400.6 L476.6 408.8 M468.5 399.1 L477.9 407.3 M469.8 397.6 L479.2 405.8 M471.1 396.0 L480.6 404.2 M472.4 394.5 L481.9 402.7 M473.8 393.0 L483.2 401.2 M475.1 391.5 L484.5 399.7 M476.4 390.0 L485.8 398.2 M479.1 386.9 L488.5 395.1 M480.4 385.4 L489.8 393.6 M481.7 383.9 L491.2 392.1 M483.0 382.4 L492.5 390.6 M484.3 380.8 L493.8 389.0 M485.7 379.3 L495.1 387.5 M489.3 375.2 L498.7 383.4 M491.1 373.1 L500.5 381.3 M493.0 370.9 L502.4 379.1 M494.8 368.8 L504.2 377.0 M496.6 366.7 L506.1 374.9 M498.5 364.6 L507.9 372.8 M500.3 362.5 L509.7 370.7 M502.1 360.4 L511.6 368.6 M504.0 358.3 L513.4 366.5 M505.8 356.1 L515.2 364.4 M508.7 352.8 L518.1 361.0 M510.5 350.7 L520.0 358.9 M512.4 348.6 L521.8 356.8 M514.2 346.5 L523.6 354.7 M516.0 344.4 L525.5 352.6 M517.9 342.3 L527.3 350.5 M519.7 340.1 L529.2 348.3 M521.6 338.0 L531.0 346.2 M523.4 335.9 L532.8 344.1 M525.2 333.8 L534.7 342.0 M527.1 331.7 L536.5 339.9 M528.9 329.6 L538.3 337.8 M530.7 327.5 L540.2 335.7 M532.6 325.4 L542.0 333.6 M535.9 321.5 L545.4 329.7 M537.5 319.7 L546.9 327.9 M539.1 317.9 L548.5 326.1 M540.7 316.1 L550.1 324.3 M542.2 314.3 L551.7 322.5 M543.8 312.4 L553.2 320.6 M545.4 310.6 L554.8 318.8 M546.9 308.8 L556.4 317.0 M548.5 307.0 L558.0 315.2 M564.0 289.2 L573.4 297.4 M565.3 287.7 L574.7 295.9 M566.6 286.2 L576.0 294.4 M567.9 284.7 L577.3 292.9 M569.2 283.2 L578.6 291.4 M570.5 281.7 L580.0 289.9 M571.8 280.2 L581.3 288.4 M573.1 278.7 L582.6 286.9 M574.5 277.2 L583.9 285.4 M575.8 275.7 L585.2 283.9 M577.1 274.2 L586.5 282.4 M578.4 272.6 L587.8 280.8 M579.7 271.1 L589.1 279.3 M581.0 269.6 L590.5 277.8 M582.3 268.1 L591.8 276.3 M585.3 264.7 L594.8 272.9 M587.2 262.6 L596.6 270.8 M589.0 260.5 L598.4 268.7 M590.8 258.3 L600.3 266.5 M592.7 256.2 L602.1 264.4 M594.5 254.1 L603.9 262.3 M596.3 252.0 L605.8 260.2 M598.2 249.9 L607.6 258.1 M600.0 247.8 L609.5 256.0 M601.9 245.7 L611.3 253.9 M607.4 239.3 L616.8 247.5 M609.0 237.5 L618.4 245.7 M610.6 235.7 L620.0 243.9 M612.1 233.8 L621.6 242.0 M613.7 232.0 L623.1 240.2 M615.3 230.2 L624.7 238.4 M620.8 223.8 L630.3 232.0 M622.1 222.3 L631.6 230.5 M623.5 220.8 L632.9 229.0 M624.8 219.3 L634.2 227.5 M626.1 217.8 L635.5 226.0 M627.4 216.3 L636.8 224.5 M628.7 214.8 L638.1 223.0 M630.0 213.3 L639.5 221.5 M631.3 211.7 L640.8 219.9 M632.6 210.2 L642.1 218.4 M634.0 208.7 L643.4 216.9 M635.3 207.2 L644.7 215.4 M636.6 205.7 L646.0 213.9 M637.9 204.2 L647.3 212.4 M639.2 202.7 L648.6 210.9 M640.5 201.2 L650.0 209.4 M641.8 199.7 L651.3 207.9 M643.3 198.0 L652.8 206.2 M645.2 195.8 L654.6 204.0 M647.0 193.7 L656.4 201.9 M648.8 191.6 L658.3 199.8 M650.7 189.5 L660.1 197.7 M652.5 187.4 L661.9 195.6 M654.4 185.3 L663.8 193.5 M656.2 183.2 L665.6 191.4 M658.0 181.0 L667.5 189.2 M662.5 175.9 L672.0 184.1 M664.1 174.1 L673.5 182.3 M665.7 172.2 L675.1 180.4 M667.2 170.4 L676.7 178.6 M668.8 168.6 L678.3 176.8 M670.4 166.8 L679.8 175.0 M672.0 165.0 L681.4 173.2 M673.5 163.2 L683.0 171.4 M675.1 161.4 L684.6 169.6 M676.7 159.6 L686.1 167.8 M678.3 157.8 L687.7 166.0 M682.5 152.9 L691.9 161.1 M684.1 151.1 L693.5 159.3 M685.7 149.3 L695.1 157.5 M687.2 147.5 L696.7 155.7 M688.8 145.6 L698.2 153.8 M690.4 143.8 L699.8 152.0 M691.9 142.0 L701.4 150.2 M693.5 140.2 L703.0 148.4 M432.7 459.9 L442.1 468.1 M434.3 458.1 L443.7 466.3 M435.8 456.3 L445.3 464.5 M437.4 454.5 L446.8 462.7 M439.0 452.7 L448.4 460.9 M440.6 450.9 L450.0 459.1 M442.1 449.1 L451.6 457.3 M443.7 447.3 L453.1 455.5 M445.3 445.5 L454.7 453.7 M459.9 428.6 L469.4 436.8 M461.8 426.5 L471.2 434.7 M463.6 424.4 L473.0 432.6 M465.4 422.3 L474.9 430.5 M467.3 420.2 L476.7 428.4 M472.4 414.3 L481.8 422.5 M473.7 412.8 L483.1 421.0 M475.0 411.3 L484.4 419.5 M476.3 409.7 L485.7 417.9 M477.6 408.2 L487.1 416.4 M478.9 406.7 L488.4 414.9 M480.3 405.2 L489.7 413.4 M481.6 403.7 L491.0 411.9 M482.9 402.2 L492.3 410.4 M484.2 400.7 L493.6 408.9 M485.5 399.2 L494.9 407.4 M486.8 397.7 L496.2 405.9 M488.1 396.2 L497.6 404.4 M489.4 394.7 L498.9 402.9 M490.7 393.1 L500.2 401.3 M492.1 391.6 L501.5 399.8 M494.8 388.5 L504.2 396.7 M496.6 386.4 L506.1 394.6 M498.5 384.3 L507.9 392.5 M500.3 382.1 L509.7 390.3 M502.1 380.0 L511.6 388.2 M504.0 377.9 L513.4 386.1 M505.8 375.8 L515.3 384.0 M507.7 373.7 L517.1 381.9 M509.5 371.6 L518.9 379.8 M511.3 369.5 L520.8 377.7 M513.2 367.4 L522.6 375.6 M516.0 364.1 L525.4 372.3 M517.3 362.6 L526.7 370.8 M518.6 361.1 L528.0 369.3 M519.9 359.6 L529.3 367.8 M521.2 358.1 L530.6 366.3 M522.5 356.6 L532.0 364.8 M523.8 355.1 L533.3 363.3 M526.8 351.6 L536.3 359.8 M528.4 349.8 L537.8 358.0 M530.0 348.0 L539.4 356.2 M531.6 346.2 L541.0 354.4 M533.1 344.4 L542.6 352.6 M534.7 342.6 L544.1 350.8 M536.3 340.8 L545.7 349.0 M537.9 338.9 L547.3 347.2 M539.4 337.1 L548.9 345.3 M541.0 335.3 L550.4 343.5 M542.6 333.5 L552.0 341.7 M544.2 331.7 L553.6 339.9 M545.7 329.9 L555.2 338.1 M547.3 328.1 L556.7 336.3 M566.3 306.2 L575.7 314.4 M567.9 304.4 L577.3 312.6 M569.5 302.6 L578.9 310.8 M571.0 300.8 L580.5 309.0 M572.6 299.0 L582.0 307.2 M574.2 297.2 L583.6 305.4 M575.8 295.3 L585.2 303.6 M577.3 293.5 L586.8 301.7 M578.9 291.7 L588.3 299.9 M580.5 289.9 L589.9 298.1 M582.1 288.1 L591.5 296.3 M586.6 282.9 L596.0 291.1 M588.2 281.1 L597.6 289.3 M589.7 279.3 L599.2 287.5 M591.3 277.4 L600.8 285.6 M592.9 275.6 L602.3 283.8 M594.5 273.8 L603.9 282.0 M596.0 272.0 L605.5 280.2 M601.4 265.8 L610.9 274.0 M602.8 264.3 L612.2 272.5 M604.1 262.8 L613.5 271.0 M605.4 261.3 L614.8 269.5 M606.7 259.8 L616.1 268.0 M608.0 258.3 L617.4 266.5 M609.3 256.7 L618.8 264.9 M610.6 255.2 L620.1 263.4 M611.9 253.7 L621.4 261.9 M613.3 252.2 L622.7 260.4 M614.6 250.7 L624.0 258.9 M615.9 249.2 L625.3 257.4 M617.2 247.7 L626.6 255.9 M618.5 246.2 L627.9 254.4 M619.8 244.7 L629.2 252.9 M621.1 243.2 L630.6 251.4 M622.4 241.7 L631.9 249.9 M623.8 240.1 L633.2 248.3 M625.1 238.6 L634.5 246.8 M626.4 237.1 L635.8 245.3 M631.0 231.8 L640.4 240.0 M632.8 229.7 L642.3 237.9 M634.7 227.6 L644.1 235.8 M636.5 225.5 L645.9 233.7 M638.3 223.4 L647.8 231.6 M640.2 221.3 L649.6 229.5 M642.0 219.1 L651.4 227.3 M643.8 217.0 L653.3 225.2 M645.7 214.9 L655.1 223.1 M647.5 212.8 L656.9 221.0 M650.9 209.0 L660.3 217.2 M652.4 207.1 L661.9 215.4 M654.0 205.3 L663.4 213.5 M655.6 203.5 L665.0 211.7 M657.2 201.7 L666.6 209.9 M658.7 199.9 L668.2 208.1 M660.3 198.1 L669.7 206.3 M661.9 196.3 L671.3 204.5 M663.5 194.5 L672.9 202.7 M665.0 192.7 L674.5 200.9 M667.0 190.4 L676.5 198.6 M668.6 188.5 L678.0 196.7 M670.2 186.7 L679.6 194.9 M671.8 184.9 L681.2 193.1 M673.3 183.1 L682.8 191.3 M674.9 181.3 L684.3 189.5 M676.5 179.5 L685.9 187.7 M680.1 175.3 L689.5 183.5 M681.7 173.5 L691.1 181.7 M683.3 171.7 L692.7 179.9 M684.8 169.9 L694.3 178.1 M686.4 168.1 L695.8 176.3 M688.0 166.2 L697.4 174.4 M689.6 164.4 L699.0 172.6 M691.1 162.6 L700.6 170.8 M692.7 160.8 L702.1 169.0 M694.3 159.0 L703.7 167.2 M440.4 466.6 L449.8 474.8 M442.0 464.8 L451.4 473.0 M443.5 463.0 L453.0 471.2 M445.1 461.2 L454.5 469.4 M446.7 459.4 L456.1 467.6 M448.3 457.6 L457.7 465.8 M449.8 455.8 L459.3 464.0 M451.4 454.0 L460.8 462.2 M453.0 452.2 L462.4 460.4 M454.6 450.3 L464.0 458.5 M456.1 448.5 L465.6 456.7 M457.7 446.7 L467.1 454.9 M459.3 444.9 L468.7 453.1 M460.9 443.1 L470.3 451.3 M466.2 436.9 L475.7 445.1 M467.6 435.4 L477.0 443.6 M468.9 433.9 L478.3 442.1 M470.2 432.4 L479.6 440.6 M471.5 430.9 L480.9 439.1 M472.8 429.4 L482.2 437.6 M474.1 427.8 L483.5 436.0 M475.4 426.3 L484.9 434.5 M476.7 424.8 L486.2 433.0 M478.1 423.3 L487.5 431.5 M479.4 421.8 L488.8 430.0 M482.7 417.9 L492.2 426.2 M484.6 415.8 L494.0 424.0 M486.4 413.7 L495.8 421.9 M488.2 411.6 L497.7 419.8 M490.1 409.5 L499.5 417.7 M491.9 407.4 L501.3 415.6 M496.1 402.6 L505.5 410.8 M497.7 400.8 L507.1 409.0 M499.2 398.9 L508.7 407.1 M500.8 397.1 L510.2 405.3 M502.4 395.3 L511.8 403.5 M504.0 393.5 L513.4 401.7 M505.5 391.7 L515.0 399.9 M507.1 389.9 L516.5 398.1 M508.7 388.1 L518.1 396.3 M510.3 386.3 L519.7 394.5 M511.8 384.5 L521.3 392.7 M513.4 382.6 L522.8 390.8 M515.0 380.8 L524.4 389.0 M516.6 379.0 L526.0 387.2 M518.1 377.2 L527.6 385.4 M522.5 372.2 L531.9 380.4 M524.1 370.4 L533.5 378.6 M525.6 368.6 L535.1 376.8 M527.2 366.8 L536.6 375.0 M528.8 365.0 L538.2 373.2 M530.3 363.2 L539.8 371.4 M531.9 361.3 L541.4 369.5 M533.5 359.5 L542.9 367.7 M535.1 357.7 L544.5 365.9 M540.2 351.8 L549.6 360.0 M542.0 349.7 L551.5 357.9 M543.9 347.6 L553.3 355.8 M545.7 345.5 L555.2 353.7 M547.6 343.4 L557.0 351.6 M549.4 341.2 L558.8 349.4 M551.2 339.1 L560.7 347.3 M553.1 337.0 L562.5 345.2 M554.9 334.9 L564.3 343.1 M560.2 328.8 L569.7 337.0 M562.1 326.7 L571.5 334.9 M563.9 324.6 L573.3 332.8 M565.7 322.4 L575.2 330.6 M567.6 320.3 L577.0 328.5 M569.4 318.2 L578.9 326.4 M571.3 316.1 L580.7 324.3 M573.1 314.0 L582.5 322.2 M574.9 311.9 L584.4 320.1 M576.8 309.8 L586.2 318.0 M578.6 307.6 L588.0 315.8 M580.4 305.5 L589.9 313.7 M582.3 303.4 L591.7 311.6 M584.1 301.3 L593.5 309.5 M682.5 188.1 L691.9 196.3 M684.3 186.0 L693.8 194.2 M686.2 183.9 L695.6 192.1 M688.0 181.8 L697.4 190.0 M689.8 179.7 L699.3 187.9 M691.7 177.6 L701.1 185.8 M694.9 173.9 L704.3 182.1 M696.2 172.4 L705.6 180.6 M697.5 170.9 L707.0 179.1 M698.8 169.3 L708.3 177.5 M700.1 167.8 L709.6 176.0 M701.5 166.3 L710.9 174.5 M702.8 164.8 L712.2 173.0 M704.1 163.3 L713.5 171.5 M705.4 161.8 L714.8 170.0 M706.7 160.3 L716.1 168.5 M449.8 474.8 L459.2 483.0 M451.3 473.0 L460.8 481.2 M452.9 471.2 L462.4 479.4 M454.5 469.4 L463.9 477.6 M456.1 467.6 L465.5 475.8 M457.6 465.7 L467.1 473.9 M459.2 463.9 L468.7 472.1 M460.8 462.1 L470.2 470.3 M462.4 460.3 L471.8 468.5 M463.9 458.5 L473.4 466.7 M465.5 456.7 L475.0 464.9 M467.1 454.9 L476.5 463.1 M468.7 453.1 L478.1 461.3 M470.2 451.3 L479.7 459.5 M471.8 449.4 L481.2 457.6 M473.4 447.6 L482.8 455.8 M475.0 445.8 L484.4 454.0 M477.2 443.3 L486.6 451.5 M478.5 441.8 L487.9 450.0 M479.8 440.3 L489.2 448.5 M481.1 438.8 L490.5 447.0 M482.4 437.2 L491.9 445.4 M483.7 435.7 L493.2 443.9 M485.0 434.2 L494.5 442.4 M490.9 427.5 L500.4 435.7 M492.5 425.7 L501.9 433.9 M494.1 423.8 L503.5 432.0 M495.6 422.0 L505.1 430.2 M497.2 420.2 L506.7 428.4 M498.8 418.4 L508.2 426.6 M500.4 416.6 L509.8 424.8 M501.9 414.8 L511.4 423.0 M504.5 411.8 L513.9 420.0 M506.1 410.0 L515.5 418.2 M507.6 408.2 L517.1 416.4 M509.2 406.4 L518.7 414.6 M510.8 404.6 L520.2 412.8 M512.4 402.8 L521.8 411.0 M513.9 401.0 L523.4 409.2 M515.5 399.2 L525.0 407.4 M517.1 397.4 L526.5 405.6 M518.7 395.5 L528.1 403.7 M520.2 393.7 L529.7 401.9 M521.8 391.9 L531.3 400.1 M523.4 390.1 L532.8 398.3 M525.0 388.3 L534.4 396.5 M526.5 386.5 L536.0 394.7 M528.1 384.7 L537.6 392.9 M533.2 378.9 L542.6 387.1 M535.0 376.8 L544.4 385.0 M536.8 374.7 L546.3 382.9 M538.7 372.5 L548.1 380.7 M540.5 370.4 L549.9 378.6 M542.3 368.3 L551.8 376.5 M544.2 366.2 L553.6 374.4 M546.0 364.1 L555.4 372.3 M547.8 362.0 L557.3 370.2 M549.7 359.9 L559.1 368.1 M551.5 357.8 L561.0 366.0 M553.4 355.6 L562.8 363.8 M555.2 353.5 L564.6 361.7 M559.0 349.2 L568.4 357.4 M560.3 347.7 L569.7 355.9 M561.6 346.1 L571.0 354.3 M562.9 344.6 L572.4 352.8 M564.2 343.1 L573.7 351.3 M565.6 341.6 L575.0 349.8 M566.9 340.1 L576.3 348.3 M568.2 338.6 L577.6 346.8 M569.5 337.1 L578.9 345.3 M570.8 335.6 L580.2 343.8 M572.1 334.1 L581.5 342.3 M573.4 332.6 L582.9 340.8 M574.7 331.0 L584.2 339.2 M580.5 324.4 L590.0 332.6 M581.8 322.9 L591.3 331.1 M583.2 321.4 L592.6 329.6 M584.5 319.9 L593.9 328.1 M585.8 318.3 L595.2 326.6 M587.1 316.8 L596.5 325.0 M588.4 315.3 L597.8 323.5 M589.7 313.8 L599.1 322.0 M591.0 312.3 L600.5 320.5 M592.3 310.8 L601.8 319.0 M593.6 309.3 L603.1 317.5 M595.0 307.8 L604.4 316.0 M596.3 306.3 L605.7 314.5 M597.6 304.8 L607.0 313.0 M598.9 303.3 L608.3 311.5 M600.2 301.7 L609.6 309.9 M601.5 300.2 L611.0 308.4 M606.3 294.7 L615.8 302.9 M607.9 292.9 L617.3 301.1 M609.5 291.1 L618.9 299.3 M611.1 289.3 L620.5 297.5 M612.6 287.5 L622.1 295.7 M614.2 285.6 L623.6 293.8 M615.8 283.8 L625.2 292.0 M617.4 282.0 L626.8 290.2 M618.9 280.2 L628.4 288.4 M652.7 241.4 L662.1 249.6 M654.0 239.9 L663.4 248.1 M655.3 238.4 L664.7 246.6 M656.6 236.9 L666.0 245.1 M657.9 235.4 L667.4 243.6 M659.2 233.8 L668.7 242.0 M660.5 232.3 L670.0 240.5 M664.9 227.3 L674.4 235.5 M666.8 225.2 L676.2 233.4 M668.6 223.1 L678.0 231.3 M670.5 220.9 L679.9 229.1 M672.3 218.8 L681.7 227.0 M674.1 216.7 L683.6 224.9 M676.0 214.6 L685.4 222.8 M677.8 212.5 L687.2 220.7 M681.4 208.4 L690.8 216.6 M683.2 206.3 L692.6 214.5 M685.1 204.1 L694.5 212.3 M686.9 202.0 L696.3 210.2 M688.7 199.9 L698.2 208.1 M690.6 197.8 L700.0 206.0 M692.4 195.7 L701.8 203.9 M694.2 193.6 L703.7 201.8 M696.1 191.5 L705.5 199.7 M697.9 189.4 L707.3 197.6 M699.7 187.2 L709.2 195.4 M701.6 185.1 L711.0 193.3 M703.4 183.0 L712.9 191.2 M705.3 180.9 L714.7 189.1 M707.8 178.0 L717.2 186.2 M709.6 175.9 L719.0 184.1 M711.4 173.8 L720.9 182.0 M713.3 171.7 L722.7 179.9 M715.1 169.6 L724.5 177.8 M716.9 167.5 L726.4 175.7 M718.8 165.3 L728.2 173.5 M720.6 163.2 L730.1 171.4 M722.5 161.1 L731.9 169.3 M460.6 484.3 L470.1 492.5 M462.0 482.7 L471.4 490.9 M463.3 481.2 L472.7 489.4 M464.6 479.7 L474.0 487.9 M465.9 478.2 L475.3 486.4 M467.2 476.7 L476.6 484.9 M468.5 475.2 L478.0 483.4 M469.8 473.7 L479.3 481.9 M471.1 472.2 L480.6 480.4 M472.5 470.7 L481.9 478.9 M473.8 469.2 L483.2 477.4 M475.1 467.7 L484.5 475.9 M476.4 466.1 L485.8 474.3 M477.7 464.6 L487.1 472.8 M482.6 459.0 L492.0 467.2 M484.2 457.2 L493.6 465.4 M485.7 455.4 L495.2 463.6 M487.3 453.6 L496.7 461.8 M488.9 451.8 L498.3 460.0 M490.5 450.0 L499.9 458.2 M494.2 445.6 L503.7 453.8 M495.5 444.1 L505.0 452.3 M496.8 442.6 L506.3 450.8 M498.2 441.1 L507.6 449.3 M499.5 439.6 L508.9 447.8 M500.8 438.1 L510.2 446.3 M502.1 436.6 L511.5 444.8 M503.4 435.1 L512.8 443.3 M508.5 429.2 L517.9 437.4 M510.1 427.4 L519.5 435.6 M511.6 425.6 L521.1 433.8 M513.2 423.8 L522.7 432.0 M514.8 422.0 L524.2 430.2 M516.4 420.2 L525.8 428.4 M517.9 418.3 L527.4 426.5 M519.5 416.5 L529.0 424.7 M521.1 414.7 L530.5 422.9 M522.7 412.9 L532.1 421.1 M524.2 411.1 L533.7 419.3 M525.8 409.3 L535.3 417.5 M530.5 403.9 L539.9 412.1 M532.4 401.8 L541.8 410.0 M534.2 399.7 L543.6 407.9 M536.0 397.5 L545.5 405.7 M540.5 392.4 L549.9 400.6 M541.8 390.9 L551.3 399.1 M543.1 389.4 L552.6 397.6 M544.4 387.9 L553.9 396.1 M545.8 386.4 L555.2 394.6 M547.1 384.8 L556.5 393.0 M548.4 383.3 L557.8 391.5 M549.7 381.8 L559.1 390.0 M551.0 380.3 L560.4 388.5 M552.3 378.8 L561.7 387.0 M553.6 377.3 L563.1 385.5 M554.9 375.8 L564.4 384.0 M556.3 374.3 L565.7 382.5 M557.6 372.8 L567.0 381.0 M558.9 371.3 L568.3 379.5 M560.2 369.7 L569.6 377.9 M561.5 368.2 L570.9 376.4 M582.8 343.7 L592.2 351.9 M584.4 341.9 L593.8 350.1 M586.0 340.1 L595.4 348.3 M587.5 338.3 L597.0 346.5 M589.1 336.5 L598.5 344.7 M590.7 334.7 L600.1 342.9 M592.3 332.9 L601.7 341.1 M593.8 331.0 L603.3 339.2 M595.4 329.2 L604.8 337.4 M597.0 327.4 L606.4 335.6 M598.6 325.6 L608.0 333.8 M600.1 323.8 L609.6 332.0 M601.7 322.0 L611.1 330.2 M603.3 320.2 L612.7 328.4 M604.9 318.4 L614.3 326.6 M608.8 313.8 L618.3 322.0 M610.2 312.3 L619.6 320.5 M611.5 310.8 L620.9 319.0 M612.8 309.2 L622.2 317.4 M614.1 307.7 L623.5 315.9 M615.4 306.2 L624.8 314.4 M616.7 304.7 L626.1 312.9 M618.0 303.2 L627.5 311.4 M619.3 301.7 L628.8 309.9 M620.7 300.2 L630.1 308.4 M622.0 298.7 L631.4 306.9 M627.5 292.3 L636.9 300.5 M629.3 290.2 L638.8 298.4 M631.2 288.1 L640.6 296.3 M633.0 286.0 L642.5 294.2 M634.9 283.9 L644.3 292.1 M636.7 281.7 L646.1 289.9 M638.5 279.6 L648.0 287.8 M640.4 277.5 L649.8 285.7 M643.7 273.7 L653.1 281.9 M645.0 272.2 L654.4 280.4 M646.3 270.7 L655.7 278.9 M647.6 269.2 L657.0 277.4 M648.9 267.7 L658.3 275.9 M650.2 266.2 L659.6 274.4 M651.5 264.7 L661.0 272.9 M652.8 263.2 L662.3 271.4 M654.1 261.7 L663.6 269.9 M655.5 260.1 L664.9 268.3 M656.8 258.6 L666.2 266.8 M658.1 257.1 L667.5 265.3 M659.4 255.6 L668.8 263.8 M661.7 252.9 L671.2 261.1 M663.1 251.4 L672.5 259.6 M664.4 249.9 L673.8 258.1 M665.7 248.4 L675.1 256.6 M667.0 246.9 L676.4 255.1 M668.3 245.4 L677.7 253.6 M669.6 243.9 L679.1 252.1 M670.9 242.4 L680.4 250.6 M672.2 240.8 L681.7 249.0 M673.6 239.3 L683.0 247.5 M674.9 237.8 L684.3 246.0 M676.2 236.3 L685.6 244.5 M677.5 234.8 L686.9 243.0 M680.8 231.0 L690.2 239.2 M682.1 229.5 L691.5 237.7 M683.4 228.0 L692.8 236.2 M684.7 226.5 L694.1 234.7 M686.0 225.0 L695.4 233.2 M687.3 223.5 L696.8 231.7 M688.6 222.0 L698.1 230.2 M690.0 220.5 L699.4 228.7 M691.3 219.0 L700.7 227.2 M692.6 217.5 L702.0 225.7 M693.9 215.9 L703.3 224.1 M695.2 214.4 L704.6 222.6 M696.5 212.9 L705.9 221.1 M697.8 211.4 L707.3 219.6 M699.1 209.9 L708.6 218.1 M700.4 208.4 L709.9 216.6 M701.8 206.9 L711.2 215.1 M705.7 202.3 L715.2 210.5 M707.3 200.5 L716.7 208.7 M708.9 198.7 L718.3 206.9 M710.4 196.9 L719.9 205.1 M712.0 195.1 L721.5 203.3 M717.1 189.2 L726.6 197.4 M718.7 187.4 L728.1 195.6 M720.3 185.6 L729.7 193.8 M721.9 183.8 L731.3 192.0 M723.4 182.0 L732.9 190.2 M725.0 180.1 L734.4 188.3 M726.6 178.3 L736.0 186.5 M728.2 176.5 L737.6 184.7 M729.7 174.7 L739.2 182.9 M731.3 172.9 L740.7 181.1 M732.9 171.1 L742.3 179.3 M734.5 169.3 L743.9 177.5 M736.0 167.5 L745.5 175.7 M737.6 165.7 L747.0 173.9 M739.2 163.8 L748.6 172.0 M740.7 162.0 L750.2 170.2 M742.3 160.2 L751.8 168.4 M470.0 492.4 L479.5 500.6 M471.6 490.6 L481.1 498.8 M473.2 488.8 L482.6 497.0 M474.8 487.0 L484.2 495.2 M476.3 485.2 L485.8 493.4 M477.9 483.4 L487.4 491.6 M479.5 481.6 L488.9 489.8 M481.1 479.8 L490.5 488.0 M482.6 477.9 L492.1 486.1 M484.2 476.1 L493.7 484.3 M485.8 474.3 L495.2 482.5 M490.9 468.4 L500.4 476.6 M492.8 466.3 L502.2 474.5 M494.6 464.2 L504.0 472.4 M496.4 462.1 L505.9 470.3 M498.3 460.0 L507.7 468.2 M500.1 457.8 L509.6 466.0 M502.0 455.7 L511.4 463.9 M503.8 453.6 L513.2 461.8 M505.6 451.5 L515.1 459.7 M507.5 449.4 L516.9 457.6 M509.3 447.3 L518.7 455.5 M511.1 445.2 L520.6 453.4 M513.0 443.0 L522.4 451.2 M514.8 440.9 L524.2 449.1 M516.7 438.8 L526.1 447.0 M530.4 423.0 L539.9 431.2 M532.0 421.1 L541.5 429.3 M533.6 419.3 L543.0 427.5 M535.2 417.5 L544.6 425.7 M536.7 415.7 L546.2 423.9 M538.3 413.9 L547.8 422.1 M540.3 411.6 L549.8 419.8 M541.6 410.1 L551.1 418.3 M543.0 408.6 L552.4 416.8 M544.3 407.0 L553.7 415.2 M545.6 405.5 L555.0 413.7 M546.9 404.0 L556.3 412.2 M548.2 402.5 L557.6 410.7 M549.5 401.0 L559.0 409.2 M550.8 399.5 L560.3 407.7 M552.1 398.0 L561.6 406.2 M557.6 391.7 L567.0 399.9 M559.4 389.6 L568.8 397.8 M561.2 387.5 L570.7 395.7 M563.1 385.4 L572.5 393.6 M567.0 380.9 L576.5 389.1 M568.9 378.8 L578.3 387.0 M570.7 376.6 L580.1 384.8 M572.5 374.5 L582.0 382.7 M574.4 372.4 L583.8 380.6 M576.2 370.3 L585.7 378.5 M578.1 368.2 L587.5 376.4 M579.9 366.1 L589.3 374.3 M581.7 364.0 L591.2 372.2 M583.6 361.8 L593.0 370.0 M585.4 359.7 L594.8 367.9 M587.2 357.6 L596.7 365.8 M607.6 334.2 L617.0 342.4 M608.9 332.7 L618.3 340.9 M610.2 331.2 L619.6 339.4 M611.5 329.7 L620.9 337.9 M612.8 328.2 L622.2 336.4 M614.1 326.7 L623.6 334.9 M615.4 325.2 L624.9 333.4 M616.7 323.7 L626.2 331.9 M618.1 322.2 L627.5 330.4 M619.4 320.7 L628.8 328.9 M620.7 319.1 L630.1 327.3 M622.0 317.6 L631.4 325.8 M623.3 316.1 L632.7 324.3 M624.6 314.6 L634.1 322.8 M625.9 313.1 L635.4 321.3 M627.2 311.6 L636.7 319.8 M630.1 308.3 L639.5 316.5 M631.7 306.5 L641.1 314.7 M633.3 304.7 L642.7 312.9 M634.8 302.9 L644.3 311.1 M636.4 301.1 L645.8 309.3 M638.0 299.3 L647.4 307.5 M639.6 297.4 L649.0 305.6 M641.1 295.6 L650.6 303.8 M642.7 293.8 L652.1 302.0 M644.3 292.0 L653.7 300.2 M645.9 290.2 L655.3 298.4 M647.4 288.4 L656.9 296.6 M651.3 283.9 L660.7 292.1 M652.6 282.4 L662.0 290.6 M653.9 280.9 L663.3 289.1 M655.2 279.4 L664.7 287.6 M656.5 277.9 L666.0 286.1 M657.8 276.4 L667.3 284.6 M659.2 274.9 L668.6 283.1 M660.5 273.4 L669.9 281.6 M661.8 271.9 L671.2 280.1 M663.1 270.4 L672.5 278.6 M664.4 268.9 L673.8 277.1 M665.7 267.3 L675.1 275.5 M667.0 265.8 L676.5 274.0 M671.9 260.3 L681.3 268.5 M673.7 258.2 L683.1 266.4 M675.5 256.0 L685.0 264.2 M677.4 253.9 L686.8 262.1 M679.2 251.8 L688.6 260.0 M681.1 249.7 L690.5 257.9 M682.9 247.6 L692.3 255.8 M684.7 245.5 L694.2 253.7 M686.6 243.4 L696.0 251.6 M688.4 241.2 L697.8 249.4 M690.2 239.1 L699.7 247.3 M692.1 237.0 L701.5 245.2 M693.9 234.9 L703.3 243.1 M695.7 232.8 L705.2 241.0 M698.8 229.2 L708.3 237.4 M700.4 227.4 L709.9 235.6 M702.0 225.6 L711.4 233.8 M703.6 223.8 L713.0 232.0 M705.1 222.0 L714.6 230.2 M706.7 220.2 L716.2 228.4 M708.3 218.4 L717.7 226.6 M709.9 216.6 L719.3 224.8 M713.1 212.9 L722.5 221.1 M714.9 210.8 L724.3 219.0 M716.7 208.7 L726.2 216.9 M718.6 206.5 L728.0 214.7 M720.4 204.4 L729.8 212.6 M722.2 202.3 L731.7 210.5 M724.1 200.2 L733.5 208.4 M725.9 198.1 L735.3 206.3 M730.7 192.6 L740.1 200.8 M732.0 191.1 L741.5 199.3 M733.3 189.6 L742.8 197.8 M734.6 188.0 L744.1 196.2 M736.0 186.5 L745.4 194.7 M737.3 185.0 L746.7 193.2 M738.6 183.5 L748.0 191.7 M739.9 182.0 L749.3 190.2 M741.2 180.5 L750.6 188.7 M742.5 179.0 L752.0 187.2 " stroke="#f7f7f1" stroke-width=".6" opacity=".88"/><path d="M167.3 229.2 L429.7 -72.7 M178.4 238.9 L440.8 -63.0 M187.7 247.0 L450.1 -54.9 M195.5 253.8 L457.9 -48.1 M205.0 262.0 L467.4 -39.9 M214.2 270.1 L476.7 -31.8 M224.8 279.2 L487.2 -22.6 M233.3 286.6 L495.7 -15.3 M244.2 296.1 L506.6 -5.8 M252.0 302.9 L514.4 1.0 M263.0 312.4 L525.4 10.6 M272.5 320.7 L534.9 18.8 M281.9 328.9 L544.3 27.0 M289.8 335.7 L552.2 33.8 M300.8 345.3 L563.2 43.4 M310.5 353.7 L572.9 51.8 M318.3 360.5 L580.8 58.7 M327.9 368.9 L590.4 67.0 M338.7 378.2 L601.1 76.3 M346.9 385.4 L609.4 83.5 M356.0 393.3 L618.4 91.4 M366.8 402.7 L629.2 100.8 M374.4 409.3 L636.9 107.4 M384.2 417.8 L646.6 115.9 M395.4 427.5 L657.8 125.6 M403.4 434.5 L665.8 132.6 M413.6 443.3 L676.0 141.4 M422.9 451.5 L685.4 149.6 M432.7 459.9 L695.1 158.1 M440.4 466.6 L702.8 164.8 M449.8 474.8 L712.2 172.9 M460.6 484.3 L723.1 182.4 M470.0 492.4 L732.5 190.5 " stroke="#f7f7f1" stroke-width="1.05" opacity=".95"/><path d="M124.2 280.0 L426.1 542.4 M142.0 259.5 L443.9 521.9 M155.6 243.8 L457.5 506.2 M169.5 227.8 L471.4 490.2 M183.2 212.0 L485.1 474.5 M199.8 192.9 L501.7 455.4 M212.2 178.7 L514.1 441.1 M225.8 163.1 L527.7 425.5 M239.8 147.0 L541.6 409.4 M255.2 129.3 L557.1 391.7 M270.6 111.5 L572.5 374.0 M284.1 96.0 L586.0 358.4 M300.8 76.8 L602.7 339.2 M314.1 61.5 L616.0 323.9 M327.8 45.8 L629.6 308.2 M343.0 28.3 L644.9 290.7 M357.2 11.9 L659.1 274.3 M371.7 -4.8 L673.6 257.7 M385.6 -20.8 L687.5 241.6 M400.2 -37.5 L702.1 224.9 M414.5 -54.0 L716.4 208.4 M430.3 -72.1 L732.1 190.3 M442.2 -85.9 L744.1 176.6 M458.9 -105.1 L760.8 157.3 M471.5 -119.5 L773.3 142.9 " stroke="#f7f7f1" stroke-width=".9" opacity=".85"/></g><clipPath id="cp2"><path d="M165 112 L190 104 L240 118 L252 150 L245 185 L215 205 L185 200 L168 175 L160 140Z"/></clipPath><g clip-path="url(#cp2)"><path d="M188.7 61.5 L183.9 69.2 M192.9 64.2 L188.1 71.8 M235.2 90.6 L230.5 98.3 M239.5 93.3 L234.7 100.9 M243.7 95.9 L239.0 103.6 M247.2 98.1 L242.5 105.8 M249.8 99.7 L245.0 107.4 M254.0 102.4 L249.3 110.0 M257.4 104.5 L252.7 112.1 M276.1 116.2 L271.3 123.8 M278.6 117.8 L273.9 125.4 M281.2 119.3 L276.4 127.0 M283.7 120.9 L279.0 128.6 M288.0 123.6 L283.2 131.2 M290.5 125.2 L285.7 132.8 M310.2 137.5 L305.4 145.1 M312.7 139.1 L308.0 146.7 M316.1 141.2 L311.4 148.8 M320.4 143.8 L315.6 151.5 M203.0 79.5 L198.2 87.1 M206.4 81.6 L201.6 89.3 M208.9 83.2 L204.2 90.8 M212.3 85.3 L207.6 93.0 M215.7 87.5 L211.0 95.1 M259.8 115.0 L255.0 122.6 M263.2 117.1 L258.4 124.7 M266.6 119.2 L261.8 126.9 M269.1 120.8 L264.4 128.5 M271.7 122.4 L266.9 130.0 M274.2 124.0 L269.4 131.6 M292.1 135.2 L287.3 142.8 M295.5 137.3 L290.7 144.9 M298.0 138.9 L293.3 146.5 M166.4 65.7 L161.7 73.4 M169.0 67.3 L164.2 75.0 M173.2 70.0 L168.5 77.6 M199.6 86.5 L194.8 94.1 M203.8 89.1 L199.1 96.7 M206.4 90.7 L201.6 98.3 M208.9 92.3 L204.2 99.9 M160.5 75.3 L155.7 83.0 M164.7 78.0 L159.9 85.6 M168.9 80.6 L164.2 88.3 M172.3 82.7 L167.6 90.4 M215.0 109.4 L210.3 117.1 M218.4 111.6 L213.7 119.2 M222.7 114.2 L217.9 121.8 M285.2 153.3 L280.5 160.9 M287.8 154.9 L283.0 162.5 M292.0 157.5 L287.3 165.2 M296.3 160.2 L291.5 167.8 M157.2 80.5 L152.5 88.1 M161.5 83.1 L156.7 90.8 M164.9 85.3 L160.1 92.9 M167.4 86.8 L162.6 94.5 M205.9 110.9 L201.1 118.5 M210.2 113.6 L205.4 121.2 M213.5 115.7 L208.8 123.3 M216.1 117.3 L211.3 124.9 M235.3 129.3 L230.5 136.9 M237.8 130.9 L233.1 138.5 M246.0 135.9 L241.2 143.6 M250.2 138.6 L245.4 146.2 M254.4 141.2 L249.7 148.9 M263.6 146.9 L258.8 154.6 M267.8 149.6 L263.0 157.2 M271.2 151.7 L266.4 159.3 M281.3 158.0 L276.5 165.6 M283.8 159.6 L279.0 167.2 M172.8 102.0 L168.0 109.6 M177.0 104.6 L172.2 112.3 M197.5 117.5 L192.8 125.1 M200.1 119.0 L195.3 126.7 M202.6 120.6 L197.9 128.3 M206.0 122.8 L201.2 130.4 M231.6 138.7 L226.8 146.4 M234.2 140.3 L229.4 148.0 M236.7 141.9 L231.9 149.6 M239.2 143.5 L234.5 151.1 M241.8 145.1 L237.0 152.7 M270.2 162.9 L265.4 170.5 M274.4 165.5 L269.7 173.1 M180.7 117.3 L175.9 124.9 M184.9 119.9 L180.2 127.6 M187.5 121.5 L182.7 129.2 M190.9 123.6 L186.1 131.3 M200.5 129.7 L195.7 137.3 M203.0 131.3 L198.3 138.9 M205.6 132.8 L200.8 140.5 M216.6 139.7 L211.8 147.4 M220.0 141.9 L215.2 149.5 M222.5 143.4 L217.8 151.1 M228.5 147.2 L223.8 154.8 M231.1 148.8 L226.3 156.4 M234.5 150.9 L229.7 158.5 M242.8 156.1 L238.1 163.8 M247.1 158.8 L242.3 166.4 M251.3 161.4 L246.5 169.1 M254.7 163.5 L249.9 171.2 M151.4 109.6 L146.6 117.2 M155.6 112.3 L150.8 119.9 M159.0 114.4 L154.2 122.0 M162.4 116.5 L157.6 124.1 M166.6 119.2 L161.8 126.8 M172.2 122.7 L167.5 130.3 M175.6 124.8 L170.9 132.4 M179.9 127.4 L175.1 135.1 M184.1 130.1 L179.3 137.7 M186.6 131.7 L181.9 139.3 M195.3 137.1 L190.6 144.7 M198.7 139.2 L194.0 146.9 M201.3 140.8 L196.5 148.4 M203.8 142.4 L199.1 150.0 M210.8 146.8 L206.0 154.4 M213.3 148.3 L208.6 156.0 M216.7 150.5 L212.0 158.1 M221.0 153.1 L216.2 160.8 M239.9 164.9 L235.1 172.6 M244.1 167.6 L239.4 175.2 M247.5 169.7 L242.8 177.3 M251.8 172.4 L247.0 180.0 M259.0 176.9 L254.2 184.5 M263.2 179.5 L258.4 187.1 M154.1 125.4 L149.3 133.0 M158.3 128.0 L153.6 135.7 M187.0 145.9 L182.2 153.6 M191.2 148.6 L186.5 156.2 M195.5 151.2 L190.7 158.9 M199.7 153.9 L195.0 161.5 M209.8 160.2 L205.1 167.8 M213.2 162.3 L208.5 170.0 M238.8 178.3 L234.1 186.0 M242.2 180.4 L237.5 188.1 M246.5 183.1 L241.7 190.7 M249.9 185.2 L245.1 192.9 M147.6 127.9 L142.9 135.5 M151.9 130.6 L147.1 138.2 M156.1 133.2 L151.3 140.8 M160.4 135.9 L155.6 143.5 M163.7 138.0 L159.0 145.6 M188.1 153.2 L183.3 160.8 M192.3 155.8 L187.6 163.5 M195.7 158.0 L191.0 165.6 M215.2 170.1 L210.5 177.8 M219.5 172.8 L214.7 180.4 M243.7 188.0 L239.0 195.6 M247.1 190.1 L242.4 197.7 M250.5 192.2 L245.8 199.8 M151.3 140.8 L146.5 148.4 M154.6 142.9 L149.9 150.6 M158.9 145.6 L154.1 153.2 M166.9 150.6 L162.1 158.2 M169.4 152.2 L164.6 159.8 M171.9 153.7 L167.2 161.4 M175.3 155.9 L170.6 163.5 M209.6 177.3 L204.8 184.9 M213.0 179.4 L208.2 187.0 M220.1 183.9 L215.4 191.5 M223.5 186.0 L218.8 193.6 M226.1 187.6 L221.3 195.2 M229.5 189.7 L224.7 197.3 M238.9 195.6 L234.2 203.2 M242.3 197.7 L237.6 205.4 M244.9 199.3 L240.1 207.0 M247.4 200.9 L242.7 208.5 M250.8 203.0 L246.0 210.7 M257.8 207.4 L253.0 215.0 M260.3 209.0 L255.6 216.6 M262.9 210.6 L258.1 218.2 M123.0 135.3 L118.2 143.0 M126.4 137.4 L121.6 145.1 M130.6 140.1 L125.8 147.7 M134.8 142.7 L130.1 150.4 M137.4 144.3 L132.6 152.0 M142.9 147.8 L138.1 155.4 M146.3 149.9 L141.5 157.5 M149.7 152.0 L144.9 159.6 M153.9 154.7 L149.1 162.3 M157.3 156.8 L152.5 164.4 M165.8 162.1 L161.1 169.7 M168.4 163.7 L163.6 171.3 M171.8 165.8 L167.0 173.4 M176.1 168.5 L171.4 176.2 M179.5 170.7 L174.8 178.3 M183.8 173.3 L179.0 180.9 M187.2 175.4 L182.4 183.1 M191.4 178.1 L186.6 185.7 M198.1 182.3 L193.4 189.9 M200.7 183.9 L195.9 191.5 M204.9 186.5 L200.1 194.2 M207.4 188.1 L202.7 195.7 M212.3 191.2 L207.6 198.8 M216.6 193.8 L211.8 201.5 M220.8 196.5 L216.1 204.1 M247.9 213.4 L243.1 221.0 M250.4 215.0 L245.7 222.6 M253.0 216.6 L248.2 224.2 M257.2 219.2 L252.4 226.8 M259.7 220.8 L255.0 228.4 M132.9 151.2 L128.1 158.8 M137.1 153.8 L132.3 161.5 M140.5 155.9 L135.7 163.6 M227.4 210.3 L222.7 217.9 M230.0 211.9 L225.2 219.5 M232.5 213.5 L227.8 221.1 M235.9 215.6 L231.1 223.2 M238.5 217.2 L233.7 224.8 M244.7 221.1 L240.0 228.7 M248.1 223.2 L243.3 230.8 M250.7 224.8 L245.9 232.4 M254.9 227.4 L250.1 235.1 M258.3 229.5 L253.5 237.2 M114.1 149.6 L109.3 157.2 M117.4 151.7 L112.7 159.3 M120.8 153.8 L116.1 161.4 M124.2 155.9 L119.5 163.6 M155.8 175.7 L151.1 183.3 M159.2 177.8 L154.5 185.4 M170.2 184.7 L165.4 192.3 M174.4 187.3 L169.7 194.9 M177.0 188.9 L172.2 196.5 M200.2 203.4 L195.4 211.0 M204.4 206.1 L199.7 213.7 M207.8 208.2 L203.1 215.8 M210.4 209.8 L205.6 217.4 M213.8 211.9 L209.0 219.5 M220.1 215.8 L215.3 223.5 M222.6 217.4 L217.9 225.1 M225.2 219.0 L220.4 226.7 M228.6 221.1 L223.8 228.8 M232.8 223.8 L228.1 231.4 M237.7 226.8 L232.9 234.5 M241.1 228.9 L236.3 236.6 M243.6 230.5 L238.8 238.2 M246.2 232.1 L241.4 239.8 M250.4 234.8 L245.6 242.4 M107.9 159.4 L103.2 167.0 M112.2 162.0 L107.4 169.7 M120.2 167.1 L115.4 174.7 M124.4 169.7 L119.7 177.3 M132.2 174.6 L127.5 182.2 M134.8 176.2 L130.0 183.8 M139.0 178.8 L134.2 186.4 M201.5 217.8 L196.7 225.5 M204.0 219.4 L199.3 227.1 M207.4 221.6 L202.7 229.2 M227.8 234.3 L223.0 241.9 M232.1 236.9 L227.3 244.6 M234.6 238.5 L229.8 246.2 M238.0 240.7 L233.2 248.3 M103.9 165.9 L99.1 173.5 M106.4 167.4 L101.7 175.1 M114.2 172.3 L109.4 179.9 M118.4 174.9 L113.6 182.6 M121.8 177.1 L117.0 184.7 M124.4 178.6 L119.6 186.3 M128.6 181.3 L123.8 188.9 M132.4 183.6 L127.6 191.3 M136.6 186.3 L131.8 193.9 M140.8 188.9 L136.1 196.6 M148.2 193.5 L143.4 201.2 M151.5 195.6 L146.8 203.3 M155.8 198.3 L151.0 205.9 M160.0 200.9 L155.3 208.6 M163.3 203.0 L158.5 210.6 M165.8 204.5 L161.0 212.2 M170.0 207.2 L165.3 214.8 M172.6 208.8 L167.8 216.4 M181.9 214.6 L177.1 222.2 M185.3 216.7 L180.5 224.3 M189.5 219.4 L184.7 227.0 M213.1 234.1 L208.3 241.7 M216.5 236.2 L211.7 243.8 M99.8 172.3 L95.1 180.0 M102.4 173.9 L97.6 181.6 M106.6 176.6 L101.8 184.2 M110.9 179.2 L106.1 186.9 M120.7 185.4 L115.9 193.0 M124.1 187.5 L119.3 195.1 M135.6 194.7 L130.8 202.3 M138.1 196.3 L133.4 203.9 M142.4 198.9 L137.6 206.6 M146.6 201.6 L141.9 209.2 M150.0 203.7 L145.2 211.3 M192.7 230.3 L187.9 238.0 M196.0 232.5 L191.3 240.1 M200.3 235.1 L195.5 242.7 M209.1 240.6 L204.3 248.2 M213.3 243.3 L208.6 250.9 M216.7 245.4 L211.9 253.0 M232.7 255.3 L227.9 263.0 M236.1 257.5 L231.3 265.1 M239.4 259.6 L234.7 267.2 M242.8 261.7 L238.1 269.3 M246.2 263.8 L241.5 271.5 " stroke="#f7f7f1" stroke-width=".55" opacity=".6"/><path d="M178.9 55.4 L279.7 118.4 M202.5 79.2 L247.5 107.3 M220.3 99.4 L263.4 126.3 M183.7 89.9 L249.0 130.7 M204.3 109.9 L270.5 151.3 M189.9 112.7 L243.0 145.8 M176.1 114.4 L247.6 159.1 M167.4 119.6 L263.0 179.4 M172.6 137.0 L268.6 196.9 M187.6 152.9 L232.4 180.9 M162.3 147.7 L258.7 207.9 M155.7 155.8 L223.8 198.3 M135.3 152.7 L213.3 201.4 M145.1 169.0 L212.0 210.8 M144.0 181.9 L188.7 209.9 M108.9 169.0 L196.8 223.9 M134.3 193.9 L183.5 224.6 " stroke="#f7f7f1" stroke-width=".8" opacity=".85"/></g><path d="M95.1 191.4 l5.9 0.9 l-2.6 -0.6 M190.7 192.2 l-3.4 3.8 l4.0 4.3 M109.4 160.1 l3.4 23.1 l0.8 -3.2 M297.9 142.9 l9.1 19.1 l1.7 -0.1 M259.3 186.0 l-0.2 20.8 l-3.5 6.0 M66.1 173.1 l-9.5 10.5 l1.9 -4.4 M304.5 190.1 l3.1 12.2 l-0.4 -3.2 M198.1 189.6 l9.5 2.3 l-1.5 -5.7 M184.8 183.8 l-18.2 3.1 l2.5 -5.4 M80.2 152.3 l1.5 17.5 l-2.0 1.2 M83.1 162.6 l-4.8 11.2 l5.2 2.2 M221.3 187.2 l-13.7 17.7 l4.5 -0.3 M219.5 140.7 l-1.6 13.8 l-4.9 5.6 M142.6 135.6 l-10.3 4.6 l1.2 -4.3 M160.3 162.9 l-13.7 7.5 l-4.7 0.1 M301.4 128.5 l-5.7 3.5 l0.8 -1.7 M110.1 174.9 l-6.6 5.7 l-4.2 5.4 M285.7 155.0 l-10.8 12.1 l-1.3 1.3 M346.5 110.2 l-9.2 13.3 l-0.1 -1.0 M233.9 139.6 l-14.8 16.5 l4.7 0.9 M68.6 195.7 l2.6 8.6 l-3.4 -0.3 M283.9 140.3 l8.6 19.9 l3.4 -1.9 " stroke="#f7f7f1" stroke-width=".6" opacity=".6" fill="none"/><path d="M520 141.5 L626 141.5 M520 145 L626 145 M520 149 L626 149 M520 164 L626 164 M520 172 L626 172 M520 186 L626 186 M520 191.5 L626 191.5 M520 206 L626 206 M520 226 L626 226 M520 256 L626 256 M584 160 L584 200 M592 160 L592 200 M600 160 L600 200 M612 160 L612 200 M620 160 L620 200 " fill="none" stroke="#f7f7f1" stroke-width="0.7" opacity="0.8" /><path d="M480 186 L626 186 M480 191.5 L626 191.5 M480 197 L626 197 " fill="none" stroke="#f7f7f1" stroke-width="0.8" opacity="0.8" /><path d="M207.0 116.8 L216.8 101.5 L234.5 114.5 L226.0 131.0Z" fill="#c9dcaa" opacity="1" stroke="#9cc3d6" stroke-width="0.6"/><path d="M359.4 189.8 L366.0 170.0 L373.5 156.8 L380.6 148.6 L397.0 153.3 L390.0 165.0 L385.3 175.6 L380.6 192.0Z" fill="#c8dca9" opacity="0.95" stroke="none" stroke-width="0"/><path d="M394.0 152.0 L405.0 140.0 L418.0 127.0 L432.0 111.0 L446.0 100.0 L451.0 100.0 L438.0 113.0 L424.0 128.0 L410.0 141.0 L398.0 156.0Z" fill="#c8dca9" opacity="0.9" stroke="none" stroke-width="0"/><path d="M402.0 131.0 L408.0 128.0 L410.0 134.0 L404.0 137.0Z" fill="#c8dca9" opacity="0.9" stroke="none" stroke-width="0"/><path d="M323.0 162.0 L336.0 162.0 L336.0 173.0 L323.0 173.0Z" fill="#8ebae3" opacity="1" stroke="none" stroke-width="0"/><path d="M391.0 178.0 L395.0 176.0 L393.0 188.0 L389.0 189.0Z" fill="#8ebae3" opacity="1" stroke="none" stroke-width="0"/><path d="M419.0 116.0 L427.0 118.0 L426.0 122.0 L418.0 120.0Z" fill="#8ebae3" opacity="1" stroke="none" stroke-width="0"/><path d="M496.0 104.0 L501.0 102.0 L502.0 110.0 L496.0 112.0Z" fill="#8ebae3" opacity="1" stroke="none" stroke-width="0"/><path d="M493.0 98.0 L497.0 98.0 L496.0 103.0 L493.0 102.0Z" fill="#8ebae3" opacity="1" stroke="none" stroke-width="0"/><path d="M460.0 283.0 L464.0 282.0 L462.0 289.0 L459.0 289.0Z" fill="#8ebae3" opacity="1" stroke="none" stroke-width="0"/><path d="M383.0 270.0 L389.0 270.0 L388.0 276.0 L383.0 276.0Z" fill="#8ebae3" opacity="1" stroke="none" stroke-width="0"/><path d="M414.0 284.0 L420.7 285.0 L420.0 290.8 L414.0 290.0Z" fill="#8ebae3" opacity="1" stroke="none" stroke-width="0"/><path d="M420.7 271.0 L424.4 271.0 L423.0 276.0 L421.0 276.0Z" fill="#8ebae3" opacity="1" stroke="none" stroke-width="0"/><path d="M438.0 274.5 L440.7 275.0 L435.0 283.4 L433.0 283.0Z" fill="#8ebae3" opacity="1" stroke="none" stroke-width="0"/><path d="M56.0 208.0 L58.0 207.0 L60.0 214.0 L58.0 216.0Z" fill="#8ebae3" opacity="1" stroke="none" stroke-width="0"/><path d="M489.0 264.0 L493.0 263.0 L492.0 270.0 L488.0 270.0Z" fill="#8ebae3" opacity="1" stroke="none" stroke-width="0"/><path d="M39.5 127.6 L43.9 135 L67.6 152.8 L86.9 178 L104 199 L128 232 Q135 241 150 241.5 L320 242 Q335 242 340 233.7 L345.5 224.4 L351 209.6 L362 180" fill="none" stroke="#f7f7f1" stroke-width="2.0" opacity="1" /><path d="M39 234 L177 159 L192 150" fill="none" stroke="#f7f7f1" stroke-width="1.5" opacity="1" /><path d="M150 99 L230 147 L290 191 L380 246 L440 292 L469 310 L480 316" fill="none" stroke="#f7f7f1" stroke-width="2.0" opacity="1" /><path d="M157 99 L235 145 L295 188 L360 228" fill="none" stroke="#cfcfc4" stroke-width="0.6" opacity="1" /><path d="M174 159 L189 210 L198 245 L216 316" fill="none" stroke="#f7f7f1" stroke-width="1.1" opacity="1" /><path d="M125 316 L212 300 L238 302 L330 300" fill="none" stroke="#f7f7f1" stroke-width="0.9" opacity="1" /><path d="M41 126.1 L57.3 124 L86.9 129.1 L118 132.8 L135.8 129.1 L158 129.9 L172 132" fill="none" stroke="#f7f7f1" stroke-width="0.9" opacity="0.9" /><path d="M123.9 101 L118 132.8 M140.2 130.6 L141.7 178 M94.3 116 L95.8 132 M100.2 120.5 L97.2 135 M82.4 129.3 L83.9 142.6 M59.5 124.7 L60.2 132 M101.7 133.6 L121 142.4 L118 150 M123.9 133.6 L121 145.4 M134.3 141 L135.8 157.3 M135.8 146.9 L141.7 160.2" fill="none" stroke="#f7f7f1" stroke-width="0.7" opacity="0.85" /><path d="M40.4 256.5 L73.3 250.6 L75.6 241.2 L65 222.4" fill="none" stroke="#f7f7f1" stroke-width="0.8" opacity="0.85" /><path d="M75.6 241.2 L96.8 255.3 L94.5 263.5 L109.8 268.2 L129.8 310.6 L132 316" fill="none" stroke="#f7f7f1" stroke-width="0.8" opacity="0.85" /><path d="M112.1 269.4 L143.9 268.2 L160.4 248.2 L190.9 250.6 L212.1 261.2 L223.9 261.2" fill="none" stroke="#f7f7f1" stroke-width="0.8" opacity="0.85" /><path d="M121.5 217.6 L122.7 223.5 L141.5 223.5 L155.6 216.5 L160.4 209.4 L179.2 200" fill="none" stroke="#f7f7f1" stroke-width="0.8" opacity="0.85" /><path d="M47.4 256.5 L48.6 313" fill="none" stroke="#f7f7f1" stroke-width="0.7" opacity="0.8" /><path d="M286 138 L333 100" fill="none" stroke="#f7f7f1" stroke-width="0.8" opacity="0.7" /><path d="M463 160 L500 140 L520 125 L535 118 M486 100 L484 130 L490 160 M440 135 L470 125 L500 122 M520 100 L530 120 L548 128 M505 99 L520 112 L540 118 L556 130" fill="none" stroke="#f7f7f1" stroke-width="0.8" opacity="0.85" /><path d="M343 192 L392 100" fill="none" stroke="#f7f7f1" stroke-width="0.9" opacity="0.8" /><path d="M240 270 L300 255 L345 255" fill="none" stroke="#f7f7f1" stroke-width="0.7" opacity="0.6" /><path d="M500 314 L540 304 L580 300 L626 302" fill="none" stroke="#f7f7f1" stroke-width="0.9" opacity="0.8" /><path d="M581 99 L575 200 L576 316" fill="none" stroke="#f7f7f1" stroke-width="1.1" opacity="0.9" /><path d="M480 171 L555 103 L560 99" fill="none" stroke="#f7f7f1" stroke-width="1.3" opacity="0.9" /><path d="M517.8 156.5 L540 153 L565 152.8 L577 141.4" fill="none" stroke="#f7f7f1" stroke-width="0.7" opacity="0.8" /><path d="M400 314 L430 250 L470 190 L520 124 L540 99" fill="none" stroke="#f7f7f1" stroke-width="1.4" opacity="0.95" /><path d="M380 260 L440 210 L500 160 L560 125 L626 100" fill="none" stroke="#f7f7f1" stroke-width="1.0" opacity="0.8" /><path d="M431 99 L385 133 L330 175" fill="none" stroke="#f7f7f1" stroke-width="0.8" opacity="0.7" /><path d="M395 252 L475 200 L540 165 L626 140" fill="none" stroke="#f7f7f1" stroke-width="1.0" opacity="0.8" /><path d="M600 316 L610 280 L626 270" fill="none" stroke="#f7f7f1" stroke-width="0.7" opacity="0.6" /><path d="M500 250 L560 235 L626 234" fill="none" stroke="#f7f7f1" stroke-width="0.7" opacity="0.6" /><path d="M535 260 L535 230 L570 232" fill="none" stroke="#f7f7f1" stroke-width="0.7" opacity="0.6" /><path d="M39 200 L55 195" fill="none" stroke="#f7f7f1" stroke-width="0.6" opacity="0.6" /><path d="M137.3 100.3 L138.5 101.0 L140.6 101.0 L142.4 101.2 L143.2 102.2 L143.4 103.6 L143.6 105.1 L144.0 106.4 L144.5 107.6 L145.4 108.6 L146.7 109.1 L148.4 109.4 L149.8 109.9 L150.1 111.3 L149.6 113.7 L149.9 115.6 L151.2 116.0 L153.4 114.7 L155.5 113.5 L156.7 114.1 L156.7 116.5 L156.7 119.1 L157.5 120.2 L159.4 119.5 L161.5 118.4 L163.6 118.8 L163.7 120.3 L163.3 122.1 L163.5 123.7 L164.2 124.6 L165.4 125.4 L166.6 126.0 L167.8 126.7 L169.1 127.3 L169.8 128.3 L169.8 129.9 L169.4 131.8 L169.6 133.3 L171.0 133.3 L173.3 133.9 L175.1 134.6 L175.0 135.9 L173.3 137.7 L171.7 139.5 L171.9 140.8 L174.1 141.4 L176.5 141.8 L177.6 142.8 L176.9 144.3 L175.5 146.0 L175.4 148.3 L176.6 148.8 L178.2 148.8 L179.7 148.9 L180.8 149.4 L181.7 150.2 L182.5 151.1 L183.1 152.4 L183.5 153.8 L184.0 155.1 L185.1 155.6 L187.0 155.3 L188.9 154.8 L190.3 155.6 L189.8 157.8 L188.9 160.2 L189.2 161.6 L191.4 161.5 L194.2 160.9 L195.7 161.3 L195.4 163.3 L194.4 165.8 L194.5 167.4 L195.7 167.2 L197.5 168.2 L198.7 169.2 L198.9 170.4 L198.3 171.7 L197.8 173.0 L197.6 174.3 L197.5 175.6 L197.7 176.8 L198.4 177.9 L199.5 178.3 L201.1 178.3 L201.9 179.5 L201.9 181.8 L202.2 183.9 L203.6 184.2 L206.0 182.9 L208.2 182.0 L209.0 183.2 L209.0 185.8 L209.7 188.0 L210.9 188.4 L212.5 186.9 L214.1 185.3 L215.4 185.0 L216.4 186.2 L217.3 187.8 L218.4 188.8 L219.6 189.0 L220.9 188.8 L222.2 188.6 L223.5 188.3 L224.8 188.0 L226.1 188.2 L227.1 189.2 L227.8 191.0 L228.7 192.3 L230.1 192.1 L231.8 190.6 L233.6 189.3 L234.7 189.7 L235.3 192.0 L235.7 194.6 L236.7 195.5 L238.4 194.4 L240.3 192.6 L241.8 191.9 L242.7 193.1 L243.2 195.3 L244.0 196.8 L245.1 197.1 L246.6 196.6 L248.1 196.3 L249.4 196.3 L250.5 196.8 L251.5 197.5 L252.4 198.4 L253.1 199.7 L253.9 200.9 L255.0 201.3 L256.6 200.7 L258.4 199.7 L259.8 199.4 L260.5 200.9 L260.7 203.4 L261.1 205.3 L262.4 205.4 L264.5 204.0 L266.4 202.6 L267.6 202.9 L268.0 204.9 L268.2 207.4 L269.0 208.6 L270.5 208.3 L272.2 207.4 L273.8 207.0 L274.8 207.6 L275.6 208.7 L276.4 209.9 L277.3 210.9 L278.3 211.6 L279.2 212.1 L280.5 212.3 L282.2 212.2 L283.7 212.1 L284.6 212.9 L284.7 214.9 L284.5 217.1 L285.1 218.3 L286.9 217.9 L289.3 216.8 L291.1 216.4 L291.6 217.7 L291.2 220.3 L291.0 222.5 L292.0 223.2 L294.0 222.6 L296.1 221.8 L297.4 222.0 L297.7 223.3 L298.2 225.1 L298.9 226.3 L300.0 226.9 L301.3 227.0 L302.6 227.1 L303.9 227.2 L305.3 227.2 L306.5 227.5 L307.2 228.7 L307.7 230.5 L308.3 232.0 L309.5 232.3 L311.4 231.2 L313.4 230.1 L314.6 230.3 L314.6 232.3 L315.8 234.8 L317.0 235.8 L318.3 234.4 L319.7 232.1 L321.0 230.9 L322.2 231.8 L323.4 233.8 L324.6 235.1 L325.9 235.0 L327.2 234.0 L328.5 233.1 L329.7 232.8 L331.0 232.9 L332.3 233.2 L333.5 233.9 L334.7 234.9 L335.7 235.5 L337.0 235.2 L338.5 233.9 L339.9 232.6 L341.1 232.8 L342.0 234.7 L342.9 237.1 L344.0 238.0 L345.4 236.8 L347.0 234.6 L348.0 236.0" fill="none" stroke="#88b4dc" stroke-width="1.0" opacity="1" /><path d="M452 99 L440 108 L425 122 L410 135 L395 152 L385 172 L378 190 L371.5 204 L360.4 217 L356.7 228 L349.3 239 L351 243 L354.8 246.7 L364 254 L369.6 257.8 L377 263.3 L380 265.6 L383 271.6 L391.9 274.5 L397.8 280.4 L403.7 284.9 L409.6 290.8 L418.5 292.3 L424.4 298.2 L426 316" fill="none" stroke="#8b9b8f" stroke-width="0.9" opacity="1" stroke-linejoin="round"/><text x="183" y="130" font-size="6.2" fill="#44443f" stroke="#44443f" stroke-width=".15" font-family="Liberation Sans" textLength="26.8" lengthAdjust="spacingAndGlyphs">ossusvinan</text><text x="251" y="160.8" font-size="6.2" fill="#44443f" stroke="#44443f" stroke-width=".15" font-family="Liberation Sans" textLength="26" lengthAdjust="spacingAndGlyphs">unuAlaaav</text><text x="320.6" y="221.4" font-size="6.2" fill="#44443f" stroke="#44443f" stroke-width=".15" font-family="Liberation Sans" textLength="27" lengthAdjust="spacingAndGlyphs">unuaaoalin</text><text x="333.5" y="288" font-size="6.2" fill="#44443f" stroke="#44443f" stroke-width=".15" font-family="Liberation Sans" textLength="26" lengthAdjust="spacingAndGlyphs">unuluuuoe</text><text x="380" y="240.3" font-size="6.2" fill="#44443f" stroke="#44443f" stroke-width=".15" font-family="Liberation Sans" textLength="32.7" lengthAdjust="spacingAndGlyphs">ausnau uuulan</text><text x="521.5" y="124" font-size="6.2" fill="#44443f" stroke="#44443f" stroke-width=".15" font-family="Liberation Sans" textLength="26.2" lengthAdjust="spacingAndGlyphs">nuguusnarn</text><text x="608.6" y="149" font-size="6.2" fill="#44443f" stroke="#44443f" stroke-width=".15" font-family="Liberation Sans">nugu</text><text x="454" y="224.2" font-size="6.2" fill="#44443f" stroke="#44443f" stroke-width=".15" font-family="Liberation Sans" textLength="28.4" lengthAdjust="spacingAndGlyphs">nuguuevuus</text><text x="489" y="217.7" font-size="6.2" fill="#44443f" stroke="#44443f" stroke-width=".15" font-family="Liberation Sans" textLength="34.7" lengthAdjust="spacingAndGlyphs">nuguuevuuen'l</text><text x="449.7" y="300.4" font-size="6.2" fill="#44443f" stroke="#44443f" stroke-width=".15" font-family="Liberation Sans" textLength="50" lengthAdjust="spacingAndGlyphs">ausnasnusuamaudad</text><text x="415.7" y="241.8" font-size="7.8" fill="#363632" stroke="#363632" stroke-width=".12" font-family="Liberation Sans" textLength="20.3" lengthAdjust="spacingAndGlyphs">Poipet</text></svg>
<svg class="a" style="left:367px;top:194px" width="10" height="12" viewBox="0 0 10 12">
 <path d="M5 11.5 C3 8.8 0.4 6.8 0.4 4.6 A4.6 4.6 0 0 1 9.6 4.6 C9.6 6.8 7 8.8 5 11.5Z" fill="#c4195a"/>
 <circle cx="5" cy="4.4" r="1.2" fill="#fff"/>
</svg>
<div class="a" style="left:360.5px;top:207px;font-size:7.4px;color:#2f2f2f;white-space:nowrap;transform:scaleX(.86);transform-origin:0 0">sensor1</div>
<svg class="a" style="left:350.5px;top:239px" width="10" height="12" viewBox="0 0 10 12">
 <path d="M5 11.5 C3 8.8 0.4 6.8 0.4 4.6 A4.6 4.6 0 0 1 9.6 4.6 C9.6 6.8 7 8.8 5 11.5Z" fill="#c4195a"/>
 <circle cx="5" cy="4.4" r="1.2" fill="#fff"/>
</svg>
<div class="a" style="left:344px;top:253px;font-size:7.4px;color:#2f2f2f;white-space:nowrap;transform:scaleX(.86);transform-origin:0 0">sensor2</div>
<!-- controls -->
<div class="a" style="left:609px;top:229px;width:11px;height:11.4px;background:#fafaf7;border-radius:2px;box-shadow:0 0 0 .6px rgba(0,0,0,.12)"></div>
<svg class="a" style="left:610.5px;top:230.7px" width="8" height="8" viewBox="0 0 8 8"><circle cx="4" cy="4" r="3" fill="none" stroke="#e7b8b8" stroke-width=".8"/><path d="M1.5 6.5 L6.5 1.5" stroke="#e7b8b8" stroke-width=".8"/></svg>
<div class="a" style="left:609px;top:244.7px;width:11px;height:35.6px;background:#fafaf7;border-radius:2px;box-shadow:0 0 0 .6px rgba(0,0,0,.12)"></div>
<div class="a" style="left:609px;top:256.6px;width:11px;height:.6px;background:#ddd"></div>
<div class="a" style="left:609px;top:268.5px;width:11px;height:.6px;background:#ddd"></div>
<svg class="a" style="left:609px;top:244.7px" width="11" height="36" viewBox="0 0 11 36">
 <path d="M3 6 H8 M5.5 3.5 V8.5" stroke="#222" stroke-width="1.1"/>
 <path d="M3 18 H8" stroke="#222" stroke-width="1.1"/>
 <path d="M5.5 26.5 L7 30 H4Z" fill="#333"/><path d="M5.5 30 V33" stroke="#999" stroke-width=".8"/>
</svg>
<div class="a" style="left:588.4px;top:284.4px;width:31.6px;height:8.8px;background:rgba(250,250,246,.85);border:.8px solid #444;border-top:none"></div>
<div class="a" style="left:591px;top:286.4px;font-size:4.6px;color:#333;white-space:nowrap">1 km</div>
<div class="a" style="left:481px;top:302.7px;width:141px;height:8.5px;background:rgba(250,250,246,.82);border-radius:5px 0 0 0"></div>
<div class="a" style="left:483.5px;top:304.2px;font-size:5.5px;color:#4b4b4b;white-space:nowrap;transform:scaleX(.962);transform-origin:0 0">MapLibre | © MapTiler © OpenStreetMap contributors</div>
<div class="a" style="left:612.2px;top:303.3px;width:6.2px;height:6.2px;background:#111;border-radius:50%"></div>
<div class="a" style="left:614.8px;top:304.6px;width:1px;height:3.6px;background:#fff"></div>
<!-- minimap -->
<div class="a" style="left:42.7px;top:290.6px;width:20px;height:20px;background:linear-gradient(160deg,#2f5a8a,#1f4d7c 40%,#3a6b8e);border:.8px solid #cfd6dd"></div>
<svg class="a" style="left:43.5px;top:291.5px" width="19" height="19" viewBox="0 0 19 19">
 <path d="M2 4 L6 3 L8 6 L6 9 L4 8Z M9 3 L13 2 L16 5 L14 7 L11 6Z M10 8 L13 9 L12 14 L10 12Z M14 11 L17 12 L16 15 L14 14Z M3 11 L6 12 L5 16 L3 15Z" fill="#8aa070" opacity=".85"/>
</svg>

<!--/MAP-->
<div id="tblbar" class="a"></div>
<div id="tbl" class="a"></div>
<!--TBL-->
<svg class="a" style="left:612px;top:90.5px" width="9" height="8" viewBox="0 0 9 8"><rect x=".4" y=".4" width="7.8" height="6.6" fill="none" stroke="#c4cccb" stroke-width=".75"/><path d="M.4 4.4 H3.8 V7" fill="none" stroke="#c4cccb" stroke-width=".7"/><path d="M4.6 3.6 L7 1.2 M5.4 1.2 H7 V2.8" fill="none" stroke="#c4cccb" stroke-width=".7"/></svg>
<div class="a" style="left:42.5px;top:90.2px;font-size:7px;color:#627472;white-space:nowrap;letter-spacing:-.25px;-webkit-text-stroke:.15px currentColor">noonFnnuusnu</div>
<svg class="a" style="left:612px;top:323.5px" width="9" height="8" viewBox="0 0 9 8"><rect x=".4" y=".4" width="7.8" height="6.6" fill="none" stroke="#c4cccb" stroke-width=".75"/><path d="M.4 4.4 H3.8 V7" fill="none" stroke="#c4cccb" stroke-width=".7"/><path d="M4.6 3.6 L7 1.2 M5.4 1.2 H7 V2.8" fill="none" stroke="#c4cccb" stroke-width=".7"/></svg>
<div class="a" style="left:42.5px;top:322px;font-size:7.4px;color:#d3dad8;white-space:nowrap;letter-spacing:-.35px">unquinsaifan</div>
<div class="a" style="left:39.2px;top:341.2px;width:4.6px;height:4.6px;background:#eef0f0;border-radius:.5px"></div>
<div class="a" style="left:74.5px;top:341.2px;width:4.6px;height:4.6px;background:#eef0f0;border-radius:.5px"></div>
<div class="a" style="left:108px;top:341.2px;width:4.6px;height:4.6px;background:#eef0f0;border-radius:.5px"></div>
<div class="a t7" style="left:47.6px;top:340.2px;color:#e3e7e6;letter-spacing:-.3px">ŕuvuua</div>
<div class="a t7" style="left:83px;top:340.2px;color:#e3e7e6">Alarm</div>
<div class="a t7" style="left:116.5px;top:340.2px;color:#e3e7e6">Info</div>
<div class="a" style="left:541px;top:336px;width:83px;height:14px;background:#405152;border-radius:1.5px"></div>
<div class="a t7" style="left:545.5px;top:339.2px;color:#6b7c7c">Search</div>
<div class="a t7" style="left:40.7px;top:357.5px;color:#f2f4f4;font-weight:bold;letter-spacing:-.3px">Ŝuń</div>
<div class="a t7" style="left:156.6px;top:357.5px;color:#f2f4f4;font-weight:bold;letter-spacing:-.3px">usenn</div>
<div class="a t7" style="left:201.2px;top:357.5px;color:#f2f4f4;font-weight:bold;letter-spacing:-.3px">seuu</div>
<div class="a t7" style="left:252.6px;top:357.5px;color:#f2f4f4;font-weight:bold;letter-spacing:-.3px">sneaiBea</div>
<div class="a" style="left:38px;top:367.00px;width:586px;height:.9px;background:#2a3e42"></div>
<div class="a" style="left:38px;top:381.16px;width:586px;height:.9px;background:#2a3e42"></div>
<div class="a" style="left:38px;top:395.32px;width:586px;height:.9px;background:#2a3e42"></div>
<div class="a" style="left:38px;top:409.48px;width:586px;height:.9px;background:#2a3e42"></div>
<div class="a" style="left:38px;top:423.64px;width:586px;height:.9px;background:#2a3e42"></div>
<div class="a" style="left:38px;top:437.80px;width:586px;height:.9px;background:#2a3e42"></div>
<div class="a" style="left:38px;top:451.96px;width:586px;height:.9px;background:#2a3e42"></div>
<div class="a" style="left:38px;top:466.12px;width:586px;height:.9px;background:#2a3e42"></div>
<div class="a t7" style="left:40.7px;top:370.90px;color:#eceff0;transform:scaleX(.97);transform-origin:0 0">18/10/2024 14:22:00</div>
<div class="a t7" style="left:157px;top:370.90px;color:#eceff0">Alarm</div>
<div class="a t7" style="left:201.7px;top:370.90px;color:#eceff0;transform:scaleX(.86);transform-origin:0 0">SENSOR</div>
<div class="a t7" style="left:253px;top:370.90px;color:#eceff0;transform:scaleX(.942);transform-origin:0 0">SENSOR1 - sensor_images/sensor1_1729236120_LnUYo919H5.jpg</div>
<div class="a t7" style="left:40.7px;top:385.06px;color:#eceff0;transform:scaleX(.97);transform-origin:0 0">18/10/2024 14:22:00</div>
<div class="a t7" style="left:157px;top:385.06px;color:#eceff0">Alarm</div>
<div class="a t7" style="left:201.7px;top:385.06px;color:#eceff0;transform:scaleX(.86);transform-origin:0 0">SENSOR</div>
<div class="a t7" style="left:253px;top:385.06px;color:#eceff0;transform:scaleX(.942);transform-origin:0 0">SENSOR1 - sensor_images/sensor1_1729236120_GUtb4LllcH.jpg</div>
<div class="a t7" style="left:40.7px;top:399.22px;color:#eceff0;transform:scaleX(.97);transform-origin:0 0">18/10/2024 14:22:00</div>
<div class="a t7" style="left:157px;top:399.22px;color:#eceff0">Alarm</div>
<div class="a t7" style="left:201.7px;top:399.22px;color:#eceff0;transform:scaleX(.86);transform-origin:0 0">SENSOR</div>
<div class="a t7" style="left:253px;top:399.22px;color:#eceff0;transform:scaleX(.942);transform-origin:0 0">SENSOR1 - sensor_images/sensor1_1729236120_Ym6PHSeEkf.jpg</div>
<div class="a t7" style="left:40.7px;top:413.38px;color:#eceff0;transform:scaleX(.97);transform-origin:0 0">18/10/2024 14:22:00</div>
<div class="a t7" style="left:157px;top:413.38px;color:#eceff0">Alarm</div>
<div class="a t7" style="left:201.7px;top:413.38px;color:#eceff0;transform:scaleX(.86);transform-origin:0 0">SENSOR</div>
<div class="a t7" style="left:253px;top:413.38px;color:#eceff0;transform:scaleX(.942);transform-origin:0 0">SENSOR1 - 6-person, 1-car, 1-truck</div>
<div class="a t7" style="left:40.7px;top:427.54px;color:#eceff0;transform:scaleX(.97);transform-origin:0 0">18/10/2024 14:22:00</div>
<div class="a t7" style="left:157px;top:427.54px;color:#eceff0">Alarm</div>
<div class="a t7" style="left:201.7px;top:427.54px;color:#eceff0;transform:scaleX(.86);transform-origin:0 0">SENSOR</div>
<div class="a t7" style="left:253px;top:427.54px;color:#eceff0;transform:scaleX(.942);transform-origin:0 0">SENSOR1 - 6-person, 1-car, 1-truck</div>
<div class="a t7" style="left:40.7px;top:441.70px;color:#eceff0;transform:scaleX(.97);transform-origin:0 0">18/10/2024 14:22:00</div>
<div class="a t7" style="left:157px;top:441.70px;color:#eceff0">Alarm</div>
<div class="a t7" style="left:201.7px;top:441.70px;color:#eceff0;transform:scaleX(.86);transform-origin:0 0">SENSOR</div>
<div class="a t7" style="left:253px;top:441.70px;color:#eceff0;transform:scaleX(.942);transform-origin:0 0">SENSOR1 - 6-person, 1-car, 1-truck</div>
<div class="a t7" style="left:40.7px;top:455.86px;color:#eceff0;transform:scaleX(.97);transform-origin:0 0">18/10/2024 14:22:00</div>
<div class="a t7" style="left:157px;top:455.86px;color:#eceff0">Alarm</div>
<div class="a t7" style="left:201.7px;top:455.86px;color:#eceff0;transform:scaleX(.86);transform-origin:0 0">SENSOR</div>
<div class="a t7" style="left:253px;top:455.86px;color:#eceff0;transform:scaleX(.942);transform-origin:0 0">SENSOR1 - sensor_images/sensor1_1729236120_jB8IL1PpOu.jpg</div>
<!--/TBL-->
<div id="rp" class="a"></div>
<div id="rphdr" class="a"></div>
<!--RP-->
<div class="a" style="left:632.2px;top:92.2px;font-size:8.2px;color:#e9eeec;white-space:nowrap;letter-spacing:-.45px;-webkit-text-stroke:.2px currentColor">uoyaueuos (sensor1)</div>
<div class="a" style="left:783px;top:88.7px;width:43px;height:13.7px;background:#56696a;border:.8px solid #7f908f;border-radius:2px"></div>
<div class="a" style="left:787.5px;top:92px;font-size:6.4px;font-weight:bold;color:#e6ebea;white-space:nowrap;letter-spacing:-.45px">Uanuńnav</div>
<div class="a" style="left:818.8px;top:92.6px;font-size:6px;color:#d8dfde;white-space:nowrap">×</div>
<div class="a" style="left:629px;top:110px;width:17.8px;height:12px;background:#3f8587"></div>
<div class="a" style="left:630.8px;top:112.5px;font-size:6.6px;color:#f2f6f6;white-space:nowrap;-webkit-text-stroke:.2px currentColor;transform:scaleX(.92);transform-origin:0 0">CAM</div>
<div class="a" style="left:650px;top:110.6px;font-size:8.2px;color:#4fae5a;white-space:nowrap;letter-spacing:-.1px">67</div>
<div class="a" style="left:661px;top:112.3px;font-size:6.5px;font-weight:bold;color:#eef1f0;white-space:nowrap;letter-spacing:-.4px">unquinsalu 1 ůoluv</div>
<div class="a" style="left:630.8px;top:123.6px;font-size:6.5px;color:#d9dfde;white-space:nowrap;letter-spacing:-.45px;-webkit-text-stroke:.2px currentColor">aonuaqunsai:</div>
<div class="a" style="left:667px;top:123.4px;font-size:7px;color:#45b251;white-space:nowrap;-webkit-text-stroke:.15px currentColor;transform:scaleX(.72);transform-origin:0 0">GOOD</div>
<div class="a" style="left:683.5px;top:123.4px;font-size:7px;color:#eef1f0;white-space:nowrap;-webkit-text-stroke:.2px currentColor;transform:scaleX(.87);transform-origin:0 0">20 min ago</div>
<div class="a" style="left:637px;top:138.0px;font-size:7px;color:#b9c0c0;white-space:nowrap;-webkit-text-stroke:.15px currentColor;transform:scaleX(.87);transform-origin:0 0">Latest: 18/10/2024 14:22:00</div>
<div class="a" style="left:637px;top:148.1px;font-size:7px;font-weight:bold;color:#e9eeec;white-space:nowrap;transform:scaleX(.78);transform-origin:0 0">car:</div>
<div class="a" style="left:649.2px;top:148.1px;font-size:7px;font-weight:bold;color:#3dbb72;white-space:nowrap;transform:scaleX(.85);transform-origin:0 0">1</div>
<div class="a" style="left:655.2px;top:148.1px;font-size:7px;font-weight:bold;color:#e9eeec;white-space:nowrap;transform:scaleX(.78);transform-origin:0 0">person:</div>
<div class="a" style="left:677px;top:148.1px;font-size:7px;font-weight:bold;color:#3dbb72;white-space:nowrap;transform:scaleX(.85);transform-origin:0 0">6</div>
<div class="a" style="left:684px;top:148.1px;font-size:7px;font-weight:bold;color:#e9eeec;white-space:nowrap;transform:scaleX(.78);transform-origin:0 0">truck:</div>
<div class="a" style="left:701.4px;top:148.1px;font-size:7px;font-weight:bold;color:#3dbb72;white-space:nowrap;transform:scaleX(.85);transform-origin:0 0">1</div>
<div class="a" style="left:637.1px;top:158.3px;width:17.1px;height:40.4px;background:#a88a9a;overflow:hidden"><div class="a" style="left:0;top:0;width:100%;height:100%;filter:blur(0.9px)"><div class="a" style="left:0.0px;top:0.0px;width:17.1px;height:6.1px;background:#1e1a1e;border-radius:0"></div><div class="a" style="left:0.0px;top:10.1px;width:7.7px;height:6.1px;background:#24202a;border-radius:30%;transform:rotate(-20deg)"></div><div class="a" style="left:1.7px;top:14.1px;width:5.1px;height:22.2px;background:#1c1a22;border-radius:20%"></div><div class="a" style="left:6.8px;top:20.2px;width:5.1px;height:16.2px;background:#22202a;border-radius:20%"></div><div class="a" style="left:5.1px;top:33.9px;width:11.1px;height:4.8px;background:#d8d4e0;border-radius:40%"></div><div class="a" style="left:0.0px;top:38.4px;width:17.1px;height:2.0px;background:#3a3038;border-radius:0"></div></div></div>
<div class="a" style="left:656.5px;top:158.3px;width:42.3px;height:29.9px;background:#9a8088;overflow:hidden"><div class="a" style="left:0;top:0;width:100%;height:100%;filter:blur(0.9px)"><div class="a" style="left:0.0px;top:0.0px;width:42.3px;height:3.0px;background:#5a4a3a;border-radius:0"></div><div class="a" style="left:3.4px;top:2.4px;width:38.9px;height:23.3px;background:#d6cad8;border-radius:12% 30% 3px 3px"></div><div class="a" style="left:14.0px;top:9.0px;width:25.0px;height:4.8px;background:#3c3644;border-radius:0"></div><div class="a" style="left:36.0px;top:14.9px;width:2.1px;height:3.0px;background:#6a6070;border-radius:0"></div><div class="a" style="left:0.0px;top:11.4px;width:19.0px;height:14.9px;background:#5e5a6a;border-radius:35% 40% 4px 4px"></div><div class="a" style="left:11.8px;top:14.9px;width:4.2px;height:3.0px;background:#b04858;border-radius:0"></div><div class="a" style="left:2.1px;top:20.3px;width:7.2px;height:8.7px;background:#3a3640;border-radius:50%"></div><div class="a" style="left:26.2px;top:19.1px;width:7.6px;height:9.9px;background:#8a8494;border-radius:50%"></div><div class="a" style="left:27.9px;top:21.5px;width:4.2px;height:5.4px;background:#c8c0cc;border-radius:50%"></div><div class="a" style="left:0.0px;top:26.3px;width:42.3px;height:3.6px;background:#b06a78;border-radius:0"></div></div></div>
<div class="a" style="left:700.5px;top:158.3px;width:40.3px;height:40.4px;background:#b898ae;overflow:hidden"><div class="a" style="left:0;top:0;width:100%;height:100%;filter:blur(0.9px)"><div class="a" style="left:27.4px;top:1.6px;width:9.7px;height:10.5px;background:#3a3a44;border-radius:0"></div><div class="a" style="left:2.0px;top:4.8px;width:9.3px;height:10.5px;background:#2c2428;border-radius:50%"></div><div class="a" style="left:15.3px;top:2.0px;width:7.3px;height:8.5px;background:#2a2226;border-radius:50%"></div><div class="a" style="left:15.3px;top:9.7px;width:13.7px;height:12.9px;background:#cfc0c8;border-radius:35%"></div><div class="a" style="left:0.0px;top:14.1px;width:19.3px;height:6.1px;background:#2a2630;border-radius:0;transform:rotate(28deg)"></div><div class="a" style="left:4.0px;top:22.2px;width:1.6px;height:16.2px;background:#2a2630;border-radius:0"></div><div class="a" style="left:14.1px;top:24.2px;width:1.6px;height:14.1px;background:#2a2630;border-radius:0"></div><div class="a" style="left:12.1px;top:18.6px;width:26.2px;height:8.9px;background:#25222a;border-radius:30%"></div><div class="a" style="left:22.2px;top:20.2px;width:10.9px;height:4.8px;background:#a87a78;border-radius:20%;transform:rotate(30deg)"></div><div class="a" style="left:24.2px;top:25.0px;width:7.3px;height:11.3px;background:#a87a78;border-radius:30%"></div><div class="a" style="left:26.6px;top:35.1px;width:10.5px;height:4.4px;background:#ddd6e2;border-radius:40%"></div><div class="a" style="left:0.0px;top:37.2px;width:40.3px;height:3.2px;background:#8a7282;border-radius:0"></div></div></div>
<div class="a" style="left:742.4px;top:158.3px;width:28.4px;height:40.4px;background:#b898ae;overflow:hidden"><div class="a" style="left:0;top:0;width:100%;height:100%;filter:blur(0.9px)"><div class="a" style="left:19.3px;top:1.6px;width:6.8px;height:10.5px;background:#3a3a44;border-radius:0"></div><div class="a" style="left:1.4px;top:4.8px;width:6.5px;height:10.5px;background:#2c2428;border-radius:50%"></div><div class="a" style="left:10.8px;top:2.0px;width:5.1px;height:8.5px;background:#2a2226;border-radius:50%"></div><div class="a" style="left:10.8px;top:9.7px;width:9.7px;height:12.9px;background:#d6c8cc;border-radius:35%"></div><div class="a" style="left:0.0px;top:14.1px;width:13.6px;height:6.1px;background:#2a2630;border-radius:0;transform:rotate(28deg)"></div><div class="a" style="left:2.8px;top:22.2px;width:1.1px;height:16.2px;background:#2a2630;border-radius:0"></div><div class="a" style="left:9.9px;top:24.2px;width:1.1px;height:14.1px;background:#2a2630;border-radius:0"></div><div class="a" style="left:8.5px;top:18.6px;width:18.5px;height:8.9px;background:#25222a;border-radius:30%"></div><div class="a" style="left:15.6px;top:20.2px;width:7.7px;height:4.8px;background:#a87a78;border-radius:20%;transform:rotate(30deg)"></div><div class="a" style="left:17.0px;top:25.0px;width:5.1px;height:11.3px;background:#a87a78;border-radius:30%"></div><div class="a" style="left:18.7px;top:35.1px;width:7.4px;height:4.4px;background:#ddd6e2;border-radius:40%"></div><div class="a" style="left:0.0px;top:37.2px;width:28.4px;height:3.2px;background:#8a7282;border-radius:0"></div></div></div>
<div class="a" style="left:771.9px;top:158.3px;width:13.1px;height:40.4px;background:#a8909e;overflow:hidden"><div class="a" style="left:0;top:0;width:100%;height:100%;filter:blur(0.9px)"><div class="a" style="left:0.0px;top:0.0px;width:13.1px;height:18.2px;background:#22383a;border-radius:0"></div><div class="a" style="left:1.3px;top:1.2px;width:9.8px;height:10.9px;background:#4e8a86;border-radius:40%"></div><div class="a" style="left:2.6px;top:18.2px;width:4.6px;height:18.2px;background:#2a2838;border-radius:0"></div><div class="a" style="left:6.6px;top:20.2px;width:4.6px;height:16.2px;background:#2a2838;border-radius:0"></div><div class="a" style="left:3.9px;top:34.7px;width:8.5px;height:4.4px;background:#dcd8e6;border-radius:40%"></div></div></div>
<div class="a" style="left:786px;top:158.3px;width:35.0px;height:40.4px;background:#bc9cb0;overflow:hidden"><div class="a" style="left:0;top:0;width:100%;height:100%;filter:blur(0.9px)"><div class="a" style="left:23.8px;top:1.6px;width:8.4px;height:10.5px;background:#3a3a44;border-radius:0"></div><div class="a" style="left:1.8px;top:4.8px;width:8.1px;height:10.5px;background:#2c2428;border-radius:50%"></div><div class="a" style="left:13.3px;top:2.0px;width:6.3px;height:8.5px;background:#2a2226;border-radius:50%"></div><div class="a" style="left:13.3px;top:9.7px;width:11.9px;height:12.9px;background:#9e8e80;border-radius:35%"></div><div class="a" style="left:0.0px;top:14.1px;width:16.8px;height:6.1px;background:#2a2630;border-radius:0;transform:rotate(28deg)"></div><div class="a" style="left:3.5px;top:22.2px;width:1.4px;height:16.2px;background:#2a2630;border-radius:0"></div><div class="a" style="left:12.2px;top:24.2px;width:1.4px;height:14.1px;background:#2a2630;border-radius:0"></div><div class="a" style="left:10.5px;top:18.6px;width:22.7px;height:8.9px;background:#25222a;border-radius:30%"></div><div class="a" style="left:19.2px;top:20.2px;width:9.4px;height:4.8px;background:#a87a78;border-radius:20%;transform:rotate(30deg)"></div><div class="a" style="left:21.0px;top:25.0px;width:6.3px;height:11.3px;background:#a87a78;border-radius:30%"></div><div class="a" style="left:23.1px;top:35.1px;width:9.1px;height:4.4px;background:#ddd6e2;border-radius:40%"></div><div class="a" style="left:0.0px;top:37.2px;width:35.0px;height:3.2px;background:#8a7282;border-radius:0"></div></div></div>
<div class="a" style="left:637.3px;top:200.8px;width:108.5px;height:40.9px;background:#8e7a80;overflow:hidden"><div class="a" style="left:0;top:0;width:100%;height:100%;filter:blur(0.9px)"><div class="a" style="left:0.0px;top:0.0px;width:13.0px;height:20.4px;background:#3a3a30;border-radius:0"></div><div class="a" style="left:59.7px;top:0.0px;width:48.8px;height:16.4px;background:#6e6448;border-radius:0"></div><div class="a" style="left:81.4px;top:0.0px;width:27.1px;height:10.2px;background:#8a7656;border-radius:0"></div><div class="a" style="left:86.8px;top:4.1px;width:16.3px;height:10.2px;background:#b89aa8;border-radius:40%"></div><div class="a" style="left:7.6px;top:2.5px;width:57.5px;height:17.2px;background:#d2bed0;border-radius:45% 50% 8% 8%"></div><div class="a" style="left:0.0px;top:13.1px;width:105.2px;height:22.9px;background:#2a2834;border-radius:22% 30% 8% 8%"></div><div class="a" style="left:21.7px;top:4.9px;width:59.7px;height:13.5px;background:#2c2a36;border-radius:50% 55% 0 0"></div><div class="a" style="left:3.3px;top:19.6px;width:9.8px;height:4.9px;background:#d4cce0;border-radius:50%"></div><div class="a" style="left:97.7px;top:18.4px;width:8.7px;height:4.5px;background:#9a4050;border-radius:0"></div><div class="a" style="left:9.8px;top:27.0px;width:15.2px;height:12.7px;background:#6e6674;border-radius:50%"></div><div class="a" style="left:77.0px;top:27.0px;width:15.2px;height:12.7px;background:#6e6674;border-radius:50%"></div><div class="a" style="left:14.1px;top:30.3px;width:6.5px;height:6.1px;background:#3a3640;border-radius:50%"></div><div class="a" style="left:81.4px;top:30.3px;width:6.5px;height:6.1px;background:#3a3640;border-radius:50%"></div><div class="a" style="left:0.0px;top:36.8px;width:108.5px;height:4.1px;background:#a8909c;border-radius:0"></div><div class="a" style="left:92.2px;top:36.0px;width:14.1px;height:4.9px;background:#d0c8d0;border-radius:40%"></div></div></div>
<div class="a" style="left:748px;top:200.8px;width:13.2px;height:40.9px;background:#d0bccc;overflow:hidden"><div class="a" style="left:0;top:0;width:100%;height:100%;filter:blur(0.9px)"><div class="a" style="left:4.0px;top:0.0px;width:5.3px;height:5.7px;background:#2e2830;border-radius:50%"></div><div class="a" style="left:2.4px;top:4.9px;width:8.4px;height:16.4px;background:#2a2836;border-radius:25%"></div><div class="a" style="left:2.9px;top:20.4px;width:3.4px;height:17.6px;background:#262430;border-radius:0"></div><div class="a" style="left:6.9px;top:20.4px;width:3.4px;height:17.6px;background:#262430;border-radius:0"></div><div class="a" style="left:2.6px;top:36.8px;width:7.9px;height:3.7px;background:#d0c8d4;border-radius:40%"></div></div></div>
<div class="a" style="left:630.5px;top:245.6px;width:196px;height:.8px;background:#2c3c42"></div>
<div class="a" style="left:637px;top:248.9px;font-size:7px;color:#b9c0c0;white-space:nowrap;-webkit-text-stroke:.15px currentColor;transform:scaleX(.87);transform-origin:0 0">Latest: 18/10/2024 14:19:26</div>
<div class="a" style="left:637px;top:259.0px;font-size:7px;font-weight:bold;color:#e9eeec;white-space:nowrap;transform:scaleX(.78);transform-origin:0 0">bus:</div>
<div class="a" style="left:650.2px;top:259.0px;font-size:7px;font-weight:bold;color:#3dbb72;white-space:nowrap;transform:scaleX(.85);transform-origin:0 0">1</div>
<div class="a" style="left:656.9px;top:259.0px;font-size:7px;font-weight:bold;color:#e9eeec;white-space:nowrap;transform:scaleX(.78);transform-origin:0 0">car:</div>
<div class="a" style="left:668.7px;top:259.0px;font-size:7px;font-weight:bold;color:#3dbb72;white-space:nowrap;transform:scaleX(.85);transform-origin:0 0">1</div>
<div class="a" style="left:675px;top:259.0px;font-size:7px;font-weight:bold;color:#e9eeec;white-space:nowrap;transform:scaleX(.78);transform-origin:0 0">person:</div>
<div class="a" style="left:697px;top:259.0px;font-size:7px;font-weight:bold;color:#3dbb72;white-space:nowrap;transform:scaleX(.85);transform-origin:0 0">6</div>
<div class="a" style="left:703.1px;top:259.0px;font-size:7px;font-weight:bold;color:#e9eeec;white-space:nowrap;transform:scaleX(.78);transform-origin:0 0">truck:</div>
<div class="a" style="left:720.5px;top:259.0px;font-size:7px;font-weight:bold;color:#3dbb72;white-space:nowrap;transform:scaleX(.85);transform-origin:0 0">1</div>
<div class="a" style="left:637px;top:269.3px;width:19.0px;height:40.3px;background:#5a5a48;overflow:hidden"><div class="a" style="left:0;top:0;width:100%;height:100%;filter:blur(0.9px)"><div class="a" style="left:1.0px;top:4.8px;width:4.4px;height:10.5px;background:#2c2428;border-radius:50%"></div><div class="a" style="left:7.2px;top:2.0px;width:3.4px;height:8.5px;background:#2a2226;border-radius:50%"></div><div class="a" style="left:7.2px;top:9.7px;width:6.5px;height:12.9px;background:#b4b4dc;border-radius:35%"></div><div class="a" style="left:0.0px;top:14.1px;width:9.1px;height:6.0px;background:#2a2630;border-radius:0;transform:rotate(28deg)"></div><div class="a" style="left:1.9px;top:22.2px;width:0.8px;height:16.1px;background:#2a2630;border-radius:0"></div><div class="a" style="left:6.6px;top:24.2px;width:0.8px;height:14.1px;background:#2a2630;border-radius:0"></div><div class="a" style="left:5.7px;top:18.5px;width:12.3px;height:8.9px;background:#25222a;border-radius:30%"></div><div class="a" style="left:10.5px;top:20.2px;width:5.1px;height:4.8px;background:#a87a78;border-radius:20%;transform:rotate(30deg)"></div><div class="a" style="left:11.4px;top:25.0px;width:3.4px;height:11.3px;background:#a87a78;border-radius:30%"></div><div class="a" style="left:12.5px;top:35.1px;width:4.9px;height:4.4px;background:#ddd6e2;border-radius:40%"></div><div class="a" style="left:0.0px;top:37.1px;width:19.0px;height:3.2px;background:#8a7282;border-radius:0"></div></div></div>
<div class="a" style="left:657.8px;top:269.3px;width:13.9px;height:40.3px;background:#9a8a90;overflow:hidden"><div class="a" style="left:0;top:0;width:100%;height:100%;filter:blur(0.9px)"><div class="a" style="left:10.0px;top:4.8px;width:3.2px;height:10.5px;background:#2c2428;border-radius:50%"></div><div class="a" style="left:6.1px;top:2.0px;width:2.5px;height:8.5px;background:#2a2226;border-radius:50%"></div><div class="a" style="left:3.9px;top:9.7px;width:4.7px;height:12.9px;background:#a09080;border-radius:35%"></div><div class="a" style="left:7.2px;top:14.1px;width:6.7px;height:6.0px;background:#2a2630;border-radius:0;transform:rotate(28deg)"></div><div class="a" style="left:12.0px;top:22.2px;width:0.6px;height:16.1px;background:#2a2630;border-radius:0"></div><div class="a" style="left:8.5px;top:24.2px;width:0.6px;height:14.1px;background:#2a2630;border-radius:0"></div><div class="a" style="left:0.7px;top:18.5px;width:9.0px;height:8.9px;background:#25222a;border-radius:30%"></div><div class="a" style="left:2.5px;top:20.2px;width:3.8px;height:4.8px;background:#a87a78;border-radius:20%;transform:rotate(30deg)"></div><div class="a" style="left:3.1px;top:25.0px;width:2.5px;height:11.3px;background:#a87a78;border-radius:30%"></div><div class="a" style="left:1.1px;top:35.1px;width:3.6px;height:4.4px;background:#ddd6e2;border-radius:40%"></div><div class="a" style="left:0.0px;top:37.1px;width:13.9px;height:3.2px;background:#8a7282;border-radius:0"></div></div></div>
<div class="a" style="left:673.5px;top:269.3px;width:45.0px;height:29.2px;background:#9a8088;overflow:hidden"><div class="a" style="left:0;top:0;width:100%;height:100%;filter:blur(0.9px)"><div class="a" style="left:0.0px;top:0.0px;width:45.0px;height:2.9px;background:#5a4a3a;border-radius:0"></div><div class="a" style="left:3.6px;top:2.3px;width:41.4px;height:22.8px;background:#d6cad8;border-radius:12% 30% 3px 3px"></div><div class="a" style="left:14.9px;top:8.8px;width:26.6px;height:4.7px;background:#3c3644;border-radius:0"></div><div class="a" style="left:38.2px;top:14.6px;width:2.3px;height:2.9px;background:#6a6070;border-radius:0"></div><div class="a" style="left:0.0px;top:11.1px;width:20.2px;height:14.6px;background:#5e5a6a;border-radius:35% 40% 4px 4px"></div><div class="a" style="left:12.6px;top:14.6px;width:4.5px;height:2.9px;background:#b04858;border-radius:0"></div><div class="a" style="left:2.2px;top:19.9px;width:7.6px;height:8.5px;background:#3a3640;border-radius:50%"></div><div class="a" style="left:27.9px;top:18.7px;width:8.1px;height:9.6px;background:#8a8494;border-radius:50%"></div><div class="a" style="left:29.7px;top:21.0px;width:4.5px;height:5.3px;background:#c8c0cc;border-radius:50%"></div><div class="a" style="left:0.0px;top:25.7px;width:45.0px;height:3.5px;background:#b06a78;border-radius:0"></div></div></div>
<div class="a" style="left:721px;top:269.3px;width:38.8px;height:40.3px;background:#c0a2b8;overflow:hidden"><div class="a" style="left:0;top:0;width:100%;height:100%;filter:blur(0.9px)"><div class="a" style="left:26.4px;top:1.6px;width:9.3px;height:10.5px;background:#3a3a44;border-radius:0"></div><div class="a" style="left:1.9px;top:4.8px;width:8.9px;height:10.5px;background:#2c2428;border-radius:50%"></div><div class="a" style="left:14.7px;top:2.0px;width:7.0px;height:8.5px;background:#2a2226;border-radius:50%"></div><div class="a" style="left:14.7px;top:9.7px;width:13.2px;height:12.9px;background:#dcd2d8;border-radius:35%"></div><div class="a" style="left:0.0px;top:14.1px;width:18.6px;height:6.0px;background:#2a2630;border-radius:0;transform:rotate(28deg)"></div><div class="a" style="left:3.9px;top:22.2px;width:1.6px;height:16.1px;background:#2a2630;border-radius:0"></div><div class="a" style="left:13.6px;top:24.2px;width:1.6px;height:14.1px;background:#2a2630;border-radius:0"></div><div class="a" style="left:11.6px;top:18.5px;width:25.2px;height:8.9px;background:#25222a;border-radius:30%"></div><div class="a" style="left:21.3px;top:20.2px;width:10.5px;height:4.8px;background:#a87a78;border-radius:20%;transform:rotate(30deg)"></div><div class="a" style="left:23.3px;top:25.0px;width:7.0px;height:11.3px;background:#a87a78;border-radius:30%"></div><div class="a" style="left:25.6px;top:35.1px;width:10.1px;height:4.4px;background:#ddd6e2;border-radius:40%"></div><div class="a" style="left:0.0px;top:37.1px;width:38.8px;height:3.2px;background:#8a7282;border-radius:0"></div></div></div>
<div class="a" style="left:762.2px;top:269.3px;width:24.5px;height:40.3px;background:#6a6448;overflow:hidden"><div class="a" style="left:0;top:0;width:100%;height:100%;filter:blur(0.9px)"><div class="a" style="left:17.6px;top:4.8px;width:5.6px;height:10.5px;background:#2c2428;border-radius:50%"></div><div class="a" style="left:10.8px;top:2.0px;width:4.4px;height:8.5px;background:#2a2226;border-radius:50%"></div><div class="a" style="left:6.9px;top:9.7px;width:8.3px;height:12.9px;background:#c4c0e0;border-radius:35%"></div><div class="a" style="left:12.7px;top:14.1px;width:11.8px;height:6.0px;background:#2a2630;border-radius:0;transform:rotate(28deg)"></div><div class="a" style="left:21.1px;top:22.2px;width:1.0px;height:16.1px;background:#2a2630;border-radius:0"></div><div class="a" style="left:14.9px;top:24.2px;width:1.0px;height:14.1px;background:#2a2630;border-radius:0"></div><div class="a" style="left:1.2px;top:18.5px;width:15.9px;height:8.9px;background:#25222a;border-radius:30%"></div><div class="a" style="left:4.4px;top:20.2px;width:6.6px;height:4.8px;background:#a87a78;border-radius:20%;transform:rotate(30deg)"></div><div class="a" style="left:5.4px;top:25.0px;width:4.4px;height:11.3px;background:#a87a78;border-radius:30%"></div><div class="a" style="left:2.0px;top:35.1px;width:6.4px;height:4.4px;background:#ddd6e2;border-radius:40%"></div><div class="a" style="left:0.0px;top:37.1px;width:24.5px;height:3.2px;background:#8a7282;border-radius:0"></div></div></div>
<div class="a" style="left:637px;top:311.9px;width:45.2px;height:30.0px;background:#9a8088;overflow:hidden"><div class="a" style="left:0;top:0;width:100%;height:100%;filter:blur(0.9px)"><div class="a" style="left:0.0px;top:0.0px;width:45.2px;height:3.0px;background:#5a4a3a;border-radius:0"></div><div class="a" style="left:3.6px;top:2.4px;width:41.6px;height:23.4px;background:#d6cad8;border-radius:12% 30% 3px 3px"></div><div class="a" style="left:14.9px;top:9.0px;width:26.7px;height:4.8px;background:#3c3644;border-radius:0"></div><div class="a" style="left:38.4px;top:15.0px;width:2.3px;height:3.0px;background:#6a6070;border-radius:0"></div><div class="a" style="left:0.0px;top:11.4px;width:20.3px;height:15.0px;background:#5e5a6a;border-radius:35% 40% 4px 4px"></div><div class="a" style="left:12.7px;top:15.0px;width:4.5px;height:3.0px;background:#b04858;border-radius:0"></div><div class="a" style="left:2.3px;top:20.4px;width:7.7px;height:8.7px;background:#3a3640;border-radius:50%"></div><div class="a" style="left:28.0px;top:19.2px;width:8.1px;height:9.9px;background:#8a8494;border-radius:50%"></div><div class="a" style="left:29.8px;top:21.6px;width:4.5px;height:5.4px;background:#c8c0cc;border-radius:50%"></div><div class="a" style="left:0.0px;top:26.4px;width:45.2px;height:3.6px;background:#b06a78;border-radius:0"></div></div></div>
<div class="a" style="left:683.7px;top:311.9px;width:5.2px;height:40.1px;background:#b8a0ae;overflow:hidden"><div class="a" style="left:0;top:0;width:100%;height:100%;filter:blur(0.9px)"><div class="a" style="left:1.6px;top:0.0px;width:2.1px;height:5.6px;background:#2e2830;border-radius:50%"></div><div class="a" style="left:0.9px;top:4.8px;width:3.3px;height:16.0px;background:#2a2a30;border-radius:25%"></div><div class="a" style="left:1.1px;top:20.1px;width:1.4px;height:17.2px;background:#262430;border-radius:0"></div><div class="a" style="left:2.7px;top:20.1px;width:1.4px;height:17.2px;background:#262430;border-radius:0"></div><div class="a" style="left:1.0px;top:36.1px;width:3.1px;height:3.6px;background:#d0c8d4;border-radius:40%"></div></div></div>
<div class="a" style="left:691.1px;top:311.9px;width:113.2px;height:40.3px;background:#8e7a80;overflow:hidden"><div class="a" style="left:0;top:0;width:100%;height:100%;filter:blur(0.9px)"><div class="a" style="left:0.0px;top:0.0px;width:13.6px;height:20.2px;background:#3a3a30;border-radius:0"></div><div class="a" style="left:62.3px;top:0.0px;width:50.9px;height:16.1px;background:#6e6448;border-radius:0"></div><div class="a" style="left:84.9px;top:0.0px;width:28.3px;height:10.1px;background:#8a7656;border-radius:0"></div><div class="a" style="left:90.6px;top:4.0px;width:17.0px;height:10.1px;background:#b89aa8;border-radius:40%"></div><div class="a" style="left:7.9px;top:2.4px;width:60.0px;height:16.9px;background:#d2bed0;border-radius:45% 50% 8% 8%"></div><div class="a" style="left:0.0px;top:12.9px;width:109.8px;height:22.6px;background:#2a2834;border-radius:22% 30% 8% 8%"></div><div class="a" style="left:22.6px;top:4.8px;width:62.3px;height:13.3px;background:#2c2a36;border-radius:50% 55% 0 0"></div><div class="a" style="left:3.4px;top:19.3px;width:10.2px;height:4.8px;background:#d4cce0;border-radius:50%"></div><div class="a" style="left:101.9px;top:18.1px;width:9.1px;height:4.4px;background:#9a4050;border-radius:0"></div><div class="a" style="left:10.2px;top:26.6px;width:15.8px;height:12.5px;background:#6e6674;border-radius:50%"></div><div class="a" style="left:80.4px;top:26.6px;width:15.8px;height:12.5px;background:#6e6674;border-radius:50%"></div><div class="a" style="left:14.7px;top:29.8px;width:6.8px;height:6.0px;background:#3a3640;border-radius:50%"></div><div class="a" style="left:84.9px;top:29.8px;width:6.8px;height:6.0px;background:#3a3640;border-radius:50%"></div><div class="a" style="left:0.0px;top:36.3px;width:113.2px;height:4.0px;background:#a8909c;border-radius:0"></div><div class="a" style="left:96.2px;top:35.5px;width:14.7px;height:4.8px;background:#d0c8d0;border-radius:40%"></div></div></div>
<div class="a" style="left:806.1px;top:311.9px;width:12.9px;height:31.8px;background:#c8b8c4;overflow:hidden"><div class="a" style="left:0;top:0;width:100%;height:100%;filter:blur(0.9px)"><div class="a" style="left:3.9px;top:0.0px;width:5.2px;height:4.5px;background:#2e2830;border-radius:50%"></div><div class="a" style="left:2.3px;top:3.8px;width:8.3px;height:12.7px;background:#2c2a34;border-radius:25%"></div><div class="a" style="left:2.8px;top:15.9px;width:3.4px;height:13.7px;background:#262430;border-radius:0"></div><div class="a" style="left:6.7px;top:15.9px;width:3.4px;height:13.7px;background:#262430;border-radius:0"></div><div class="a" style="left:2.6px;top:28.6px;width:7.7px;height:2.9px;background:#d0c8d4;border-radius:40%"></div></div></div>
<div class="a" style="left:630.5px;top:356.4px;width:196px;height:.8px;background:#2c3c42"></div>
<div class="a" style="left:637px;top:359.3px;font-size:7px;color:#b9c0c0;white-space:nowrap;-webkit-text-stroke:.15px currentColor;transform:scaleX(.87);transform-origin:0 0">Latest: 18/10/2024 14:17:43</div>
<div class="a" style="left:637px;top:369.4px;font-size:7px;font-weight:bold;color:#e9eeec;white-space:nowrap;transform:scaleX(.78);transform-origin:0 0">car:</div>
<div class="a" style="left:649.3px;top:369.4px;font-size:7px;font-weight:bold;color:#3dbb72;white-space:nowrap;transform:scaleX(.85);transform-origin:0 0">1</div>
<div class="a" style="left:654.8px;top:369.4px;font-size:7px;font-weight:bold;color:#e9eeec;white-space:nowrap;transform:scaleX(.78);transform-origin:0 0">person:</div>
<div class="a" style="left:677.3px;top:369.4px;font-size:7px;font-weight:bold;color:#3dbb72;white-space:nowrap;transform:scaleX(.85);transform-origin:0 0">11</div>
<div class="a" style="left:637.4px;top:379.6px;width:27.1px;height:40.6px;background:#b898ac;overflow:hidden"><div class="a" style="left:0;top:0;width:100%;height:100%;filter:blur(0.9px)"><div class="a" style="left:1.4px;top:4.9px;width:6.2px;height:10.6px;background:#2c2428;border-radius:50%"></div><div class="a" style="left:10.3px;top:2.0px;width:4.9px;height:8.5px;background:#2a2226;border-radius:50%"></div><div class="a" style="left:10.3px;top:9.7px;width:9.2px;height:13.0px;background:#aaa2b4;border-radius:35%"></div><div class="a" style="left:0.0px;top:14.2px;width:13.0px;height:6.1px;background:#2a2630;border-radius:0;transform:rotate(28deg)"></div><div class="a" style="left:2.7px;top:22.3px;width:1.1px;height:16.2px;background:#2a2630;border-radius:0"></div><div class="a" style="left:9.5px;top:24.4px;width:1.1px;height:14.2px;background:#2a2630;border-radius:0"></div><div class="a" style="left:8.1px;top:18.7px;width:17.6px;height:8.9px;background:#25222a;border-radius:30%"></div><div class="a" style="left:14.9px;top:20.3px;width:7.3px;height:4.9px;background:#a87a78;border-radius:20%;transform:rotate(30deg)"></div><div class="a" style="left:16.3px;top:25.2px;width:4.9px;height:11.4px;background:#a87a78;border-radius:30%"></div><div class="a" style="left:17.9px;top:35.3px;width:7.0px;height:4.5px;background:#ddd6e2;border-radius:40%"></div><div class="a" style="left:0.0px;top:37.4px;width:27.1px;height:3.2px;background:#8a7282;border-radius:0"></div></div></div>
<div class="a" style="left:665.6px;top:379.6px;width:26.0px;height:40.6px;background:#9a8090;overflow:hidden"><div class="a" style="left:0;top:0;width:100%;height:100%;filter:blur(0.9px)"><div class="a" style="left:0.0px;top:0.0px;width:13.0px;height:20.3px;background:#3e7a70;border-radius:0"></div><div class="a" style="left:3.9px;top:3.2px;width:20.0px;height:21.1px;background:#2a2226;border-radius:45%"></div><div class="a" style="left:7.8px;top:17.1px;width:14.3px;height:13.4px;background:#c8b4b8;border-radius:40%"></div><div class="a" style="left:9.1px;top:20.3px;width:11.7px;height:8.9px;background:#e6e2ea;border-radius:40%"></div><div class="a" style="left:0.0px;top:28.4px;width:19.5px;height:12.2px;background:#7e8cc0;border-radius:30% 30% 0 0"></div><div class="a" style="left:19.5px;top:12.2px;width:6.5px;height:28.4px;background:#2a2838;border-radius:0"></div></div></div>
<div class="a" style="left:693.9px;top:379.6px;width:32.7px;height:40.6px;background:#c0a0b8;overflow:hidden"><div class="a" style="left:0;top:0;width:100%;height:100%;filter:blur(0.9px)"><div class="a" style="left:27.8px;top:0.0px;width:4.9px;height:40.6px;background:#d8c0d0;border-radius:0"></div><div class="a" style="left:11.4px;top:2.0px;width:12.1px;height:12.2px;background:#2b2224;border-radius:50%"></div><div class="a" style="left:3.3px;top:12.2px;width:27.8px;height:23.5px;background:#c2b2aa;border-radius:35% 35% 0 0"></div><div class="a" style="left:0.0px;top:34.5px;width:32.7px;height:6.1px;background:#3a3236;border-radius:0"></div></div></div>
<div class="a" style="left:728.4px;top:379.6px;width:36.2px;height:40.6px;background:#c0a0b8;overflow:hidden"><div class="a" style="left:0;top:0;width:100%;height:100%;filter:blur(0.9px)"><div class="a" style="left:1.8px;top:4.9px;width:8.3px;height:10.6px;background:#2c2428;border-radius:50%"></div><div class="a" style="left:13.8px;top:2.0px;width:6.5px;height:8.5px;background:#2a2226;border-radius:50%"></div><div class="a" style="left:13.8px;top:9.7px;width:12.3px;height:13.0px;background:#cfc4cc;border-radius:35%"></div><div class="a" style="left:0.0px;top:14.2px;width:17.4px;height:6.1px;background:#2a2630;border-radius:0;transform:rotate(28deg)"></div><div class="a" style="left:3.6px;top:22.3px;width:1.4px;height:16.2px;background:#2a2630;border-radius:0"></div><div class="a" style="left:12.7px;top:24.4px;width:1.4px;height:14.2px;background:#2a2630;border-radius:0"></div><div class="a" style="left:10.9px;top:18.7px;width:23.5px;height:8.9px;background:#25222a;border-radius:30%"></div><div class="a" style="left:19.9px;top:20.3px;width:9.8px;height:4.9px;background:#a87a78;border-radius:20%;transform:rotate(30deg)"></div><div class="a" style="left:21.7px;top:25.2px;width:6.5px;height:11.4px;background:#a87a78;border-radius:30%"></div><div class="a" style="left:23.9px;top:35.3px;width:9.4px;height:4.5px;background:#ddd6e2;border-radius:40%"></div><div class="a" style="left:0.0px;top:37.4px;width:36.2px;height:3.2px;background:#8a7282;border-radius:0"></div></div></div>
<div class="a" style="left:766.1px;top:379.6px;width:11.3px;height:40.6px;background:#9a7e8c;overflow:hidden"><div class="a" style="left:0;top:0;width:100%;height:100%;filter:blur(0.9px)"><div class="a" style="left:3.4px;top:0.0px;width:4.5px;height:5.7px;background:#2e2830;border-radius:50%"></div><div class="a" style="left:2.0px;top:4.9px;width:7.2px;height:16.2px;background:#4a4060;border-radius:25%"></div><div class="a" style="left:2.5px;top:20.3px;width:2.9px;height:17.5px;background:#262430;border-radius:0"></div><div class="a" style="left:5.9px;top:20.3px;width:2.9px;height:17.5px;background:#262430;border-radius:0"></div><div class="a" style="left:2.3px;top:36.5px;width:6.8px;height:3.7px;background:#d0c8d4;border-radius:40%"></div></div></div>
<div class="a" style="left:779.7px;top:379.6px;width:12.4px;height:32.4px;background:#a88896;overflow:hidden"><div class="a" style="left:0;top:0;width:100%;height:100%;filter:blur(0.9px)"><div class="a" style="left:3.7px;top:0.0px;width:5.0px;height:4.5px;background:#2e2830;border-radius:50%"></div><div class="a" style="left:2.2px;top:3.9px;width:7.9px;height:13.0px;background:#3a3444;border-radius:25%"></div><div class="a" style="left:2.7px;top:16.2px;width:3.2px;height:13.9px;background:#3a3444;border-radius:0"></div><div class="a" style="left:6.4px;top:16.2px;width:3.2px;height:13.9px;background:#3a3444;border-radius:0"></div><div class="a" style="left:2.5px;top:29.2px;width:7.4px;height:2.9px;background:#e0d8e4;border-radius:40%"></div></div></div>
<div class="a" style="left:793.2px;top:379.6px;width:14.3px;height:40.6px;background:#b098a8;overflow:hidden"><div class="a" style="left:0;top:0;width:100%;height:100%;filter:blur(0.9px)"><div class="a" style="left:4.3px;top:0.0px;width:5.7px;height:5.7px;background:#2e2830;border-radius:50%"></div><div class="a" style="left:2.6px;top:4.9px;width:9.2px;height:16.2px;background:#7a68b8;border-radius:25%"></div><div class="a" style="left:3.1px;top:20.3px;width:3.7px;height:17.5px;background:#5a5870;border-radius:0"></div><div class="a" style="left:7.4px;top:20.3px;width:3.7px;height:17.5px;background:#5a5870;border-radius:0"></div><div class="a" style="left:2.9px;top:36.5px;width:8.6px;height:3.7px;background:#d0c8d4;border-radius:40%"></div></div></div>
<div class="a" style="left:637.4px;top:422.3px;width:114.1px;height:40.7px;background:#8e7a80;overflow:hidden"><div class="a" style="left:0;top:0;width:100%;height:100%;filter:blur(0.9px)"><div class="a" style="left:0.0px;top:0.0px;width:13.7px;height:20.3px;background:#3a3a30;border-radius:0"></div><div class="a" style="left:62.8px;top:0.0px;width:51.3px;height:16.3px;background:#6e6448;border-radius:0"></div><div class="a" style="left:85.6px;top:0.0px;width:28.5px;height:10.2px;background:#8a7656;border-radius:0"></div><div class="a" style="left:91.3px;top:4.1px;width:17.1px;height:10.2px;background:#b89aa8;border-radius:40%"></div><div class="a" style="left:8.0px;top:2.4px;width:60.5px;height:17.1px;background:#d2bed0;border-radius:45% 50% 8% 8%"></div><div class="a" style="left:0.0px;top:13.0px;width:110.7px;height:22.8px;background:#2a2834;border-radius:22% 30% 8% 8%"></div><div class="a" style="left:22.8px;top:4.9px;width:62.8px;height:13.4px;background:#2c2a36;border-radius:50% 55% 0 0"></div><div class="a" style="left:3.4px;top:19.5px;width:10.3px;height:4.9px;background:#d4cce0;border-radius:50%"></div><div class="a" style="left:102.7px;top:18.3px;width:9.1px;height:4.5px;background:#9a4050;border-radius:0"></div><div class="a" style="left:10.3px;top:26.9px;width:16.0px;height:12.6px;background:#6e6674;border-radius:50%"></div><div class="a" style="left:81.0px;top:26.9px;width:16.0px;height:12.6px;background:#6e6674;border-radius:50%"></div><div class="a" style="left:14.8px;top:30.1px;width:6.8px;height:6.1px;background:#3a3640;border-radius:50%"></div><div class="a" style="left:85.6px;top:30.1px;width:6.8px;height:6.1px;background:#3a3640;border-radius:50%"></div><div class="a" style="left:0.0px;top:36.6px;width:114.1px;height:4.1px;background:#a8909c;border-radius:0"></div><div class="a" style="left:97.0px;top:35.8px;width:14.8px;height:4.9px;background:#d0c8d0;border-radius:40%"></div></div></div>
<div class="a" style="left:753.3px;top:422.3px;width:35.4px;height:40.7px;background:#a88a9e;overflow:hidden"><div class="a" style="left:0;top:0;width:100%;height:100%;filter:blur(0.9px)"><div class="a" style="left:1.8px;top:4.9px;width:8.1px;height:10.6px;background:#2c2428;border-radius:50%"></div><div class="a" style="left:13.5px;top:2.0px;width:6.4px;height:8.5px;background:#2a2226;border-radius:50%"></div><div class="a" style="left:13.5px;top:9.8px;width:12.0px;height:13.0px;background:#a89888;border-radius:35%"></div><div class="a" style="left:0.0px;top:14.2px;width:17.0px;height:6.1px;background:#2a2630;border-radius:0;transform:rotate(28deg)"></div><div class="a" style="left:3.5px;top:22.4px;width:1.4px;height:16.3px;background:#2a2630;border-radius:0"></div><div class="a" style="left:12.4px;top:24.4px;width:1.4px;height:14.2px;background:#2a2630;border-radius:0"></div><div class="a" style="left:10.6px;top:18.7px;width:23.0px;height:9.0px;background:#25222a;border-radius:30%"></div><div class="a" style="left:19.5px;top:20.3px;width:9.6px;height:4.9px;background:#a87a78;border-radius:20%;transform:rotate(30deg)"></div><div class="a" style="left:21.2px;top:25.2px;width:6.4px;height:11.4px;background:#a87a78;border-radius:30%"></div><div class="a" style="left:23.4px;top:35.4px;width:9.2px;height:4.5px;background:#ddd6e2;border-radius:40%"></div><div class="a" style="left:0.0px;top:37.4px;width:35.4px;height:3.3px;background:#8a7282;border-radius:0"></div></div></div>
<div class="a" style="left:791.7px;top:422.3px;width:12.8px;height:40.7px;background:#5a5060;overflow:hidden"><div class="a" style="left:0;top:0;width:100%;height:100%;filter:blur(0.9px)"><div class="a" style="left:3.8px;top:0.0px;width:5.1px;height:5.7px;background:#2e2830;border-radius:50%"></div><div class="a" style="left:2.3px;top:4.9px;width:8.2px;height:16.3px;background:#5a6690;border-radius:25%"></div><div class="a" style="left:2.8px;top:20.3px;width:3.3px;height:17.5px;background:#34323e;border-radius:0"></div><div class="a" style="left:6.7px;top:20.3px;width:3.3px;height:17.5px;background:#34323e;border-radius:0"></div><div class="a" style="left:2.6px;top:36.6px;width:7.7px;height:3.7px;background:#8a7a86;border-radius:40%"></div></div></div>
<div class="a" style="left:806.1px;top:422.3px;width:12.0px;height:40.7px;background:#7a6470;overflow:hidden"><div class="a" style="left:0;top:0;width:100%;height:100%;filter:blur(0.9px)"><div class="a" style="left:3.6px;top:0.0px;width:4.8px;height:5.7px;background:#2e2830;border-radius:50%"></div><div class="a" style="left:2.2px;top:4.9px;width:7.7px;height:16.3px;background:#8090b8;border-radius:25%"></div><div class="a" style="left:2.6px;top:20.3px;width:3.1px;height:17.5px;background:#34323e;border-radius:0"></div><div class="a" style="left:6.2px;top:20.3px;width:3.1px;height:17.5px;background:#34323e;border-radius:0"></div><div class="a" style="left:2.4px;top:36.6px;width:7.2px;height:3.7px;background:#a07a70;border-radius:40%"></div></div></div>
<div class="a" style="left:637px;top:465px;width:10px;height:3px;background:#cfd4d4;opacity:.5;border-radius:1px"></div>
<!--/RP-->
</body></html>
